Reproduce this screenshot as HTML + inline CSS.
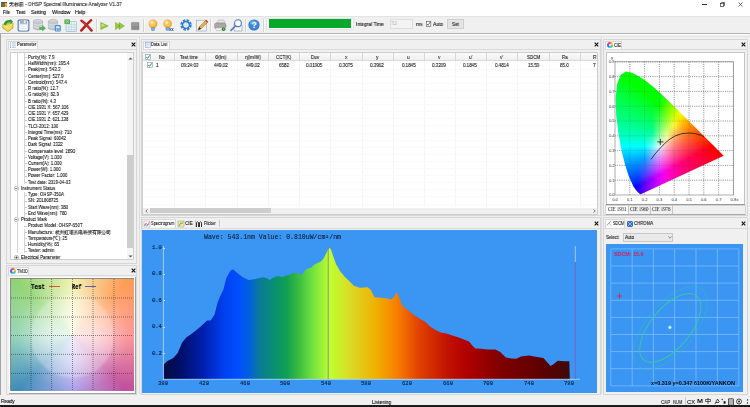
<!DOCTYPE html><html><head><meta charset="utf-8"><style>
*{margin:0;padding:0;box-sizing:border-box}
html,body{width:750px;height:407px;overflow:hidden;background:#f0f0f0;font-family:"Liberation Sans",sans-serif;color:#000;position:relative}
.ab{position:absolute}
.t{position:absolute;white-space:nowrap;transform-origin:0 50%;will-change:transform}

</style></head><body>
<div class="ab" style="left:0px;top:0px;width:750px;height:16px;background:#fff;"></div>
<svg class="ab" style="left:1px;top:2px;overflow:visible" width="6" height="5" viewBox="0 0 6 5"><rect x="0" y="0" width="2" height="5" fill="#3a8a3a"/><rect x="2" y="0" width="2" height="5" fill="#c84a2a"/><rect x="4" y="0" width="2" height="5" fill="#e0b030"/><rect x="0" y="0" width="6" height="1" fill="#555"/></svg>
<div class="ab" style="left:702px;top:4px;width:5px;height:0.8px;background:#333;"></div>
<svg class="ab" style="left:720px;top:2px;overflow:visible" width="5" height="5" viewBox="0 0 5 5"><rect x="0.5" y="1.3" width="3.2" height="3.2" fill="none" stroke="#333" stroke-width="0.7"/><path d="M1.5 1.3V0.5H4.5V3.5H3.7" fill="none" stroke="#333" stroke-width="0.7"/></svg>
<svg class="ab" style="left:738px;top:2px;overflow:visible" width="5" height="5" viewBox="0 0 5 5"><path d="M0.5 0.5L4.5 4.5M4.5 0.5L0.5 4.5" stroke="#333" stroke-width="0.7"/></svg>
<div class="ab" style="left:0px;top:16px;width:750px;height:1px;background:#e3e3e3;"></div>
<div class="ab" style="left:0px;top:17px;width:750px;height:16px;background:#f0f0f0;"></div>
<div class="ab" style="left:0px;top:33px;width:750px;height:1px;background:#b4b4b4;"></div>
<div class="ab" style="left:0px;top:34px;width:750px;height:1px;background:#fafafa;"></div>
<div class="ab" style="left:95.5px;top:19px;width:1px;height:13px;background:#d4d4d4;"></div>
<div class="ab" style="left:96.5px;top:19px;width:1px;height:13px;background:#fbfbfb;"></div>
<div class="ab" style="left:142.5px;top:19px;width:1px;height:13px;background:#d4d4d4;"></div>
<div class="ab" style="left:143.5px;top:19px;width:1px;height:13px;background:#fbfbfb;"></div>
<div class="ab" style="left:210px;top:19px;width:1px;height:13px;background:#d4d4d4;"></div>
<div class="ab" style="left:211px;top:19px;width:1px;height:13px;background:#fbfbfb;"></div>
<div class="ab" style="left:245px;top:19px;width:1px;height:13px;background:#d4d4d4;"></div>
<div class="ab" style="left:246px;top:19px;width:1px;height:13px;background:#fbfbfb;"></div>
<div class="ab" style="left:263px;top:19px;width:1px;height:13px;background:#d4d4d4;"></div>
<div class="ab" style="left:264px;top:19px;width:1px;height:13px;background:#fbfbfb;"></div>
<svg class="ab" style="left:2px;top:19px;overflow:visible" width="12" height="13" viewBox="0 0 12 13"><path d="M0.8 5.5 L11 4 L11 9 L6 12.6 L0.8 9Z" fill="#f2d84a" stroke="#a08a20" stroke-width="0.6"/><path d="M1.2 6 L6 9 L10.6 5" fill="none" stroke="#fff3a0" stroke-width="0.6"/><path d="M1.5 5.2 Q3 0.5 8.5 1 L8 -0.2 L11 2.5 L8.5 5.2 L8.5 3.6 Q5 3.2 3.5 6.5Z" fill="#2e9a36"/></svg>
<svg class="ab" style="left:17px;top:19px;overflow:visible" width="13" height="13" viewBox="0 0 13 13"><rect x="0.6" y="0.6" width="11.8" height="11.8" rx="1.6" fill="#4a6ea8"/><rect x="1.6" y="1.4" width="9.8" height="10.2" rx="1" fill="#dfe8f5"/><rect x="3" y="0.6" width="7" height="4.2" fill="#a6b0c0"/><rect x="6.8" y="1.2" width="1.8" height="3" fill="#e8ecf2"/><rect x="2.8" y="6.4" width="7.4" height="5" fill="#fff"/><path d="M3.6 8H9.4M3.6 9.6H9.4" stroke="#b8c8e0" stroke-width="0.5"/></svg>
<svg class="ab" style="left:33px;top:19px;overflow:visible" width="13" height="12" viewBox="0 0 13 12"><ellipse cx="5" cy="2.4" rx="4.6" ry="2" fill="#d4d8dc" stroke="#9aa0a6" stroke-width="0.5"/><path d="M0.4 2.4 V9.6 Q5 12.6 9.6 9.6 V2.4" fill="#c2c7cc" stroke="#9aa0a6" stroke-width="0.5"/><path d="M0.4 5 Q5 7.6 9.6 5 M0.4 7.4 Q5 10 9.6 7.4" fill="none" stroke="#eef0f2" stroke-width="0.6"/><path d="M6.5 8.2 H9.5 V6.5 L12.6 9.3 L9.5 12 V10.4 H6.5Z" fill="#50b848" stroke="#2a8a2a" stroke-width="0.3"/></svg>
<svg class="ab" style="left:48px;top:19px;overflow:visible" width="13" height="12.5" viewBox="0 0 13 12.5"><ellipse cx="5" cy="2.4" rx="4.6" ry="2" fill="#d4d8dc" stroke="#9aa0a6" stroke-width="0.5"/><path d="M0.4 2.4 V9.6 Q5 12.6 9.6 9.6 V2.4" fill="#c2c7cc" stroke="#9aa0a6" stroke-width="0.5"/><path d="M0.4 5 Q5 7.6 9.6 5 M0.4 7.4 Q5 10 9.6 7.4" fill="none" stroke="#eef0f2" stroke-width="0.6"/><rect x="6.8" y="6" width="6" height="6.4" rx="1" fill="#4a90c8"/><rect x="8" y="7.2" width="3.6" height="2.2" fill="#d8ecff"/><rect x="8" y="10.3" width="1.2" height="1.4" fill="#d8ecff"/><rect x="10.4" y="10.3" width="1.2" height="1.4" fill="#d8ecff"/></svg>
<svg class="ab" style="left:64px;top:19px;overflow:visible" width="13" height="13" viewBox="0 0 13 13"><rect x="2" y="2.5" width="10.4" height="10" rx="0.6" fill="#eaf4fb" stroke="#8ab0c8" stroke-width="0.6"/><path d="M2 5.6H12.4M2 8.2H12.4M2 10.6H12.4M4.8 2.5V12.5M7.4 2.5V12.5M10 2.5V12.5" stroke="#a8c8dc" stroke-width="0.45"/><rect x="0.4" y="0.4" width="5.6" height="4.6" fill="#5aae48"/><path d="M1.6 1.4L4.8 4M4.8 1.4L1.6 4" stroke="#c8f0b8" stroke-width="0.6"/></svg>
<svg class="ab" style="left:80px;top:19px;overflow:visible" width="13" height="13" viewBox="0 0 13 13"><path d="M1.5 1.8 Q6 5 11.6 11.6 M11.2 1.2 Q6 6 1.2 11.6" stroke="#b81c1c" stroke-width="2.4" stroke-linecap="round" fill="none"/><path d="M2 2.2 Q6 5.2 11 10.8" stroke="#e05050" stroke-width="0.7" fill="none"/></svg>
<svg class="ab" style="left:100px;top:21.5px;overflow:visible" width="9" height="8" viewBox="0 0 9 8"><path d="M0.8 0.5 L8.2 4 L0.8 7.5Z" fill="#9ccc3a" stroke="#6a9a20" stroke-width="0.5"/><path d="M1.6 1.8 L5 3.6 L1.6 4.6Z" fill="#c8ec80"/></svg>
<svg class="ab" style="left:115px;top:21.5px;overflow:visible" width="10" height="8" viewBox="0 0 10 8"><path d="M0.6 0.5 L5.2 4 L0.6 7.5Z M4 0.5 L9.4 4 L4 7.5Z" fill="#9ccc3a" stroke="#6a9a20" stroke-width="0.5"/></svg>
<svg class="ab" style="left:131px;top:21.5px;overflow:visible" width="8.5" height="8" viewBox="0 0 8.5 8"><rect x="0.4" y="0.4" width="7.6" height="7.4" rx="0.5" fill="#8c8c8c" stroke="#777" stroke-width="0.4"/><rect x="1" y="1" width="6.4" height="3" fill="#9a9a9a"/></svg>
<svg class="ab" style="left:148px;top:18.5px;overflow:visible" width="10" height="12" viewBox="0 0 10 12"><circle cx="5" cy="4.8" r="4.4" fill="#f3a828"/><circle cx="4.5" cy="4.2" r="3.2" fill="#f8c860"/><circle cx="4" cy="3.4" r="1.6" fill="#fde8b0"/><path d="M3.2 8.6 L3.4 11.2 Q5 12.2 6.6 11.2 L6.8 8.6Z" fill="#88acd8" stroke="#5a80b8" stroke-width="0.4"/></svg>
<svg class="ab" style="left:163px;top:18.5px;overflow:visible" width="11" height="12.5" viewBox="0 0 11 12.5"><circle cx="4.6" cy="4.8" r="4.3" fill="#f3a828"/><circle cx="4.1" cy="4.2" r="3.1" fill="#f8c860"/><circle cx="3.6" cy="3.4" r="1.5" fill="#fde8b0"/><path d="M2.8 8.6 L3 11 Q4.6 12 6.2 11 L6.4 8.6Z" fill="#88acd8" stroke="#5a80b8" stroke-width="0.4"/><path d="M6.4 9 L8.2 12 M8.2 9 L6.4 12 M8.6 9 L10.4 12 M10.4 9 L8.6 12" stroke="#2a5aa8" stroke-width="0.7"/></svg>
<svg class="ab" style="left:180px;top:19px;overflow:visible" width="12" height="12" viewBox="0 0 12 12"><circle cx="6" cy="6" r="4.4" fill="none" stroke="#2e7fd4" stroke-width="2.6" stroke-dasharray="2.3 1.15"/><circle cx="6" cy="6" r="3.3" fill="none" stroke="#2a78cc" stroke-width="1.2"/><circle cx="5.4" cy="5.2" r="1.6" fill="none" stroke="#9ccaf6" stroke-width="0.6"/></svg>
<svg class="ab" style="left:196px;top:19px;overflow:visible" width="12.5" height="12.5" viewBox="0 0 12.5 12.5"><rect x="0.5" y="1.2" width="10" height="10.8" fill="#eef0f4" stroke="#98a2b0" stroke-width="0.6"/><path d="M2.2 11 L3.2 8 L10.2 1 L12 2.8 L5 9.8Z" fill="#f6b040" stroke="#704018" stroke-width="0.45"/><path d="M10.2 1 L12 2.8 L11 3.8 L9.2 2Z" fill="#d04040"/><path d="M2.2 11 L3.2 8 L5 9.8Z" fill="#222"/></svg>
<svg class="ab" style="left:214px;top:19px;overflow:visible" width="12.5" height="12.5" viewBox="0 0 12.5 12.5"><path d="M2.5 4 L4.5 1 L10 1 L11 4Z" fill="#e4e4e4" stroke="#999" stroke-width="0.4"/><rect x="0.5" y="4" width="11.5" height="5.5" rx="1.8" fill="#a8a8a8" stroke="#777" stroke-width="0.4"/><path d="M1.5 9 L2.5 11.6 H9 L10 9Z" fill="#f4f4f4" stroke="#999" stroke-width="0.4"/><circle cx="9.6" cy="10.2" r="1.8" fill="#2a7a2a"/><circle cx="9.6" cy="10.2" r="0.9" fill="#5ac85a"/></svg>
<svg class="ab" style="left:230px;top:19px;overflow:visible" width="12.5" height="12.5" viewBox="0 0 12.5 12.5"><path d="M4 4.5 V12 H12 V6" fill="#f4f6fa" stroke="#8a96aa" stroke-width="0.6"/><circle cx="8" cy="4.2" r="3.4" fill="#fff" fill-opacity="0.8" stroke="#4a7cc4" stroke-width="1.1"/><path d="M5.6 6.8 L1 11.4" stroke="#4a7cc4" stroke-width="1.5" stroke-linecap="round"/></svg>
<svg class="ab" style="left:248px;top:19px;overflow:visible" width="12" height="12" viewBox="0 0 12 12"><circle cx="6" cy="6" r="5.6" fill="#2a70cc"/><circle cx="6" cy="6" r="4.8" fill="#3a88de"/><ellipse cx="5.4" cy="3.8" rx="3.4" ry="2.2" fill="#7ab4f0" opacity="0.7"/><text x="6" y="9.4" font-size="8.5" font-weight="bold" text-anchor="middle" fill="#fff" font-family="Liberation Sans">?</text></svg>
<div class="ab" style="left:266px;top:18px;width:88px;height:12px;background:#fbfbfb;border:1px solid #e4e4e4"></div>
<div class="ab" style="left:268.7px;top:19px;width:82.6px;height:9px;background:#0aa82a;"></div>
<div class="ab" style="left:389.5px;top:19.4px;width:23.5px;height:9.2px;background:#f3f3f3;border:1px solid #dedede"></div>
<svg class="ab" style="left:426px;top:21px;overflow:visible" width="5" height="6" viewBox="0 0 5 6"><rect x="0.4" y="0.4" width="4.4" height="5" fill="#fff" stroke="#555" stroke-width="0.6"/><path d="M1 3 L2.1 4.3 L4.2 1.1" stroke="#333" stroke-width="0.7" fill="none"/></svg>
<div class="ab" style="left:446.6px;top:19px;width:17.4px;height:10px;background:#e4e4e4;border:1px solid #cfcfcf"></div>
<div class="ab" style="left:138.5px;top:36px;width:1px;height:358px;background:#dcdcdc;"></div>
<div class="ab" style="left:601px;top:36px;width:1px;height:358px;background:#dcdcdc;"></div>
<div class="ab" style="left:0px;top:36px;width:750px;height:1px;background:#e6e6e6;"></div>
<div class="ab" style="left:0px;top:34px;width:1px;height:363px;background:#a4a4a4;"></div>
<div class="ab" style="left:6px;top:39px;width:131px;height:225px;background:#f0f0f0;border:1px solid #d6d6d6"></div>
<div class="ab" style="left:8px;top:40.5px;width:30px;height:8.5px;background:#fcfcfc;border:1px solid #d8d8d8;border-bottom:none"></div>
<svg class="ab" style="left:9.6px;top:41.5px;overflow:visible" width="6" height="6" viewBox="0 0 6 6"><rect x="0" y="0.5" width="1" height="1" fill="#7a9ad0"/><rect x="1.8" y="0.6" width="4" height="0.8" fill="#9ab0d8"/><rect x="0" y="2.6" width="1" height="1" fill="#7a9ad0"/><rect x="1.8" y="2.7" width="4" height="0.8" fill="#9ab0d8"/><rect x="0" y="4.7" width="1" height="1" fill="#5a7ac0"/><rect x="1.8" y="4.8" width="4" height="0.8" fill="#9ab0d8"/></svg>
<svg class="ab" style="left:131px;top:42px;overflow:visible" width="5" height="5" viewBox="0 0 5 5"><path d="M0.7 0.7L4.3 4.3M4.3 0.7L0.7 4.3" stroke="#111" stroke-width="1.1"/></svg>
<div class="ab" style="left:7px;top:48.5px;width:129px;height:1px;background:#dadada;"></div>
<div class="ab" style="left:10px;top:52px;width:124px;height:208px;background:#fff;border:1px solid #cfcfcf"></div>
<div class="ab" style="left:127px;top:53px;width:6px;height:206px;background:#f5f5f5;"></div>
<div class="ab" style="left:127px;top:155px;width:6px;height:93px;background:#cdcdcd;"></div>
<svg class="ab" style="left:127.8px;top:56.5px;overflow:visible" width="5" height="3" viewBox="0 0 5 3"><path d="M0.4 2.6L2.5 0.4L4.6 2.6Z" fill="#555"/></svg>
<svg class="ab" style="left:127.8px;top:254.5px;overflow:visible" width="5" height="3" viewBox="0 0 5 3"><path d="M0.4 0.4L2.5 2.6L4.6 0.4Z" fill="#555"/></svg>
<div class="ab" style="left:24px;top:57.4px;width:3px;height:0.7px;background:#c8c8c8;"></div>
<div class="ab" style="left:24px;top:63.64px;width:3px;height:0.7px;background:#c8c8c8;"></div>
<div class="ab" style="left:24px;top:69.88px;width:3px;height:0.7px;background:#c8c8c8;"></div>
<div class="ab" style="left:24px;top:76.12px;width:3px;height:0.7px;background:#c8c8c8;"></div>
<div class="ab" style="left:24px;top:82.36px;width:3px;height:0.7px;background:#c8c8c8;"></div>
<div class="ab" style="left:24px;top:88.6px;width:3px;height:0.7px;background:#c8c8c8;"></div>
<div class="ab" style="left:24px;top:94.84px;width:3px;height:0.7px;background:#c8c8c8;"></div>
<div class="ab" style="left:24px;top:101.08px;width:3px;height:0.7px;background:#c8c8c8;"></div>
<div class="ab" style="left:24px;top:107.32px;width:3px;height:0.7px;background:#c8c8c8;"></div>
<div class="ab" style="left:24px;top:113.56px;width:3px;height:0.7px;background:#c8c8c8;"></div>
<div class="ab" style="left:24px;top:119.80000000000001px;width:3px;height:0.7px;background:#c8c8c8;"></div>
<div class="ab" style="left:24px;top:126.03999999999999px;width:3px;height:0.7px;background:#c8c8c8;"></div>
<div class="ab" style="left:24px;top:132.28px;width:3px;height:0.7px;background:#c8c8c8;"></div>
<div class="ab" style="left:24px;top:138.52px;width:3px;height:0.7px;background:#c8c8c8;"></div>
<div class="ab" style="left:24px;top:144.76px;width:3px;height:0.7px;background:#c8c8c8;"></div>
<div class="ab" style="left:24px;top:151.0px;width:3px;height:0.7px;background:#c8c8c8;"></div>
<div class="ab" style="left:24px;top:157.24px;width:3px;height:0.7px;background:#c8c8c8;"></div>
<div class="ab" style="left:24px;top:163.48px;width:3px;height:0.7px;background:#c8c8c8;"></div>
<div class="ab" style="left:24px;top:169.72px;width:3px;height:0.7px;background:#c8c8c8;"></div>
<div class="ab" style="left:24px;top:175.96px;width:3px;height:0.7px;background:#c8c8c8;"></div>
<div class="ab" style="left:24px;top:182.20000000000002px;width:3px;height:0.7px;background:#c8c8c8;"></div>
<svg class="ab" style="left:14px;top:185.94px;overflow:visible" width="5" height="5" viewBox="0 0 5 5"><circle cx="2.5" cy="2.5" r="2.1" fill="#fff" stroke="#888" stroke-width="0.6"/><path d="M1.3 2.5H3.7" stroke="#222" stroke-width="0.6"/></svg>
<div class="ab" style="left:24px;top:194.68px;width:3px;height:0.7px;background:#c8c8c8;"></div>
<div class="ab" style="left:24px;top:200.92000000000002px;width:3px;height:0.7px;background:#c8c8c8;"></div>
<div class="ab" style="left:24px;top:207.16px;width:3px;height:0.7px;background:#c8c8c8;"></div>
<div class="ab" style="left:24px;top:213.4px;width:3px;height:0.7px;background:#c8c8c8;"></div>
<svg class="ab" style="left:14px;top:217.14000000000001px;overflow:visible" width="5" height="5" viewBox="0 0 5 5"><circle cx="2.5" cy="2.5" r="2.1" fill="#fff" stroke="#888" stroke-width="0.6"/><path d="M1.3 2.5H3.7" stroke="#222" stroke-width="0.6"/></svg>
<div class="ab" style="left:24px;top:225.88000000000002px;width:3px;height:0.7px;background:#c8c8c8;"></div>
<div class="ab" style="left:24px;top:232.12px;width:3px;height:0.7px;background:#c8c8c8;"></div>
<div class="ab" style="left:24px;top:238.36px;width:3px;height:0.7px;background:#c8c8c8;"></div>
<div class="ab" style="left:24px;top:244.60000000000002px;width:3px;height:0.7px;background:#c8c8c8;"></div>
<div class="ab" style="left:24px;top:250.84px;width:3px;height:0.7px;background:#c8c8c8;"></div>
<svg class="ab" style="left:14px;top:254.57999999999998px;overflow:visible" width="5" height="5" viewBox="0 0 5 5"><circle cx="2.5" cy="2.5" r="2.1" fill="#fff" stroke="#888" stroke-width="0.6"/><path d="M1.3 2.5H3.7 M2.5 1.3V3.7" stroke="#222" stroke-width="0.6"/></svg>
<div class="ab" style="left:24px;top:53px;width:0.7px;height:131px;background:#d4d4d4;"></div>
<div class="ab" style="left:16.5px;top:53px;width:0.7px;height:200px;background:#d4d4d4;"></div>
<div class="ab" style="left:24px;top:192px;width:0.7px;height:29px;background:#d4d4d4;"></div>
<div class="ab" style="left:24px;top:229px;width:0.7px;height:24px;background:#d4d4d4;"></div>
<div class="ab" style="left:6px;top:265px;width:131px;height:130px;background:#f0f0f0;border:1px solid #d6d6d6"></div>
<div class="ab" style="left:8px;top:266.5px;width:21px;height:8.5px;background:#fcfcfc;border:1px solid #d8d8d8;border-bottom:none"></div>
<div class="ab" style="left:9.5px;top:267.5px;width:6px;height:6px;background:conic-gradient(from 0deg,#f44,#fd3,#4d4,#3cf,#36f,#c3f,#f44);border-radius:50%"></div>
<div class="ab" style="left:11.5px;top:269.5px;width:2px;height:2px;background:#fff;border-radius:50%"></div>
<svg class="ab" style="left:131px;top:268px;overflow:visible" width="5" height="5" viewBox="0 0 5 5"><path d="M0.7 0.7L4.3 4.3M4.3 0.7L0.7 4.3" stroke="#111" stroke-width="1.1"/></svg>
<div class="ab" style="left:7px;top:275px;width:129px;height:1px;background:#dadada;"></div>
<div class="ab" style="left:9px;top:277px;width:127px;height:117px;background:#fff;border-right:1px solid #a0a0a0;border-bottom:1px solid #a0a0a0"></div>
<div class="ab" style="left:10px;top:278.3px;width:124px;height:112.6px;background:#8a8a8a;"></div>
<div class="ab" style="left:10.8px;top:279.1px;width:122.9px;height:111.5px;background:conic-gradient(from 0deg at 50% 50%,#f0f0a0 0deg,#ff9a50 45deg,#ff8a8a 90deg,#c04a9a 135deg,#9a90e8 180deg,#3a8ab8 225deg,#88d0b0 270deg,#8ed36e 315deg,#f0f0a0 360deg);"></div>
<div class="ab" style="left:10.8px;top:279.1px;width:122.9px;height:111.5px;background:radial-gradient(circle at 50% 51%, rgba(255,255,255,0.85) 0px, rgba(255,255,255,0.7) 24px, rgba(255,255,255,0.5) 40px, rgba(255,255,255,0.32) 43px, rgba(255,255,255,0.15) 55px, rgba(255,255,255,0.04) 72px, rgba(255,255,255,0) 85px);"></div>
<svg class="ab" style="left:0;top:0" width="750" height="407" viewBox="0 0 750 407"><line x1="31" y1="279" x2="31" y2="390" stroke="#222" stroke-opacity="0.8" stroke-width="0.7" stroke-dasharray="0.9 1.1"/><line x1="51.6" y1="279" x2="51.6" y2="390" stroke="#222" stroke-opacity="0.8" stroke-width="0.7" stroke-dasharray="0.9 1.1"/><line x1="72.5" y1="279" x2="72.5" y2="390" stroke="#222" stroke-opacity="0.8" stroke-width="0.7" stroke-dasharray="0.9 1.1"/><line x1="93" y1="279" x2="93" y2="390" stroke="#222" stroke-opacity="0.8" stroke-width="0.7" stroke-dasharray="0.9 1.1"/><line x1="114" y1="279" x2="114" y2="390" stroke="#222" stroke-opacity="0.8" stroke-width="0.7" stroke-dasharray="0.9 1.1"/><line x1="11" y1="298" x2="133" y2="298" stroke="#222" stroke-opacity="0.8" stroke-width="0.7" stroke-dasharray="0.9 1.1"/><line x1="11" y1="317" x2="133" y2="317" stroke="#222" stroke-opacity="0.8" stroke-width="0.7" stroke-dasharray="0.9 1.1"/><line x1="11" y1="335.5" x2="133" y2="335.5" stroke="#222" stroke-opacity="0.8" stroke-width="0.7" stroke-dasharray="0.9 1.1"/><line x1="11" y1="354.4" x2="133" y2="354.4" stroke="#222" stroke-opacity="0.8" stroke-width="0.7" stroke-dasharray="0.9 1.1"/><line x1="11" y1="373.4" x2="133" y2="373.4" stroke="#222" stroke-opacity="0.8" stroke-width="0.7" stroke-dasharray="0.9 1.1"/></svg>
<div class="ab" style="left:48.5px;top:285.5px;width:11px;height:0.9px;background:#d85a30;"></div>
<div class="ab" style="left:85px;top:285.5px;width:11px;height:0.9px;background:#5a5ac8;"></div>
<div class="ab" style="left:141px;top:39px;width:460px;height:177px;background:#f0f0f0;border:1px solid #d6d6d6"></div>
<div class="ab" style="left:143px;top:40.5px;width:27px;height:8.5px;background:#fcfcfc;border:1px solid #d8d8d8;border-bottom:none"></div>
<svg class="ab" style="left:144.5px;top:41.8px;overflow:visible" width="6" height="6" viewBox="0 0 6 6"><rect x="0.3" y="0.3" width="5.2" height="5.2" fill="#eaf2fb" stroke="#7aa4d6" stroke-width="0.5"/><path d="M0.3 2.2H5.5M2 0.3V5.5" stroke="#a0c0e6" stroke-width="0.4"/></svg>
<svg class="ab" style="left:593.5px;top:42px;overflow:visible" width="5" height="5" viewBox="0 0 5 5"><path d="M0.7 0.7L4.3 4.3M4.3 0.7L0.7 4.3" stroke="#111" stroke-width="1.1"/></svg>
<div class="ab" style="left:142px;top:48.5px;width:458px;height:1px;background:#dadada;"></div>
<div class="ab" style="left:142px;top:51.5px;width:456px;height:163.5px;background:#fff;border:1px solid #cdcdcd"></div>
<div class="ab" style="left:143px;top:52.5px;width:454px;height:8.5px;background:linear-gradient(#fafafa,#efefef);border-bottom:1px solid #dadada"></div>
<div class="ab" style="left:173.7px;top:52.5px;width:1px;height:8.5px;background:#d6d6d6;"></div>
<div class="ab" style="left:173.7px;top:61px;width:1px;height:146px;background:#f5f5f5;"></div>
<div class="ab" style="left:205.2px;top:52.5px;width:1px;height:8.5px;background:#d6d6d6;"></div>
<div class="ab" style="left:205.2px;top:61px;width:1px;height:146px;background:#f5f5f5;"></div>
<div class="ab" style="left:236.7px;top:52.5px;width:1px;height:8.5px;background:#d6d6d6;"></div>
<div class="ab" style="left:236.7px;top:61px;width:1px;height:146px;background:#f5f5f5;"></div>
<div class="ab" style="left:268.3px;top:52.5px;width:1px;height:8.5px;background:#d6d6d6;"></div>
<div class="ab" style="left:268.3px;top:61px;width:1px;height:146px;background:#f5f5f5;"></div>
<div class="ab" style="left:299px;top:52.5px;width:1px;height:8.5px;background:#d6d6d6;"></div>
<div class="ab" style="left:299px;top:61px;width:1px;height:146px;background:#f5f5f5;"></div>
<div class="ab" style="left:330px;top:52.5px;width:1px;height:8.5px;background:#d6d6d6;"></div>
<div class="ab" style="left:330px;top:61px;width:1px;height:146px;background:#f5f5f5;"></div>
<div class="ab" style="left:361.7px;top:52.5px;width:1px;height:8.5px;background:#d6d6d6;"></div>
<div class="ab" style="left:361.7px;top:61px;width:1px;height:146px;background:#f5f5f5;"></div>
<div class="ab" style="left:393px;top:52.5px;width:1px;height:8.5px;background:#d6d6d6;"></div>
<div class="ab" style="left:393px;top:61px;width:1px;height:146px;background:#f5f5f5;"></div>
<div class="ab" style="left:423.8px;top:52.5px;width:1px;height:8.5px;background:#d6d6d6;"></div>
<div class="ab" style="left:423.8px;top:61px;width:1px;height:146px;background:#f5f5f5;"></div>
<div class="ab" style="left:454.8px;top:52.5px;width:1px;height:8.5px;background:#d6d6d6;"></div>
<div class="ab" style="left:454.8px;top:61px;width:1px;height:146px;background:#f5f5f5;"></div>
<div class="ab" style="left:485.8px;top:52.5px;width:1px;height:8.5px;background:#d6d6d6;"></div>
<div class="ab" style="left:485.8px;top:61px;width:1px;height:146px;background:#f5f5f5;"></div>
<div class="ab" style="left:517.2px;top:52.5px;width:1px;height:8.5px;background:#d6d6d6;"></div>
<div class="ab" style="left:517.2px;top:61px;width:1px;height:146px;background:#f5f5f5;"></div>
<div class="ab" style="left:549.2px;top:52.5px;width:1px;height:8.5px;background:#d6d6d6;"></div>
<div class="ab" style="left:549.2px;top:61px;width:1px;height:146px;background:#f5f5f5;"></div>
<div class="ab" style="left:579.6px;top:52.5px;width:1px;height:8.5px;background:#d6d6d6;"></div>
<div class="ab" style="left:579.6px;top:61px;width:1px;height:146px;background:#f5f5f5;"></div>
<div class="ab" style="left:143px;top:68.6px;width:454px;height:1px;background:#fafafa;"></div>
<div class="ab" style="left:143px;top:75.7px;width:454px;height:1px;background:#fafafa;"></div>
<div class="ab" style="left:143px;top:82.8px;width:454px;height:1px;background:#fafafa;"></div>
<div class="ab" style="left:143px;top:89.9px;width:454px;height:1px;background:#fafafa;"></div>
<div class="ab" style="left:143px;top:97.0px;width:454px;height:1px;background:#fafafa;"></div>
<div class="ab" style="left:143px;top:104.1px;width:454px;height:1px;background:#fafafa;"></div>
<div class="ab" style="left:143px;top:111.2px;width:454px;height:1px;background:#fafafa;"></div>
<div class="ab" style="left:143px;top:118.3px;width:454px;height:1px;background:#fafafa;"></div>
<div class="ab" style="left:143px;top:125.4px;width:454px;height:1px;background:#fafafa;"></div>
<div class="ab" style="left:143px;top:132.5px;width:454px;height:1px;background:#fafafa;"></div>
<div class="ab" style="left:143px;top:139.6px;width:454px;height:1px;background:#fafafa;"></div>
<div class="ab" style="left:143px;top:146.7px;width:454px;height:1px;background:#fafafa;"></div>
<div class="ab" style="left:143px;top:153.8px;width:454px;height:1px;background:#fafafa;"></div>
<div class="ab" style="left:143px;top:160.9px;width:454px;height:1px;background:#fafafa;"></div>
<div class="ab" style="left:143px;top:168.0px;width:454px;height:1px;background:#fafafa;"></div>
<div class="ab" style="left:143px;top:175.1px;width:454px;height:1px;background:#fafafa;"></div>
<div class="ab" style="left:143px;top:182.2px;width:454px;height:1px;background:#fafafa;"></div>
<div class="ab" style="left:143px;top:189.3px;width:454px;height:1px;background:#fafafa;"></div>
<div class="ab" style="left:143px;top:196.4px;width:454px;height:1px;background:#fafafa;"></div>
<div class="ab" style="left:143px;top:203.5px;width:454px;height:1px;background:#fafafa;"></div>
<svg class="ab" style="left:145px;top:54px;overflow:visible" width="6" height="6" viewBox="0 0 6 6"><rect x="0.4" y="0.4" width="5.2" height="5.2" fill="#fff" stroke="#8090b0" stroke-width="0.6"/><path d="M1.3 3 L2.5 4.3 L4.8 1.3" stroke="#1a9a30" stroke-width="1" fill="none"/></svg>
<svg class="ab" style="left:146.8px;top:61.8px;overflow:visible" width="6" height="6" viewBox="0 0 6 6"><rect x="0.4" y="0.4" width="5.2" height="5.2" fill="#fff" stroke="#8090b0" stroke-width="0.6"/><path d="M1.3 3 L2.5 4.3 L4.8 1.3" stroke="#1a9a30" stroke-width="1" fill="none"/></svg>
<div class="ab" style="left:143px;top:207.5px;width:454px;height:6.5px;background:#f0f0f0;"></div>
<div class="ab" style="left:150px;top:208px;width:120.5px;height:5.4px;background:#cdcdcd;"></div>
<svg class="ab" style="left:145px;top:209px;overflow:visible" width="3" height="4" viewBox="0 0 3 4"><path d="M2.4 0.4L0.8 2L2.4 3.6" stroke="#333" stroke-width="0.7" fill="none"/></svg>
<svg class="ab" style="left:593px;top:209px;overflow:visible" width="3" height="4" viewBox="0 0 3 4"><path d="M0.6 0.4L2.2 2L0.6 3.6" stroke="#333" stroke-width="0.7" fill="none"/></svg>
<div class="ab" style="left:141px;top:217px;width:460px;height:178px;background:#f0f0f0;border:1px solid #d6d6d6"></div>
<div class="ab" style="left:142px;top:227.5px;width:458px;height:1px;background:#dadada;"></div>
<div class="ab" style="left:142px;top:219px;width:34px;height:9px;background:#fcfcfc;border:1px solid #d8d8d8;border-bottom:none"></div>
<svg class="ab" style="left:143.5px;top:220.5px;overflow:visible" width="6" height="6" viewBox="0 0 6 6"><rect x="0" y="0" width="6" height="6" fill="#fff" stroke="#889" stroke-width="0.4"/><path d="M0.5 5 L2 2 L3.5 4 L5.5 0.8" stroke="#c33" stroke-width="0.6" fill="none"/><path d="M0.5 3 L2.5 5 L5.5 3" stroke="#36c" stroke-width="0.6" fill="none"/></svg>
<svg class="ab" style="left:177.5px;top:220.5px;overflow:visible" width="6" height="6" viewBox="0 0 6 6"><rect x="0" y="0" width="6" height="6" fill="#f2e6a0" stroke="#888" stroke-width="0.4"/><path d="M1 5 Q2 1 5 2" stroke="#3a3" stroke-width="0.8" fill="none"/></svg>
<div class="ab" style="left:194.5px;top:220px;width:0.8px;height:7px;background:#c8c8c8;"></div>
<svg class="ab" style="left:196px;top:220.5px;overflow:visible" width="6" height="6" viewBox="0 0 6 6"><path d="M0.5 6V1.5Q1.5 0 2.5 1.5V6M3.5 6V1.5Q4.5 0 5.5 1.5V6" stroke="#333" stroke-width="1" fill="none"/></svg>
<div class="ab" style="left:219px;top:220px;width:0.8px;height:7px;background:#c8c8c8;"></div>
<svg class="ab" style="left:593.5px;top:221px;overflow:visible" width="5" height="5" viewBox="0 0 5 5"><path d="M0.7 0.7L4.3 4.3M4.3 0.7L0.7 4.3" stroke="#111" stroke-width="1.1"/></svg>
<div class="ab" style="left:142px;top:230px;width:455px;height:162.5px;background:#3a95f3;"></div>
<svg class="ab" style="left:0;top:0" width="750" height="407" viewBox="0 0 750 407">
<defs><linearGradient id="sg" gradientUnits="userSpaceOnUse" x1="163" y1="0" x2="569" y2="0"><stop offset="0.000" stop-color="#000a40"/><stop offset="0.050" stop-color="#001070"/><stop offset="0.100" stop-color="#0020b0"/><stop offset="0.150" stop-color="#0040f0"/><stop offset="0.188" stop-color="#0050ff"/><stop offset="0.212" stop-color="#0060e0"/><stop offset="0.237" stop-color="#0a7a9a"/><stop offset="0.275" stop-color="#089070"/><stop offset="0.305" stop-color="#10a050"/><stop offset="0.338" stop-color="#40c040"/><stop offset="0.367" stop-color="#70e040"/><stop offset="0.412" stop-color="#c0ff30"/><stop offset="0.475" stop-color="#e0d020"/><stop offset="0.525" stop-color="#f0b000"/><stop offset="0.575" stop-color="#f88000"/><stop offset="0.632" stop-color="#e04000"/><stop offset="0.705" stop-color="#c01000"/><stop offset="0.750" stop-color="#b00000"/><stop offset="0.830" stop-color="#800000"/><stop offset="0.927" stop-color="#600000"/><stop offset="1.000" stop-color="#400808"/></linearGradient></defs>
<path d="M163.5 379.2 L163.5 364.7 L167.4 360.9 L173.3 357.9 L177.7 352.9 L182.1 342.6 L186.5 337.3 L192.4 333.2 L199.8 327.3 L207.2 320.5 L210.7 320.5 L214.6 314.6 L217.5 302.8 L220.5 295.4 L223.4 289.5 L226.4 277.7 L230.8 270.3 L233.2 269.4 L236.7 272.4 L242.6 277.1 L248.5 280.1 L254.4 279.2 L259.4 278.0 L263.8 277.2 L266.8 278.3 L269.7 280.1 L273.4 277.6 L277.9 276.1 L282.3 276.9 L286.7 275.4 L291.1 274.2 L294.8 272.7 L297.8 273.2 L301.5 275.1 L305.1 270.2 L308.1 268.3 L311.0 267.7 L314.0 264.8 L317.0 263.3 L320.6 261.8 L323.6 258.4 L325.8 254.0 L328.0 249.6 L329.5 248.1 L331.0 249.6 L333.2 256.2 L336.1 264.3 L340.5 271.7 L345.0 276.9 L349.4 281.3 L353.9 285.7 L359.8 287.7 L367.7 287.3 L370.7 289.7 L374.6 297.2 L378.5 297.6 L385.4 298.0 L391.3 299.5 L394.3 296.6 L396.9 292.0 L399.2 297.6 L402.2 305.4 L407.1 309.4 L413.0 314.3 L420.9 319.6 L424.8 321.6 L430.7 327.1 L435.6 330.0 L440.6 332.6 L446.5 333.4 L452.4 335.4 L460.2 337.9 L465.0 340.0 L469.0 341.6 L472.2 345.6 L475.4 348.5 L481.0 348.8 L487.4 349.6 L495.4 349.6 L500.2 352.0 L505.8 357.6 L511.4 358.4 L516.2 358.7 L521.0 356.5 L529.0 355.5 L535.4 356.8 L543.4 358.1 L547.4 362.4 L550.6 366.1 L553.8 364.0 L557.8 360.8 L564.2 361.3 L569.3 361.3 L569.8 379.2 Z" fill="url(#sg)"/>
<line x1="163.4" y1="246" x2="163.4" y2="379.5" stroke="#bfe0ff" stroke-width="0.8"/>
<line x1="163" y1="379.3" x2="580" y2="379.3" stroke="#bfe0ff" stroke-width="0.8"/>
<line x1="328.2" y1="247" x2="328.2" y2="379" stroke="#8a8a80" stroke-width="0.9"/>
<line x1="575.3" y1="262" x2="575.3" y2="379" stroke="#8a5ab8" stroke-width="0.9"/><line x1="575.3" y1="246" x2="575.3" y2="262" stroke="#a8d0f8" stroke-width="0.9"/>
</svg>
<div class="ab" style="left:163.4px;top:247.5px;width:2px;height:0.8px;background:#bfe0ff;"></div>
<div class="ab" style="left:163.4px;top:273.9px;width:2px;height:0.8px;background:#bfe0ff;"></div>
<div class="ab" style="left:163.4px;top:300.3px;width:2px;height:0.8px;background:#bfe0ff;"></div>
<div class="ab" style="left:163.4px;top:326.7px;width:2px;height:0.8px;background:#bfe0ff;"></div>
<div class="ab" style="left:163.4px;top:353.1px;width:2px;height:0.8px;background:#bfe0ff;"></div>
<div class="ab" style="left:603px;top:39px;width:145px;height:177px;background:#f0f0f0;border:1px solid #d6d6d6"></div>
<div class="ab" style="left:605px;top:40.5px;width:17px;height:8.5px;background:#fcfcfc;border:1px solid #d8d8d8;border-bottom:none"></div>
<div class="ab" style="left:606.5px;top:41.5px;width:6px;height:6px;background:conic-gradient(from 0deg,#f44,#fd3,#4d4,#3cf,#36f,#c3f,#f44);border-radius:50%"></div>
<div class="ab" style="left:608.5px;top:43.5px;width:2px;height:2px;background:#fff;border-radius:50%"></div>
<svg class="ab" style="left:741px;top:42px;overflow:visible" width="5" height="5" viewBox="0 0 5 5"><path d="M0.7 0.7L4.3 4.3M4.3 0.7L0.7 4.3" stroke="#111" stroke-width="1.1"/></svg>
<div class="ab" style="left:604px;top:48.5px;width:143px;height:1px;background:#dadada;"></div>
<div class="ab" style="left:606px;top:52px;width:139px;height:153px;background:#fff;border:1px solid #c4c4c4"></div>
<svg class="ab" style="left:0;top:0" width="750" height="407" viewBox="0 0 750 407">
<defs><clipPath id="lc"><path d="M640.8 194.3 L640.7 194.3 L640.5 194.3 L640.4 194.2 L640.0 194.0 L639.3 193.4 L638.2 192.4 L636.3 190.6 L633.4 186.4 L628.5 175.4 L625.2 165.3 L621.7 151.3 L618.5 133.9 L616.2 115.3 L615.6 98.1 L617.1 84.0 L620.8 74.8 L626.0 71.6 L631.9 72.7 L637.9 75.7 L643.5 79.3 L649.0 83.4 L654.3 87.8 L659.6 92.5 L664.9 97.5 L670.2 102.6 L675.5 107.7 L680.7 112.9 L685.9 118.0 L690.9 123.0 L695.6 127.7 L700.1 132.2 L704.2 136.3 L707.8 139.9 L710.9 143.0 L713.5 145.6 L715.7 147.7 L717.3 149.4 L718.7 150.7 L719.8 151.8 L720.7 152.7 L723.7 155.7 Z"/></clipPath><linearGradient id="r0" gradientUnits="userSpaceOnUse" x1="615.0" y1="0" x2="733.4" y2="0"><stop offset="0.000" stop-color="#00ff00"/><stop offset="0.062" stop-color="#00ff00"/><stop offset="0.125" stop-color="#00ff00"/><stop offset="0.188" stop-color="#00ff00"/><stop offset="0.250" stop-color="#00ff00"/><stop offset="0.312" stop-color="#00ff00"/><stop offset="0.375" stop-color="#00ff00"/><stop offset="0.438" stop-color="#00ff00"/><stop offset="0.500" stop-color="#00ff00"/><stop offset="0.562" stop-color="#00ff00"/><stop offset="0.625" stop-color="#00ff00"/><stop offset="0.688" stop-color="#00ff00"/><stop offset="0.750" stop-color="#00ff00"/><stop offset="0.812" stop-color="#00ff00"/><stop offset="0.875" stop-color="#00ff00"/><stop offset="0.938" stop-color="#00ff00"/><stop offset="1.000" stop-color="#00ff00"/></linearGradient><linearGradient id="r1" gradientUnits="userSpaceOnUse" x1="615.0" y1="0" x2="733.4" y2="0"><stop offset="0.000" stop-color="#00ff04"/><stop offset="0.062" stop-color="#00ff00"/><stop offset="0.125" stop-color="#00ff00"/><stop offset="0.188" stop-color="#00ff00"/><stop offset="0.250" stop-color="#00ff00"/><stop offset="0.312" stop-color="#00ff00"/><stop offset="0.375" stop-color="#00ff00"/><stop offset="0.438" stop-color="#00ff00"/><stop offset="0.500" stop-color="#00ff00"/><stop offset="0.562" stop-color="#00ff00"/><stop offset="0.625" stop-color="#00ff00"/><stop offset="0.688" stop-color="#00ff00"/><stop offset="0.750" stop-color="#00ff00"/><stop offset="0.812" stop-color="#00ff00"/><stop offset="0.875" stop-color="#00ff00"/><stop offset="0.938" stop-color="#00ff00"/><stop offset="1.000" stop-color="#00ff00"/></linearGradient><linearGradient id="r2" gradientUnits="userSpaceOnUse" x1="615.0" y1="0" x2="733.4" y2="0"><stop offset="0.000" stop-color="#00ff09"/><stop offset="0.062" stop-color="#00ff00"/><stop offset="0.125" stop-color="#00ff00"/><stop offset="0.188" stop-color="#00ff00"/><stop offset="0.250" stop-color="#00ff00"/><stop offset="0.312" stop-color="#00ff00"/><stop offset="0.375" stop-color="#00ff00"/><stop offset="0.438" stop-color="#00ff00"/><stop offset="0.500" stop-color="#00ff00"/><stop offset="0.562" stop-color="#00ff00"/><stop offset="0.625" stop-color="#00ff00"/><stop offset="0.688" stop-color="#00ff00"/><stop offset="0.750" stop-color="#00ff00"/><stop offset="0.812" stop-color="#00ff00"/><stop offset="0.875" stop-color="#00ff00"/><stop offset="0.938" stop-color="#00ff00"/><stop offset="1.000" stop-color="#00ff00"/></linearGradient><linearGradient id="r3" gradientUnits="userSpaceOnUse" x1="615.0" y1="0" x2="733.4" y2="0"><stop offset="0.000" stop-color="#00ff0d"/><stop offset="0.062" stop-color="#00ff00"/><stop offset="0.125" stop-color="#00ff00"/><stop offset="0.188" stop-color="#00ff00"/><stop offset="0.250" stop-color="#00ff00"/><stop offset="0.312" stop-color="#00ff00"/><stop offset="0.375" stop-color="#00ff00"/><stop offset="0.438" stop-color="#00ff00"/><stop offset="0.500" stop-color="#00ff00"/><stop offset="0.562" stop-color="#00ff00"/><stop offset="0.625" stop-color="#00ff00"/><stop offset="0.688" stop-color="#00ff00"/><stop offset="0.750" stop-color="#00ff00"/><stop offset="0.812" stop-color="#00ff00"/><stop offset="0.875" stop-color="#00ff00"/><stop offset="0.938" stop-color="#00ff00"/><stop offset="1.000" stop-color="#00ff00"/></linearGradient><linearGradient id="r4" gradientUnits="userSpaceOnUse" x1="615.0" y1="0" x2="733.4" y2="0"><stop offset="0.000" stop-color="#00ff10"/><stop offset="0.062" stop-color="#00ff00"/><stop offset="0.125" stop-color="#00ff00"/><stop offset="0.188" stop-color="#00ff00"/><stop offset="0.250" stop-color="#00ff00"/><stop offset="0.312" stop-color="#00ff00"/><stop offset="0.375" stop-color="#00ff00"/><stop offset="0.438" stop-color="#00ff00"/><stop offset="0.500" stop-color="#00ff00"/><stop offset="0.562" stop-color="#00ff00"/><stop offset="0.625" stop-color="#00ff00"/><stop offset="0.688" stop-color="#00ff00"/><stop offset="0.750" stop-color="#00ff00"/><stop offset="0.812" stop-color="#00ff00"/><stop offset="0.875" stop-color="#00ff00"/><stop offset="0.938" stop-color="#00ff00"/><stop offset="1.000" stop-color="#00ff00"/></linearGradient><linearGradient id="r5" gradientUnits="userSpaceOnUse" x1="615.0" y1="0" x2="733.4" y2="0"><stop offset="0.000" stop-color="#00ff13"/><stop offset="0.062" stop-color="#00ff00"/><stop offset="0.125" stop-color="#00ff00"/><stop offset="0.188" stop-color="#00ff00"/><stop offset="0.250" stop-color="#00ff00"/><stop offset="0.312" stop-color="#00ff00"/><stop offset="0.375" stop-color="#00ff00"/><stop offset="0.438" stop-color="#00ff00"/><stop offset="0.500" stop-color="#00ff00"/><stop offset="0.562" stop-color="#00ff00"/><stop offset="0.625" stop-color="#00ff00"/><stop offset="0.688" stop-color="#00ff00"/><stop offset="0.750" stop-color="#00ff00"/><stop offset="0.812" stop-color="#00ff00"/><stop offset="0.875" stop-color="#00ff00"/><stop offset="0.938" stop-color="#00ff00"/><stop offset="1.000" stop-color="#00ff00"/></linearGradient><linearGradient id="r6" gradientUnits="userSpaceOnUse" x1="615.0" y1="0" x2="733.4" y2="0"><stop offset="0.000" stop-color="#00ff16"/><stop offset="0.062" stop-color="#00ff00"/><stop offset="0.125" stop-color="#00ff00"/><stop offset="0.188" stop-color="#00ff00"/><stop offset="0.250" stop-color="#00ff00"/><stop offset="0.312" stop-color="#00ff00"/><stop offset="0.375" stop-color="#00ff00"/><stop offset="0.438" stop-color="#00ff00"/><stop offset="0.500" stop-color="#00ff00"/><stop offset="0.562" stop-color="#00ff00"/><stop offset="0.625" stop-color="#00ff00"/><stop offset="0.688" stop-color="#00ff00"/><stop offset="0.750" stop-color="#00ff00"/><stop offset="0.812" stop-color="#00ff00"/><stop offset="0.875" stop-color="#00ff00"/><stop offset="0.938" stop-color="#00ff00"/><stop offset="1.000" stop-color="#00ff00"/></linearGradient><linearGradient id="r7" gradientUnits="userSpaceOnUse" x1="615.0" y1="0" x2="733.4" y2="0"><stop offset="0.000" stop-color="#00ff19"/><stop offset="0.062" stop-color="#00ff05"/><stop offset="0.125" stop-color="#00ff00"/><stop offset="0.188" stop-color="#00ff00"/><stop offset="0.250" stop-color="#00ff00"/><stop offset="0.312" stop-color="#00ff00"/><stop offset="0.375" stop-color="#00ff00"/><stop offset="0.438" stop-color="#00ff00"/><stop offset="0.500" stop-color="#00ff00"/><stop offset="0.562" stop-color="#00ff00"/><stop offset="0.625" stop-color="#00ff00"/><stop offset="0.688" stop-color="#00ff00"/><stop offset="0.750" stop-color="#00ff00"/><stop offset="0.812" stop-color="#00ff00"/><stop offset="0.875" stop-color="#00ff00"/><stop offset="0.938" stop-color="#00ff00"/><stop offset="1.000" stop-color="#00ff00"/></linearGradient><linearGradient id="r8" gradientUnits="userSpaceOnUse" x1="615.0" y1="0" x2="733.4" y2="0"><stop offset="0.000" stop-color="#00ff1c"/><stop offset="0.062" stop-color="#00ff0a"/><stop offset="0.125" stop-color="#00ff00"/><stop offset="0.188" stop-color="#00ff00"/><stop offset="0.250" stop-color="#00ff00"/><stop offset="0.312" stop-color="#00ff00"/><stop offset="0.375" stop-color="#00ff00"/><stop offset="0.438" stop-color="#00ff00"/><stop offset="0.500" stop-color="#00ff00"/><stop offset="0.562" stop-color="#00ff00"/><stop offset="0.625" stop-color="#00ff00"/><stop offset="0.688" stop-color="#00ff00"/><stop offset="0.750" stop-color="#00ff00"/><stop offset="0.812" stop-color="#00ff00"/><stop offset="0.875" stop-color="#00ff00"/><stop offset="0.938" stop-color="#00ff00"/><stop offset="1.000" stop-color="#00ff00"/></linearGradient><linearGradient id="r9" gradientUnits="userSpaceOnUse" x1="615.0" y1="0" x2="733.4" y2="0"><stop offset="0.000" stop-color="#00ff1f"/><stop offset="0.062" stop-color="#00ff0e"/><stop offset="0.125" stop-color="#00ff00"/><stop offset="0.188" stop-color="#00ff00"/><stop offset="0.250" stop-color="#00ff00"/><stop offset="0.312" stop-color="#00ff00"/><stop offset="0.375" stop-color="#00ff00"/><stop offset="0.438" stop-color="#00ff00"/><stop offset="0.500" stop-color="#00ff00"/><stop offset="0.562" stop-color="#00ff00"/><stop offset="0.625" stop-color="#00ff00"/><stop offset="0.688" stop-color="#00ff00"/><stop offset="0.750" stop-color="#00ff00"/><stop offset="0.812" stop-color="#00ff00"/><stop offset="0.875" stop-color="#00ff00"/><stop offset="0.938" stop-color="#00ff00"/><stop offset="1.000" stop-color="#00ff00"/></linearGradient><linearGradient id="r10" gradientUnits="userSpaceOnUse" x1="615.0" y1="0" x2="733.4" y2="0"><stop offset="0.000" stop-color="#00ff22"/><stop offset="0.062" stop-color="#00ff12"/><stop offset="0.125" stop-color="#00ff00"/><stop offset="0.188" stop-color="#00ff00"/><stop offset="0.250" stop-color="#00ff00"/><stop offset="0.312" stop-color="#00ff00"/><stop offset="0.375" stop-color="#00ff00"/><stop offset="0.438" stop-color="#00ff00"/><stop offset="0.500" stop-color="#00ff00"/><stop offset="0.562" stop-color="#00ff00"/><stop offset="0.625" stop-color="#00ff00"/><stop offset="0.688" stop-color="#00ff00"/><stop offset="0.750" stop-color="#00ff00"/><stop offset="0.812" stop-color="#00ff00"/><stop offset="0.875" stop-color="#00ff00"/><stop offset="0.938" stop-color="#00ff00"/><stop offset="1.000" stop-color="#00ff00"/></linearGradient><linearGradient id="r11" gradientUnits="userSpaceOnUse" x1="615.0" y1="0" x2="733.4" y2="0"><stop offset="0.000" stop-color="#00ff24"/><stop offset="0.062" stop-color="#00ff15"/><stop offset="0.125" stop-color="#00ff00"/><stop offset="0.188" stop-color="#00ff00"/><stop offset="0.250" stop-color="#00ff00"/><stop offset="0.312" stop-color="#00ff00"/><stop offset="0.375" stop-color="#00ff00"/><stop offset="0.438" stop-color="#00ff00"/><stop offset="0.500" stop-color="#00ff00"/><stop offset="0.562" stop-color="#00ff00"/><stop offset="0.625" stop-color="#00ff00"/><stop offset="0.688" stop-color="#00ff00"/><stop offset="0.750" stop-color="#00ff00"/><stop offset="0.812" stop-color="#00ff00"/><stop offset="0.875" stop-color="#00ff00"/><stop offset="0.938" stop-color="#00ff00"/><stop offset="1.000" stop-color="#00ff00"/></linearGradient><linearGradient id="r12" gradientUnits="userSpaceOnUse" x1="615.0" y1="0" x2="733.4" y2="0"><stop offset="0.000" stop-color="#00ff27"/><stop offset="0.062" stop-color="#00ff18"/><stop offset="0.125" stop-color="#00ff00"/><stop offset="0.188" stop-color="#00ff00"/><stop offset="0.250" stop-color="#00ff00"/><stop offset="0.312" stop-color="#00ff00"/><stop offset="0.375" stop-color="#00ff00"/><stop offset="0.438" stop-color="#00ff00"/><stop offset="0.500" stop-color="#00ff00"/><stop offset="0.562" stop-color="#00ff00"/><stop offset="0.625" stop-color="#00ff00"/><stop offset="0.688" stop-color="#00ff00"/><stop offset="0.750" stop-color="#00ff00"/><stop offset="0.812" stop-color="#00ff00"/><stop offset="0.875" stop-color="#00ff00"/><stop offset="0.938" stop-color="#00ff00"/><stop offset="1.000" stop-color="#00ff00"/></linearGradient><linearGradient id="r13" gradientUnits="userSpaceOnUse" x1="615.0" y1="0" x2="733.4" y2="0"><stop offset="0.000" stop-color="#00ff2a"/><stop offset="0.062" stop-color="#00ff1b"/><stop offset="0.125" stop-color="#00ff06"/><stop offset="0.188" stop-color="#00ff00"/><stop offset="0.250" stop-color="#00ff00"/><stop offset="0.312" stop-color="#00ff00"/><stop offset="0.375" stop-color="#00ff00"/><stop offset="0.438" stop-color="#00ff00"/><stop offset="0.500" stop-color="#00ff00"/><stop offset="0.562" stop-color="#00ff00"/><stop offset="0.625" stop-color="#00ff00"/><stop offset="0.688" stop-color="#00ff00"/><stop offset="0.750" stop-color="#00ff00"/><stop offset="0.812" stop-color="#00ff00"/><stop offset="0.875" stop-color="#00ff00"/><stop offset="0.938" stop-color="#00ff00"/><stop offset="1.000" stop-color="#00ff00"/></linearGradient><linearGradient id="r14" gradientUnits="userSpaceOnUse" x1="615.0" y1="0" x2="733.4" y2="0"><stop offset="0.000" stop-color="#00ff2c"/><stop offset="0.062" stop-color="#00ff1e"/><stop offset="0.125" stop-color="#00ff0b"/><stop offset="0.188" stop-color="#00ff00"/><stop offset="0.250" stop-color="#00ff00"/><stop offset="0.312" stop-color="#00ff00"/><stop offset="0.375" stop-color="#00ff00"/><stop offset="0.438" stop-color="#00ff00"/><stop offset="0.500" stop-color="#00ff00"/><stop offset="0.562" stop-color="#00ff00"/><stop offset="0.625" stop-color="#00ff00"/><stop offset="0.688" stop-color="#00ff00"/><stop offset="0.750" stop-color="#00ff00"/><stop offset="0.812" stop-color="#00ff00"/><stop offset="0.875" stop-color="#00ff00"/><stop offset="0.938" stop-color="#00ff00"/><stop offset="1.000" stop-color="#00ff00"/></linearGradient><linearGradient id="r15" gradientUnits="userSpaceOnUse" x1="615.0" y1="0" x2="733.4" y2="0"><stop offset="0.000" stop-color="#00ff2f"/><stop offset="0.062" stop-color="#00ff21"/><stop offset="0.125" stop-color="#00ff10"/><stop offset="0.188" stop-color="#00ff00"/><stop offset="0.250" stop-color="#00ff00"/><stop offset="0.312" stop-color="#00ff00"/><stop offset="0.375" stop-color="#00ff00"/><stop offset="0.438" stop-color="#00ff00"/><stop offset="0.500" stop-color="#00ff00"/><stop offset="0.562" stop-color="#00ff00"/><stop offset="0.625" stop-color="#00ff00"/><stop offset="0.688" stop-color="#00ff00"/><stop offset="0.750" stop-color="#00ff00"/><stop offset="0.812" stop-color="#00ff00"/><stop offset="0.875" stop-color="#00ff00"/><stop offset="0.938" stop-color="#00ff00"/><stop offset="1.000" stop-color="#00ff00"/></linearGradient><linearGradient id="r16" gradientUnits="userSpaceOnUse" x1="615.0" y1="0" x2="733.4" y2="0"><stop offset="0.000" stop-color="#00ff31"/><stop offset="0.062" stop-color="#00ff24"/><stop offset="0.125" stop-color="#00ff13"/><stop offset="0.188" stop-color="#00ff00"/><stop offset="0.250" stop-color="#00ff00"/><stop offset="0.312" stop-color="#00ff00"/><stop offset="0.375" stop-color="#00ff00"/><stop offset="0.438" stop-color="#00ff00"/><stop offset="0.500" stop-color="#00ff00"/><stop offset="0.562" stop-color="#00ff00"/><stop offset="0.625" stop-color="#00ff00"/><stop offset="0.688" stop-color="#00ff00"/><stop offset="0.750" stop-color="#00ff00"/><stop offset="0.812" stop-color="#00ff00"/><stop offset="0.875" stop-color="#00ff00"/><stop offset="0.938" stop-color="#00ff00"/><stop offset="1.000" stop-color="#00ff00"/></linearGradient><linearGradient id="r17" gradientUnits="userSpaceOnUse" x1="615.0" y1="0" x2="733.4" y2="0"><stop offset="0.000" stop-color="#00ff34"/><stop offset="0.062" stop-color="#00ff27"/><stop offset="0.125" stop-color="#00ff17"/><stop offset="0.188" stop-color="#00ff00"/><stop offset="0.250" stop-color="#00ff00"/><stop offset="0.312" stop-color="#00ff00"/><stop offset="0.375" stop-color="#00ff00"/><stop offset="0.438" stop-color="#00ff00"/><stop offset="0.500" stop-color="#00ff00"/><stop offset="0.562" stop-color="#00ff00"/><stop offset="0.625" stop-color="#00ff00"/><stop offset="0.688" stop-color="#00ff00"/><stop offset="0.750" stop-color="#00ff00"/><stop offset="0.812" stop-color="#00ff00"/><stop offset="0.875" stop-color="#00ff00"/><stop offset="0.938" stop-color="#00ff00"/><stop offset="1.000" stop-color="#00ff00"/></linearGradient><linearGradient id="r18" gradientUnits="userSpaceOnUse" x1="615.0" y1="0" x2="733.4" y2="0"><stop offset="0.000" stop-color="#00ff36"/><stop offset="0.062" stop-color="#00ff2a"/><stop offset="0.125" stop-color="#00ff1a"/><stop offset="0.188" stop-color="#00ff00"/><stop offset="0.250" stop-color="#00ff00"/><stop offset="0.312" stop-color="#00ff00"/><stop offset="0.375" stop-color="#00ff00"/><stop offset="0.438" stop-color="#00ff00"/><stop offset="0.500" stop-color="#00ff00"/><stop offset="0.562" stop-color="#00ff00"/><stop offset="0.625" stop-color="#00ff00"/><stop offset="0.688" stop-color="#00ff00"/><stop offset="0.750" stop-color="#00ff00"/><stop offset="0.812" stop-color="#00ff00"/><stop offset="0.875" stop-color="#00ff00"/><stop offset="0.938" stop-color="#00ff00"/><stop offset="1.000" stop-color="#00ff00"/></linearGradient><linearGradient id="r19" gradientUnits="userSpaceOnUse" x1="615.0" y1="0" x2="733.4" y2="0"><stop offset="0.000" stop-color="#00ff39"/><stop offset="0.062" stop-color="#00ff2d"/><stop offset="0.125" stop-color="#00ff1e"/><stop offset="0.188" stop-color="#00ff08"/><stop offset="0.250" stop-color="#00ff00"/><stop offset="0.312" stop-color="#00ff00"/><stop offset="0.375" stop-color="#00ff00"/><stop offset="0.438" stop-color="#00ff00"/><stop offset="0.500" stop-color="#00ff00"/><stop offset="0.562" stop-color="#00ff00"/><stop offset="0.625" stop-color="#00ff00"/><stop offset="0.688" stop-color="#00ff00"/><stop offset="0.750" stop-color="#00ff00"/><stop offset="0.812" stop-color="#00ff00"/><stop offset="0.875" stop-color="#00ff00"/><stop offset="0.938" stop-color="#00ff00"/><stop offset="1.000" stop-color="#00ff00"/></linearGradient><linearGradient id="r20" gradientUnits="userSpaceOnUse" x1="615.0" y1="0" x2="733.4" y2="0"><stop offset="0.000" stop-color="#00ff3b"/><stop offset="0.062" stop-color="#00ff2f"/><stop offset="0.125" stop-color="#00ff21"/><stop offset="0.188" stop-color="#00ff0d"/><stop offset="0.250" stop-color="#00ff00"/><stop offset="0.312" stop-color="#00ff00"/><stop offset="0.375" stop-color="#00ff00"/><stop offset="0.438" stop-color="#00ff00"/><stop offset="0.500" stop-color="#00ff00"/><stop offset="0.562" stop-color="#00ff00"/><stop offset="0.625" stop-color="#00ff00"/><stop offset="0.688" stop-color="#00ff00"/><stop offset="0.750" stop-color="#00ff00"/><stop offset="0.812" stop-color="#00ff00"/><stop offset="0.875" stop-color="#00ff00"/><stop offset="0.938" stop-color="#00ff00"/><stop offset="1.000" stop-color="#00ff00"/></linearGradient><linearGradient id="r21" gradientUnits="userSpaceOnUse" x1="615.0" y1="0" x2="733.4" y2="0"><stop offset="0.000" stop-color="#00ff3e"/><stop offset="0.062" stop-color="#00ff32"/><stop offset="0.125" stop-color="#00ff24"/><stop offset="0.188" stop-color="#00ff11"/><stop offset="0.250" stop-color="#00ff00"/><stop offset="0.312" stop-color="#00ff00"/><stop offset="0.375" stop-color="#00ff00"/><stop offset="0.438" stop-color="#00ff00"/><stop offset="0.500" stop-color="#00ff00"/><stop offset="0.562" stop-color="#00ff00"/><stop offset="0.625" stop-color="#00ff00"/><stop offset="0.688" stop-color="#00ff00"/><stop offset="0.750" stop-color="#00ff00"/><stop offset="0.812" stop-color="#00ff00"/><stop offset="0.875" stop-color="#00ff00"/><stop offset="0.938" stop-color="#00ff00"/><stop offset="1.000" stop-color="#00ff00"/></linearGradient><linearGradient id="r22" gradientUnits="userSpaceOnUse" x1="615.0" y1="0" x2="733.4" y2="0"><stop offset="0.000" stop-color="#00ff40"/><stop offset="0.062" stop-color="#00ff35"/><stop offset="0.125" stop-color="#00ff27"/><stop offset="0.188" stop-color="#00ff15"/><stop offset="0.250" stop-color="#00ff00"/><stop offset="0.312" stop-color="#00ff00"/><stop offset="0.375" stop-color="#00ff00"/><stop offset="0.438" stop-color="#00ff00"/><stop offset="0.500" stop-color="#00ff00"/><stop offset="0.562" stop-color="#00ff00"/><stop offset="0.625" stop-color="#00ff00"/><stop offset="0.688" stop-color="#00ff00"/><stop offset="0.750" stop-color="#00ff00"/><stop offset="0.812" stop-color="#00ff00"/><stop offset="0.875" stop-color="#00ff00"/><stop offset="0.938" stop-color="#00ff00"/><stop offset="1.000" stop-color="#00ff00"/></linearGradient><linearGradient id="r23" gradientUnits="userSpaceOnUse" x1="615.0" y1="0" x2="733.4" y2="0"><stop offset="0.000" stop-color="#00ff43"/><stop offset="0.062" stop-color="#00ff38"/><stop offset="0.125" stop-color="#00ff2a"/><stop offset="0.188" stop-color="#00ff19"/><stop offset="0.250" stop-color="#00ff00"/><stop offset="0.312" stop-color="#00ff00"/><stop offset="0.375" stop-color="#00ff00"/><stop offset="0.438" stop-color="#00ff00"/><stop offset="0.500" stop-color="#00ff00"/><stop offset="0.562" stop-color="#00ff00"/><stop offset="0.625" stop-color="#00ff00"/><stop offset="0.688" stop-color="#00ff00"/><stop offset="0.750" stop-color="#00ff00"/><stop offset="0.812" stop-color="#00ff00"/><stop offset="0.875" stop-color="#00ff00"/><stop offset="0.938" stop-color="#00ff00"/><stop offset="1.000" stop-color="#00ff00"/></linearGradient><linearGradient id="r24" gradientUnits="userSpaceOnUse" x1="615.0" y1="0" x2="733.4" y2="0"><stop offset="0.000" stop-color="#00ff45"/><stop offset="0.062" stop-color="#00ff3a"/><stop offset="0.125" stop-color="#00ff2d"/><stop offset="0.188" stop-color="#00ff1d"/><stop offset="0.250" stop-color="#00ff01"/><stop offset="0.312" stop-color="#00ff00"/><stop offset="0.375" stop-color="#00ff00"/><stop offset="0.438" stop-color="#00ff00"/><stop offset="0.500" stop-color="#00ff00"/><stop offset="0.562" stop-color="#00ff00"/><stop offset="0.625" stop-color="#00ff00"/><stop offset="0.688" stop-color="#00ff00"/><stop offset="0.750" stop-color="#00ff00"/><stop offset="0.812" stop-color="#00ff00"/><stop offset="0.875" stop-color="#00ff00"/><stop offset="0.938" stop-color="#00ff00"/><stop offset="1.000" stop-color="#00ff00"/></linearGradient><linearGradient id="r25" gradientUnits="userSpaceOnUse" x1="615.0" y1="0" x2="733.4" y2="0"><stop offset="0.000" stop-color="#00ff48"/><stop offset="0.062" stop-color="#00ff3d"/><stop offset="0.125" stop-color="#00ff30"/><stop offset="0.188" stop-color="#00ff20"/><stop offset="0.250" stop-color="#00ff09"/><stop offset="0.312" stop-color="#00ff00"/><stop offset="0.375" stop-color="#00ff00"/><stop offset="0.438" stop-color="#14ff00"/><stop offset="0.500" stop-color="#14ff00"/><stop offset="0.562" stop-color="#14ff00"/><stop offset="0.625" stop-color="#14ff00"/><stop offset="0.688" stop-color="#14ff00"/><stop offset="0.750" stop-color="#14ff00"/><stop offset="0.812" stop-color="#14ff00"/><stop offset="0.875" stop-color="#14ff00"/><stop offset="0.938" stop-color="#14ff00"/><stop offset="1.000" stop-color="#14ff00"/></linearGradient><linearGradient id="r26" gradientUnits="userSpaceOnUse" x1="615.0" y1="0" x2="733.4" y2="0"><stop offset="0.000" stop-color="#00ff4a"/><stop offset="0.062" stop-color="#00ff40"/><stop offset="0.125" stop-color="#00ff33"/><stop offset="0.188" stop-color="#00ff24"/><stop offset="0.250" stop-color="#00ff0e"/><stop offset="0.312" stop-color="#00ff00"/><stop offset="0.375" stop-color="#00ff00"/><stop offset="0.438" stop-color="#24ff00"/><stop offset="0.500" stop-color="#24ff00"/><stop offset="0.562" stop-color="#24ff00"/><stop offset="0.625" stop-color="#24ff00"/><stop offset="0.688" stop-color="#24ff00"/><stop offset="0.750" stop-color="#24ff00"/><stop offset="0.812" stop-color="#24ff00"/><stop offset="0.875" stop-color="#24ff00"/><stop offset="0.938" stop-color="#24ff00"/><stop offset="1.000" stop-color="#24ff00"/></linearGradient><linearGradient id="r27" gradientUnits="userSpaceOnUse" x1="615.0" y1="0" x2="733.4" y2="0"><stop offset="0.000" stop-color="#00ff4d"/><stop offset="0.062" stop-color="#00ff43"/><stop offset="0.125" stop-color="#00ff36"/><stop offset="0.188" stop-color="#00ff27"/><stop offset="0.250" stop-color="#00ff13"/><stop offset="0.312" stop-color="#00ff00"/><stop offset="0.375" stop-color="#00ff00"/><stop offset="0.438" stop-color="#32ff00"/><stop offset="0.500" stop-color="#32ff00"/><stop offset="0.562" stop-color="#32ff00"/><stop offset="0.625" stop-color="#32ff00"/><stop offset="0.688" stop-color="#32ff00"/><stop offset="0.750" stop-color="#32ff00"/><stop offset="0.812" stop-color="#32ff00"/><stop offset="0.875" stop-color="#32ff00"/><stop offset="0.938" stop-color="#32ff00"/><stop offset="1.000" stop-color="#32ff00"/></linearGradient><linearGradient id="r28" gradientUnits="userSpaceOnUse" x1="615.0" y1="0" x2="733.4" y2="0"><stop offset="0.000" stop-color="#00ff50"/><stop offset="0.062" stop-color="#00ff45"/><stop offset="0.125" stop-color="#00ff39"/><stop offset="0.188" stop-color="#00ff2b"/><stop offset="0.250" stop-color="#00ff18"/><stop offset="0.312" stop-color="#00ff00"/><stop offset="0.375" stop-color="#00ff00"/><stop offset="0.438" stop-color="#3fff00"/><stop offset="0.500" stop-color="#3fff00"/><stop offset="0.562" stop-color="#3fff00"/><stop offset="0.625" stop-color="#3fff00"/><stop offset="0.688" stop-color="#3fff00"/><stop offset="0.750" stop-color="#3fff00"/><stop offset="0.812" stop-color="#3fff00"/><stop offset="0.875" stop-color="#3fff00"/><stop offset="0.938" stop-color="#3fff00"/><stop offset="1.000" stop-color="#3fff00"/></linearGradient><linearGradient id="r29" gradientUnits="userSpaceOnUse" x1="615.0" y1="0" x2="733.4" y2="0"><stop offset="0.000" stop-color="#00ff52"/><stop offset="0.062" stop-color="#00ff48"/><stop offset="0.125" stop-color="#00ff3c"/><stop offset="0.188" stop-color="#00ff2e"/><stop offset="0.250" stop-color="#00ff1c"/><stop offset="0.312" stop-color="#00ff00"/><stop offset="0.375" stop-color="#00ff00"/><stop offset="0.438" stop-color="#47ff00"/><stop offset="0.500" stop-color="#4cff00"/><stop offset="0.562" stop-color="#4cff00"/><stop offset="0.625" stop-color="#4cff00"/><stop offset="0.688" stop-color="#4cff00"/><stop offset="0.750" stop-color="#4cff00"/><stop offset="0.812" stop-color="#4cff00"/><stop offset="0.875" stop-color="#4cff00"/><stop offset="0.938" stop-color="#4cff00"/><stop offset="1.000" stop-color="#4cff00"/></linearGradient><linearGradient id="r30" gradientUnits="userSpaceOnUse" x1="615.0" y1="0" x2="733.4" y2="0"><stop offset="0.000" stop-color="#00ff55"/><stop offset="0.062" stop-color="#00ff4b"/><stop offset="0.125" stop-color="#00ff3f"/><stop offset="0.188" stop-color="#00ff31"/><stop offset="0.250" stop-color="#00ff20"/><stop offset="0.312" stop-color="#00ff03"/><stop offset="0.375" stop-color="#00ff00"/><stop offset="0.438" stop-color="#4aff00"/><stop offset="0.500" stop-color="#58ff00"/><stop offset="0.562" stop-color="#58ff00"/><stop offset="0.625" stop-color="#58ff00"/><stop offset="0.688" stop-color="#58ff00"/><stop offset="0.750" stop-color="#58ff00"/><stop offset="0.812" stop-color="#58ff00"/><stop offset="0.875" stop-color="#58ff00"/><stop offset="0.938" stop-color="#58ff00"/><stop offset="1.000" stop-color="#58ff00"/></linearGradient><linearGradient id="r31" gradientUnits="userSpaceOnUse" x1="615.0" y1="0" x2="733.4" y2="0"><stop offset="0.000" stop-color="#00ff57"/><stop offset="0.062" stop-color="#00ff4e"/><stop offset="0.125" stop-color="#00ff42"/><stop offset="0.188" stop-color="#00ff35"/><stop offset="0.250" stop-color="#00ff24"/><stop offset="0.312" stop-color="#00ff0b"/><stop offset="0.375" stop-color="#00ff00"/><stop offset="0.438" stop-color="#4dff00"/><stop offset="0.500" stop-color="#64ff00"/><stop offset="0.562" stop-color="#64ff00"/><stop offset="0.625" stop-color="#64ff00"/><stop offset="0.688" stop-color="#64ff00"/><stop offset="0.750" stop-color="#64ff00"/><stop offset="0.812" stop-color="#64ff00"/><stop offset="0.875" stop-color="#64ff00"/><stop offset="0.938" stop-color="#64ff00"/><stop offset="1.000" stop-color="#64ff00"/></linearGradient><linearGradient id="r32" gradientUnits="userSpaceOnUse" x1="615.0" y1="0" x2="733.4" y2="0"><stop offset="0.000" stop-color="#00ff5a"/><stop offset="0.062" stop-color="#00ff50"/><stop offset="0.125" stop-color="#00ff45"/><stop offset="0.188" stop-color="#00ff38"/><stop offset="0.250" stop-color="#00ff27"/><stop offset="0.312" stop-color="#00ff10"/><stop offset="0.375" stop-color="#00ff00"/><stop offset="0.438" stop-color="#51ff00"/><stop offset="0.500" stop-color="#70ff00"/><stop offset="0.562" stop-color="#70ff00"/><stop offset="0.625" stop-color="#70ff00"/><stop offset="0.688" stop-color="#70ff00"/><stop offset="0.750" stop-color="#70ff00"/><stop offset="0.812" stop-color="#70ff00"/><stop offset="0.875" stop-color="#70ff00"/><stop offset="0.938" stop-color="#70ff00"/><stop offset="1.000" stop-color="#70ff00"/></linearGradient><linearGradient id="r33" gradientUnits="userSpaceOnUse" x1="615.0" y1="0" x2="733.4" y2="0"><stop offset="0.000" stop-color="#00ff5d"/><stop offset="0.062" stop-color="#00ff53"/><stop offset="0.125" stop-color="#00ff48"/><stop offset="0.188" stop-color="#00ff3b"/><stop offset="0.250" stop-color="#00ff2b"/><stop offset="0.312" stop-color="#00ff16"/><stop offset="0.375" stop-color="#00ff00"/><stop offset="0.438" stop-color="#54ff00"/><stop offset="0.500" stop-color="#7cff00"/><stop offset="0.562" stop-color="#7cff00"/><stop offset="0.625" stop-color="#7cff00"/><stop offset="0.688" stop-color="#7cff00"/><stop offset="0.750" stop-color="#7cff00"/><stop offset="0.812" stop-color="#7cff00"/><stop offset="0.875" stop-color="#7cff00"/><stop offset="0.938" stop-color="#7cff00"/><stop offset="1.000" stop-color="#7cff00"/></linearGradient><linearGradient id="r34" gradientUnits="userSpaceOnUse" x1="615.0" y1="0" x2="733.4" y2="0"><stop offset="0.000" stop-color="#00ff5f"/><stop offset="0.062" stop-color="#00ff56"/><stop offset="0.125" stop-color="#00ff4b"/><stop offset="0.188" stop-color="#00ff3f"/><stop offset="0.250" stop-color="#00ff2f"/><stop offset="0.312" stop-color="#00ff1a"/><stop offset="0.375" stop-color="#00ff00"/><stop offset="0.438" stop-color="#57ff00"/><stop offset="0.500" stop-color="#88ff00"/><stop offset="0.562" stop-color="#88ff00"/><stop offset="0.625" stop-color="#88ff00"/><stop offset="0.688" stop-color="#88ff00"/><stop offset="0.750" stop-color="#88ff00"/><stop offset="0.812" stop-color="#88ff00"/><stop offset="0.875" stop-color="#88ff00"/><stop offset="0.938" stop-color="#88ff00"/><stop offset="1.000" stop-color="#88ff00"/></linearGradient><linearGradient id="r35" gradientUnits="userSpaceOnUse" x1="615.0" y1="0" x2="733.4" y2="0"><stop offset="0.000" stop-color="#00ff62"/><stop offset="0.062" stop-color="#00ff59"/><stop offset="0.125" stop-color="#00ff4e"/><stop offset="0.188" stop-color="#00ff42"/><stop offset="0.250" stop-color="#00ff33"/><stop offset="0.312" stop-color="#00ff1f"/><stop offset="0.375" stop-color="#00ff00"/><stop offset="0.438" stop-color="#5bff00"/><stop offset="0.500" stop-color="#95ff00"/><stop offset="0.562" stop-color="#95ff00"/><stop offset="0.625" stop-color="#95ff00"/><stop offset="0.688" stop-color="#95ff00"/><stop offset="0.750" stop-color="#95ff00"/><stop offset="0.812" stop-color="#95ff00"/><stop offset="0.875" stop-color="#95ff00"/><stop offset="0.938" stop-color="#95ff00"/><stop offset="1.000" stop-color="#95ff00"/></linearGradient><linearGradient id="r36" gradientUnits="userSpaceOnUse" x1="615.0" y1="0" x2="733.4" y2="0"><stop offset="0.000" stop-color="#00ff65"/><stop offset="0.062" stop-color="#00ff5c"/><stop offset="0.125" stop-color="#00ff51"/><stop offset="0.188" stop-color="#00ff45"/><stop offset="0.250" stop-color="#00ff36"/><stop offset="0.312" stop-color="#00ff23"/><stop offset="0.375" stop-color="#04ff04"/><stop offset="0.438" stop-color="#5eff00"/><stop offset="0.500" stop-color="#a0ff00"/><stop offset="0.562" stop-color="#a1ff00"/><stop offset="0.625" stop-color="#a1ff00"/><stop offset="0.688" stop-color="#a1ff00"/><stop offset="0.750" stop-color="#a1ff00"/><stop offset="0.812" stop-color="#a1ff00"/><stop offset="0.875" stop-color="#a1ff00"/><stop offset="0.938" stop-color="#a1ff00"/><stop offset="1.000" stop-color="#a1ff00"/></linearGradient><linearGradient id="r37" gradientUnits="userSpaceOnUse" x1="615.0" y1="0" x2="733.4" y2="0"><stop offset="0.000" stop-color="#00ff68"/><stop offset="0.062" stop-color="#00ff5f"/><stop offset="0.125" stop-color="#00ff54"/><stop offset="0.188" stop-color="#00ff48"/><stop offset="0.250" stop-color="#00ff3a"/><stop offset="0.312" stop-color="#00ff28"/><stop offset="0.375" stop-color="#0bff0d"/><stop offset="0.438" stop-color="#62ff00"/><stop offset="0.500" stop-color="#a4ff00"/><stop offset="0.562" stop-color="#aeff00"/><stop offset="0.625" stop-color="#aeff00"/><stop offset="0.688" stop-color="#aeff00"/><stop offset="0.750" stop-color="#aeff00"/><stop offset="0.812" stop-color="#aeff00"/><stop offset="0.875" stop-color="#aeff00"/><stop offset="0.938" stop-color="#aeff00"/><stop offset="1.000" stop-color="#aeff00"/></linearGradient><linearGradient id="r38" gradientUnits="userSpaceOnUse" x1="615.0" y1="0" x2="733.4" y2="0"><stop offset="0.000" stop-color="#00ff6a"/><stop offset="0.062" stop-color="#00ff62"/><stop offset="0.125" stop-color="#00ff58"/><stop offset="0.188" stop-color="#00ff4c"/><stop offset="0.250" stop-color="#00ff3e"/><stop offset="0.312" stop-color="#00ff2c"/><stop offset="0.375" stop-color="#10ff13"/><stop offset="0.438" stop-color="#65ff00"/><stop offset="0.500" stop-color="#a8ff00"/><stop offset="0.562" stop-color="#bbff00"/><stop offset="0.625" stop-color="#bbff00"/><stop offset="0.688" stop-color="#bbff00"/><stop offset="0.750" stop-color="#bbff00"/><stop offset="0.812" stop-color="#bbff00"/><stop offset="0.875" stop-color="#bbff00"/><stop offset="0.938" stop-color="#bbff00"/><stop offset="1.000" stop-color="#bbff00"/></linearGradient><linearGradient id="r39" gradientUnits="userSpaceOnUse" x1="615.0" y1="0" x2="733.4" y2="0"><stop offset="0.000" stop-color="#00ff6d"/><stop offset="0.062" stop-color="#00ff65"/><stop offset="0.125" stop-color="#00ff5b"/><stop offset="0.188" stop-color="#00ff4f"/><stop offset="0.250" stop-color="#00ff41"/><stop offset="0.312" stop-color="#00ff30"/><stop offset="0.375" stop-color="#15ff19"/><stop offset="0.438" stop-color="#69ff00"/><stop offset="0.500" stop-color="#acff00"/><stop offset="0.562" stop-color="#c8ff00"/><stop offset="0.625" stop-color="#c8ff00"/><stop offset="0.688" stop-color="#c8ff00"/><stop offset="0.750" stop-color="#c8ff00"/><stop offset="0.812" stop-color="#c8ff00"/><stop offset="0.875" stop-color="#c8ff00"/><stop offset="0.938" stop-color="#c8ff00"/><stop offset="1.000" stop-color="#c8ff00"/></linearGradient><linearGradient id="r40" gradientUnits="userSpaceOnUse" x1="615.0" y1="0" x2="733.4" y2="0"><stop offset="0.000" stop-color="#00ff70"/><stop offset="0.062" stop-color="#00ff68"/><stop offset="0.125" stop-color="#00ff5e"/><stop offset="0.188" stop-color="#00ff52"/><stop offset="0.250" stop-color="#00ff45"/><stop offset="0.312" stop-color="#00ff34"/><stop offset="0.375" stop-color="#1aff1e"/><stop offset="0.438" stop-color="#6dff00"/><stop offset="0.500" stop-color="#b0ff00"/><stop offset="0.562" stop-color="#d5ff00"/><stop offset="0.625" stop-color="#d5ff00"/><stop offset="0.688" stop-color="#d5ff00"/><stop offset="0.750" stop-color="#d5ff00"/><stop offset="0.812" stop-color="#d5ff00"/><stop offset="0.875" stop-color="#d5ff00"/><stop offset="0.938" stop-color="#d5ff00"/><stop offset="1.000" stop-color="#d5ff00"/></linearGradient><linearGradient id="r41" gradientUnits="userSpaceOnUse" x1="615.0" y1="0" x2="733.4" y2="0"><stop offset="0.000" stop-color="#00ff73"/><stop offset="0.062" stop-color="#00ff6b"/><stop offset="0.125" stop-color="#00ff61"/><stop offset="0.188" stop-color="#00ff56"/><stop offset="0.250" stop-color="#00ff49"/><stop offset="0.312" stop-color="#00ff38"/><stop offset="0.375" stop-color="#1eff23"/><stop offset="0.438" stop-color="#70ff00"/><stop offset="0.500" stop-color="#b5ff00"/><stop offset="0.562" stop-color="#e4ff00"/><stop offset="0.625" stop-color="#e4ff00"/><stop offset="0.688" stop-color="#e4ff00"/><stop offset="0.750" stop-color="#e4ff00"/><stop offset="0.812" stop-color="#e4ff00"/><stop offset="0.875" stop-color="#e4ff00"/><stop offset="0.938" stop-color="#e4ff00"/><stop offset="1.000" stop-color="#e4ff00"/></linearGradient><linearGradient id="r42" gradientUnits="userSpaceOnUse" x1="615.0" y1="0" x2="733.4" y2="0"><stop offset="0.000" stop-color="#00ff76"/><stop offset="0.062" stop-color="#00ff6e"/><stop offset="0.125" stop-color="#00ff64"/><stop offset="0.188" stop-color="#00ff59"/><stop offset="0.250" stop-color="#00ff4c"/><stop offset="0.312" stop-color="#00ff3c"/><stop offset="0.375" stop-color="#23ff28"/><stop offset="0.438" stop-color="#74ff06"/><stop offset="0.500" stop-color="#b9ff00"/><stop offset="0.562" stop-color="#f2ff00"/><stop offset="0.625" stop-color="#f2ff00"/><stop offset="0.688" stop-color="#f2ff00"/><stop offset="0.750" stop-color="#f2ff00"/><stop offset="0.812" stop-color="#f2ff00"/><stop offset="0.875" stop-color="#f2ff00"/><stop offset="0.938" stop-color="#f2ff00"/><stop offset="1.000" stop-color="#f2ff00"/></linearGradient><linearGradient id="r43" gradientUnits="userSpaceOnUse" x1="615.0" y1="0" x2="733.4" y2="0"><stop offset="0.000" stop-color="#00ff79"/><stop offset="0.062" stop-color="#00ff71"/><stop offset="0.125" stop-color="#00ff68"/><stop offset="0.188" stop-color="#00ff5d"/><stop offset="0.250" stop-color="#00ff50"/><stop offset="0.312" stop-color="#00ff41"/><stop offset="0.375" stop-color="#27ff2d"/><stop offset="0.438" stop-color="#78ff0f"/><stop offset="0.500" stop-color="#beff00"/><stop offset="0.562" stop-color="#fffd00"/><stop offset="0.625" stop-color="#fffd00"/><stop offset="0.688" stop-color="#fffd00"/><stop offset="0.750" stop-color="#fffd00"/><stop offset="0.812" stop-color="#fffd00"/><stop offset="0.875" stop-color="#fffd00"/><stop offset="0.938" stop-color="#fffd00"/><stop offset="1.000" stop-color="#fffd00"/></linearGradient><linearGradient id="r44" gradientUnits="userSpaceOnUse" x1="615.0" y1="0" x2="733.4" y2="0"><stop offset="0.000" stop-color="#00ff7c"/><stop offset="0.062" stop-color="#00ff74"/><stop offset="0.125" stop-color="#00ff6b"/><stop offset="0.188" stop-color="#00ff60"/><stop offset="0.250" stop-color="#00ff54"/><stop offset="0.312" stop-color="#00ff45"/><stop offset="0.375" stop-color="#2bff31"/><stop offset="0.438" stop-color="#7cff16"/><stop offset="0.500" stop-color="#c3ff00"/><stop offset="0.562" stop-color="#fff500"/><stop offset="0.625" stop-color="#ffee00"/><stop offset="0.688" stop-color="#ffee00"/><stop offset="0.750" stop-color="#ffee00"/><stop offset="0.812" stop-color="#ffee00"/><stop offset="0.875" stop-color="#ffee00"/><stop offset="0.938" stop-color="#ffee00"/><stop offset="1.000" stop-color="#ffee00"/></linearGradient><linearGradient id="r45" gradientUnits="userSpaceOnUse" x1="615.0" y1="0" x2="733.4" y2="0"><stop offset="0.000" stop-color="#00ff7f"/><stop offset="0.062" stop-color="#00ff77"/><stop offset="0.125" stop-color="#00ff6e"/><stop offset="0.188" stop-color="#00ff64"/><stop offset="0.250" stop-color="#00ff58"/><stop offset="0.312" stop-color="#00ff49"/><stop offset="0.375" stop-color="#2fff36"/><stop offset="0.438" stop-color="#80ff1c"/><stop offset="0.500" stop-color="#c8ff00"/><stop offset="0.562" stop-color="#ffef00"/><stop offset="0.625" stop-color="#ffe100"/><stop offset="0.688" stop-color="#ffe100"/><stop offset="0.750" stop-color="#ffe100"/><stop offset="0.812" stop-color="#ffe100"/><stop offset="0.875" stop-color="#ffe100"/><stop offset="0.938" stop-color="#ffe100"/><stop offset="1.000" stop-color="#ffe100"/></linearGradient><linearGradient id="r46" gradientUnits="userSpaceOnUse" x1="615.0" y1="0" x2="733.4" y2="0"><stop offset="0.000" stop-color="#00ff82"/><stop offset="0.062" stop-color="#00ff7a"/><stop offset="0.125" stop-color="#00ff72"/><stop offset="0.188" stop-color="#00ff67"/><stop offset="0.250" stop-color="#00ff5c"/><stop offset="0.312" stop-color="#00ff4d"/><stop offset="0.375" stop-color="#33ff3b"/><stop offset="0.438" stop-color="#84ff22"/><stop offset="0.500" stop-color="#cdff00"/><stop offset="0.562" stop-color="#ffea00"/><stop offset="0.625" stop-color="#ffd400"/><stop offset="0.688" stop-color="#ffd400"/><stop offset="0.750" stop-color="#ffd400"/><stop offset="0.812" stop-color="#ffd400"/><stop offset="0.875" stop-color="#ffd400"/><stop offset="0.938" stop-color="#ffd400"/><stop offset="1.000" stop-color="#ffd400"/></linearGradient><linearGradient id="r47" gradientUnits="userSpaceOnUse" x1="615.0" y1="0" x2="733.4" y2="0"><stop offset="0.000" stop-color="#00ff85"/><stop offset="0.062" stop-color="#00ff7e"/><stop offset="0.125" stop-color="#00ff75"/><stop offset="0.188" stop-color="#00ff6b"/><stop offset="0.250" stop-color="#00ff5f"/><stop offset="0.312" stop-color="#00ff51"/><stop offset="0.375" stop-color="#38ff40"/><stop offset="0.438" stop-color="#89ff28"/><stop offset="0.500" stop-color="#d2ff00"/><stop offset="0.562" stop-color="#ffe500"/><stop offset="0.625" stop-color="#ffc900"/><stop offset="0.688" stop-color="#ffc900"/><stop offset="0.750" stop-color="#ffc900"/><stop offset="0.812" stop-color="#ffc900"/><stop offset="0.875" stop-color="#ffc900"/><stop offset="0.938" stop-color="#ffc900"/><stop offset="1.000" stop-color="#ffc900"/></linearGradient><linearGradient id="r48" gradientUnits="userSpaceOnUse" x1="615.0" y1="0" x2="733.4" y2="0"><stop offset="0.000" stop-color="#00ff88"/><stop offset="0.062" stop-color="#00ff81"/><stop offset="0.125" stop-color="#00ff79"/><stop offset="0.188" stop-color="#00ff6f"/><stop offset="0.250" stop-color="#00ff63"/><stop offset="0.312" stop-color="#00ff56"/><stop offset="0.375" stop-color="#3cff44"/><stop offset="0.438" stop-color="#8dff2e"/><stop offset="0.500" stop-color="#d7ff09"/><stop offset="0.562" stop-color="#ffdf00"/><stop offset="0.625" stop-color="#ffbe00"/><stop offset="0.688" stop-color="#ffbe00"/><stop offset="0.750" stop-color="#ffbe00"/><stop offset="0.812" stop-color="#ffbe00"/><stop offset="0.875" stop-color="#ffbe00"/><stop offset="0.938" stop-color="#ffbe00"/><stop offset="1.000" stop-color="#ffbe00"/></linearGradient><linearGradient id="r49" gradientUnits="userSpaceOnUse" x1="615.0" y1="0" x2="733.4" y2="0"><stop offset="0.000" stop-color="#00ff8c"/><stop offset="0.062" stop-color="#00ff84"/><stop offset="0.125" stop-color="#00ff7c"/><stop offset="0.188" stop-color="#00ff73"/><stop offset="0.250" stop-color="#00ff67"/><stop offset="0.312" stop-color="#00ff5a"/><stop offset="0.375" stop-color="#40ff49"/><stop offset="0.438" stop-color="#92ff33"/><stop offset="0.500" stop-color="#ddff12"/><stop offset="0.562" stop-color="#ffda00"/><stop offset="0.625" stop-color="#ffb300"/><stop offset="0.688" stop-color="#ffb300"/><stop offset="0.750" stop-color="#ffb300"/><stop offset="0.812" stop-color="#ffb300"/><stop offset="0.875" stop-color="#ffb300"/><stop offset="0.938" stop-color="#ffb300"/><stop offset="1.000" stop-color="#ffb300"/></linearGradient><linearGradient id="r50" gradientUnits="userSpaceOnUse" x1="615.0" y1="0" x2="733.4" y2="0"><stop offset="0.000" stop-color="#00ff8f"/><stop offset="0.062" stop-color="#00ff88"/><stop offset="0.125" stop-color="#00ff80"/><stop offset="0.188" stop-color="#00ff76"/><stop offset="0.250" stop-color="#00ff6b"/><stop offset="0.312" stop-color="#00ff5e"/><stop offset="0.375" stop-color="#44ff4e"/><stop offset="0.438" stop-color="#96ff39"/><stop offset="0.500" stop-color="#e3ff1a"/><stop offset="0.562" stop-color="#ffd500"/><stop offset="0.625" stop-color="#ffa900"/><stop offset="0.688" stop-color="#ffa900"/><stop offset="0.750" stop-color="#ffa900"/><stop offset="0.812" stop-color="#ffa900"/><stop offset="0.875" stop-color="#ffa900"/><stop offset="0.938" stop-color="#ffa900"/><stop offset="1.000" stop-color="#ffa900"/></linearGradient><linearGradient id="r51" gradientUnits="userSpaceOnUse" x1="615.0" y1="0" x2="733.4" y2="0"><stop offset="0.000" stop-color="#00ff92"/><stop offset="0.062" stop-color="#00ff8b"/><stop offset="0.125" stop-color="#00ff84"/><stop offset="0.188" stop-color="#00ff7a"/><stop offset="0.250" stop-color="#00ff70"/><stop offset="0.312" stop-color="#00ff63"/><stop offset="0.375" stop-color="#48ff53"/><stop offset="0.438" stop-color="#9bff3e"/><stop offset="0.500" stop-color="#e9ff22"/><stop offset="0.562" stop-color="#ffcf00"/><stop offset="0.625" stop-color="#ffa200"/><stop offset="0.688" stop-color="#ffa000"/><stop offset="0.750" stop-color="#ffa000"/><stop offset="0.812" stop-color="#ffa000"/><stop offset="0.875" stop-color="#ffa000"/><stop offset="0.938" stop-color="#ffa000"/><stop offset="1.000" stop-color="#ffa000"/></linearGradient><linearGradient id="r52" gradientUnits="userSpaceOnUse" x1="615.0" y1="0" x2="733.4" y2="0"><stop offset="0.000" stop-color="#00ff96"/><stop offset="0.062" stop-color="#00ff8f"/><stop offset="0.125" stop-color="#00ff87"/><stop offset="0.188" stop-color="#00ff7e"/><stop offset="0.250" stop-color="#00ff74"/><stop offset="0.312" stop-color="#00ff67"/><stop offset="0.375" stop-color="#4dff58"/><stop offset="0.438" stop-color="#a0ff44"/><stop offset="0.500" stop-color="#efff29"/><stop offset="0.562" stop-color="#ffca00"/><stop offset="0.625" stop-color="#ff9e00"/><stop offset="0.688" stop-color="#ff9700"/><stop offset="0.750" stop-color="#ff9700"/><stop offset="0.812" stop-color="#ff9700"/><stop offset="0.875" stop-color="#ff9700"/><stop offset="0.938" stop-color="#ff9700"/><stop offset="1.000" stop-color="#ff9700"/></linearGradient><linearGradient id="r53" gradientUnits="userSpaceOnUse" x1="615.0" y1="0" x2="733.4" y2="0"><stop offset="0.000" stop-color="#00ff99"/><stop offset="0.062" stop-color="#00ff93"/><stop offset="0.125" stop-color="#00ff8b"/><stop offset="0.188" stop-color="#00ff82"/><stop offset="0.250" stop-color="#00ff78"/><stop offset="0.312" stop-color="#00ff6c"/><stop offset="0.375" stop-color="#51ff5d"/><stop offset="0.438" stop-color="#a5ff4a"/><stop offset="0.500" stop-color="#f5ff2f"/><stop offset="0.562" stop-color="#ffc500"/><stop offset="0.625" stop-color="#ff9a00"/><stop offset="0.688" stop-color="#ff8f00"/><stop offset="0.750" stop-color="#ff8f00"/><stop offset="0.812" stop-color="#ff8f00"/><stop offset="0.875" stop-color="#ff8f00"/><stop offset="0.938" stop-color="#ff8f00"/><stop offset="1.000" stop-color="#ff8f00"/></linearGradient><linearGradient id="r54" gradientUnits="userSpaceOnUse" x1="615.0" y1="0" x2="733.4" y2="0"><stop offset="0.000" stop-color="#00ff9d"/><stop offset="0.062" stop-color="#00ff96"/><stop offset="0.125" stop-color="#00ff8f"/><stop offset="0.188" stop-color="#00ff86"/><stop offset="0.250" stop-color="#00ff7c"/><stop offset="0.312" stop-color="#00ff71"/><stop offset="0.375" stop-color="#55ff62"/><stop offset="0.438" stop-color="#aaff4f"/><stop offset="0.500" stop-color="#fcff36"/><stop offset="0.562" stop-color="#ffc009"/><stop offset="0.625" stop-color="#ff9600"/><stop offset="0.688" stop-color="#ff8700"/><stop offset="0.750" stop-color="#ff8700"/><stop offset="0.812" stop-color="#ff8700"/><stop offset="0.875" stop-color="#ff8700"/><stop offset="0.938" stop-color="#ff8700"/><stop offset="1.000" stop-color="#ff8700"/></linearGradient><linearGradient id="r55" gradientUnits="userSpaceOnUse" x1="615.0" y1="0" x2="733.4" y2="0"><stop offset="0.000" stop-color="#00ffa0"/><stop offset="0.062" stop-color="#00ff9a"/><stop offset="0.125" stop-color="#00ff93"/><stop offset="0.188" stop-color="#00ff8b"/><stop offset="0.250" stop-color="#00ff81"/><stop offset="0.312" stop-color="#00ff75"/><stop offset="0.375" stop-color="#5aff67"/><stop offset="0.438" stop-color="#b0ff55"/><stop offset="0.500" stop-color="#fffb3c"/><stop offset="0.562" stop-color="#ffbb11"/><stop offset="0.625" stop-color="#ff9200"/><stop offset="0.688" stop-color="#ff7f00"/><stop offset="0.750" stop-color="#ff7f00"/><stop offset="0.812" stop-color="#ff7f00"/><stop offset="0.875" stop-color="#ff7f00"/><stop offset="0.938" stop-color="#ff7f00"/><stop offset="1.000" stop-color="#ff7f00"/></linearGradient><linearGradient id="r56" gradientUnits="userSpaceOnUse" x1="615.0" y1="0" x2="733.4" y2="0"><stop offset="0.000" stop-color="#00ffa4"/><stop offset="0.062" stop-color="#00ff9e"/><stop offset="0.125" stop-color="#00ff97"/><stop offset="0.188" stop-color="#00ff8f"/><stop offset="0.250" stop-color="#00ff85"/><stop offset="0.312" stop-color="#00ff7a"/><stop offset="0.375" stop-color="#5fff6c"/><stop offset="0.438" stop-color="#b5ff5b"/><stop offset="0.500" stop-color="#fff541"/><stop offset="0.562" stop-color="#ffb617"/><stop offset="0.625" stop-color="#ff8e00"/><stop offset="0.688" stop-color="#ff7800"/><stop offset="0.750" stop-color="#ff7800"/><stop offset="0.812" stop-color="#ff7800"/><stop offset="0.875" stop-color="#ff7800"/><stop offset="0.938" stop-color="#ff7800"/><stop offset="1.000" stop-color="#ff7800"/></linearGradient><linearGradient id="r57" gradientUnits="userSpaceOnUse" x1="615.0" y1="0" x2="733.4" y2="0"><stop offset="0.000" stop-color="#00ffa7"/><stop offset="0.062" stop-color="#00ffa2"/><stop offset="0.125" stop-color="#00ff9b"/><stop offset="0.188" stop-color="#00ff93"/><stop offset="0.250" stop-color="#00ff8a"/><stop offset="0.312" stop-color="#00ff7f"/><stop offset="0.375" stop-color="#63ff72"/><stop offset="0.438" stop-color="#bbff61"/><stop offset="0.500" stop-color="#ffee45"/><stop offset="0.562" stop-color="#ffb21d"/><stop offset="0.625" stop-color="#ff8a00"/><stop offset="0.688" stop-color="#ff7100"/><stop offset="0.750" stop-color="#ff7100"/><stop offset="0.812" stop-color="#ff7100"/><stop offset="0.875" stop-color="#ff7100"/><stop offset="0.938" stop-color="#ff7100"/><stop offset="1.000" stop-color="#ff7100"/></linearGradient><linearGradient id="r58" gradientUnits="userSpaceOnUse" x1="615.0" y1="0" x2="733.4" y2="0"><stop offset="0.000" stop-color="#00ffab"/><stop offset="0.062" stop-color="#00ffa6"/><stop offset="0.125" stop-color="#00ff9f"/><stop offset="0.188" stop-color="#00ff98"/><stop offset="0.250" stop-color="#00ff8f"/><stop offset="0.312" stop-color="#00ff84"/><stop offset="0.375" stop-color="#68ff77"/><stop offset="0.438" stop-color="#c1ff67"/><stop offset="0.500" stop-color="#ffe74a"/><stop offset="0.562" stop-color="#ffad22"/><stop offset="0.625" stop-color="#ff8600"/><stop offset="0.688" stop-color="#ff6a00"/><stop offset="0.750" stop-color="#ff6a00"/><stop offset="0.812" stop-color="#ff6a00"/><stop offset="0.875" stop-color="#ff6a00"/><stop offset="0.938" stop-color="#ff6a00"/><stop offset="1.000" stop-color="#ff6a00"/></linearGradient><linearGradient id="r59" gradientUnits="userSpaceOnUse" x1="615.0" y1="0" x2="733.4" y2="0"><stop offset="0.000" stop-color="#00ffaf"/><stop offset="0.062" stop-color="#00ffaa"/><stop offset="0.125" stop-color="#00ffa4"/><stop offset="0.188" stop-color="#00ff9c"/><stop offset="0.250" stop-color="#00ff94"/><stop offset="0.312" stop-color="#00ff8a"/><stop offset="0.375" stop-color="#6dff7d"/><stop offset="0.438" stop-color="#c7ff6d"/><stop offset="0.500" stop-color="#ffe14e"/><stop offset="0.562" stop-color="#ffa826"/><stop offset="0.625" stop-color="#ff8200"/><stop offset="0.688" stop-color="#ff6600"/><stop offset="0.750" stop-color="#ff6300"/><stop offset="0.812" stop-color="#ff6300"/><stop offset="0.875" stop-color="#ff6300"/><stop offset="0.938" stop-color="#ff6300"/><stop offset="1.000" stop-color="#ff6300"/></linearGradient><linearGradient id="r60" gradientUnits="userSpaceOnUse" x1="615.0" y1="0" x2="733.4" y2="0"><stop offset="0.000" stop-color="#00ffb3"/><stop offset="0.062" stop-color="#00ffae"/><stop offset="0.125" stop-color="#00ffa8"/><stop offset="0.188" stop-color="#00ffa1"/><stop offset="0.250" stop-color="#00ff99"/><stop offset="0.312" stop-color="#00ff8f"/><stop offset="0.375" stop-color="#72ff83"/><stop offset="0.438" stop-color="#cdff73"/><stop offset="0.500" stop-color="#ffdb52"/><stop offset="0.562" stop-color="#ffa32b"/><stop offset="0.625" stop-color="#ff7e08"/><stop offset="0.688" stop-color="#ff6300"/><stop offset="0.750" stop-color="#ff5d00"/><stop offset="0.812" stop-color="#ff5d00"/><stop offset="0.875" stop-color="#ff5d00"/><stop offset="0.938" stop-color="#ff5d00"/><stop offset="1.000" stop-color="#ff5d00"/></linearGradient><linearGradient id="r61" gradientUnits="userSpaceOnUse" x1="615.0" y1="0" x2="733.4" y2="0"><stop offset="0.000" stop-color="#00ffb7"/><stop offset="0.062" stop-color="#00ffb2"/><stop offset="0.125" stop-color="#00ffac"/><stop offset="0.188" stop-color="#00ffa6"/><stop offset="0.250" stop-color="#00ff9e"/><stop offset="0.312" stop-color="#00ff94"/><stop offset="0.375" stop-color="#77ff89"/><stop offset="0.438" stop-color="#d4ff7a"/><stop offset="0.500" stop-color="#ffd455"/><stop offset="0.562" stop-color="#ff9e2f"/><stop offset="0.625" stop-color="#ff7a0e"/><stop offset="0.688" stop-color="#ff5f00"/><stop offset="0.750" stop-color="#ff5600"/><stop offset="0.812" stop-color="#ff5600"/><stop offset="0.875" stop-color="#ff5600"/><stop offset="0.938" stop-color="#ff5600"/><stop offset="1.000" stop-color="#ff5600"/></linearGradient><linearGradient id="r62" gradientUnits="userSpaceOnUse" x1="615.0" y1="0" x2="733.4" y2="0"><stop offset="0.000" stop-color="#00ffbb"/><stop offset="0.062" stop-color="#00ffb6"/><stop offset="0.125" stop-color="#00ffb1"/><stop offset="0.188" stop-color="#00ffab"/><stop offset="0.250" stop-color="#00ffa3"/><stop offset="0.312" stop-color="#00ff9a"/><stop offset="0.375" stop-color="#7dff8f"/><stop offset="0.438" stop-color="#dbff81"/><stop offset="0.500" stop-color="#ffce59"/><stop offset="0.562" stop-color="#ff9a33"/><stop offset="0.625" stop-color="#ff7614"/><stop offset="0.688" stop-color="#ff5c00"/><stop offset="0.750" stop-color="#ff5000"/><stop offset="0.812" stop-color="#ff5000"/><stop offset="0.875" stop-color="#ff5000"/><stop offset="0.938" stop-color="#ff5000"/><stop offset="1.000" stop-color="#ff5000"/></linearGradient><linearGradient id="r63" gradientUnits="userSpaceOnUse" x1="615.0" y1="0" x2="733.4" y2="0"><stop offset="0.000" stop-color="#00ffbf"/><stop offset="0.062" stop-color="#00ffbb"/><stop offset="0.125" stop-color="#00ffb6"/><stop offset="0.188" stop-color="#00ffb0"/><stop offset="0.250" stop-color="#00ffa8"/><stop offset="0.312" stop-color="#09ffa0"/><stop offset="0.375" stop-color="#82ff95"/><stop offset="0.438" stop-color="#e2ff88"/><stop offset="0.500" stop-color="#ffc85c"/><stop offset="0.562" stop-color="#ff9536"/><stop offset="0.625" stop-color="#ff7218"/><stop offset="0.688" stop-color="#ff5800"/><stop offset="0.750" stop-color="#ff4a00"/><stop offset="0.812" stop-color="#ff4a00"/><stop offset="0.875" stop-color="#ff4a00"/><stop offset="0.938" stop-color="#ff4a00"/><stop offset="1.000" stop-color="#ff4a00"/></linearGradient><linearGradient id="r64" gradientUnits="userSpaceOnUse" x1="615.0" y1="0" x2="733.4" y2="0"><stop offset="0.000" stop-color="#00ffc3"/><stop offset="0.062" stop-color="#00ffbf"/><stop offset="0.125" stop-color="#00ffba"/><stop offset="0.188" stop-color="#00ffb5"/><stop offset="0.250" stop-color="#00ffae"/><stop offset="0.312" stop-color="#11ffa6"/><stop offset="0.375" stop-color="#88ff9c"/><stop offset="0.438" stop-color="#e9ff8f"/><stop offset="0.500" stop-color="#ffc260"/><stop offset="0.562" stop-color="#ff903a"/><stop offset="0.625" stop-color="#ff6e1c"/><stop offset="0.688" stop-color="#ff5500"/><stop offset="0.750" stop-color="#ff4400"/><stop offset="0.812" stop-color="#ff4400"/><stop offset="0.875" stop-color="#ff4400"/><stop offset="0.938" stop-color="#ff4400"/><stop offset="1.000" stop-color="#ff4400"/></linearGradient><linearGradient id="r65" gradientUnits="userSpaceOnUse" x1="615.0" y1="0" x2="733.4" y2="0"><stop offset="0.000" stop-color="#00ffc8"/><stop offset="0.062" stop-color="#00ffc4"/><stop offset="0.125" stop-color="#00ffbf"/><stop offset="0.188" stop-color="#00ffba"/><stop offset="0.250" stop-color="#00ffb4"/><stop offset="0.312" stop-color="#19ffac"/><stop offset="0.375" stop-color="#8effa2"/><stop offset="0.438" stop-color="#f1ff96"/><stop offset="0.500" stop-color="#ffbc63"/><stop offset="0.562" stop-color="#ff8c3d"/><stop offset="0.625" stop-color="#ff6a20"/><stop offset="0.688" stop-color="#ff5100"/><stop offset="0.750" stop-color="#ff3e00"/><stop offset="0.812" stop-color="#ff3e00"/><stop offset="0.875" stop-color="#ff3e00"/><stop offset="0.938" stop-color="#ff3e00"/><stop offset="1.000" stop-color="#ff3e00"/></linearGradient><linearGradient id="r66" gradientUnits="userSpaceOnUse" x1="615.0" y1="0" x2="733.4" y2="0"><stop offset="0.000" stop-color="#00ffcc"/><stop offset="0.062" stop-color="#00ffc9"/><stop offset="0.125" stop-color="#00ffc4"/><stop offset="0.188" stop-color="#00ffbf"/><stop offset="0.250" stop-color="#00ffba"/><stop offset="0.312" stop-color="#1fffb2"/><stop offset="0.375" stop-color="#94ffa9"/><stop offset="0.438" stop-color="#f9ff9e"/><stop offset="0.500" stop-color="#ffb666"/><stop offset="0.562" stop-color="#ff8740"/><stop offset="0.625" stop-color="#ff6724"/><stop offset="0.688" stop-color="#ff4e08"/><stop offset="0.750" stop-color="#ff3a00"/><stop offset="0.812" stop-color="#ff3800"/><stop offset="0.875" stop-color="#ff3800"/><stop offset="0.938" stop-color="#ff3800"/><stop offset="1.000" stop-color="#ff3800"/></linearGradient><linearGradient id="r67" gradientUnits="userSpaceOnUse" x1="615.0" y1="0" x2="733.4" y2="0"><stop offset="0.000" stop-color="#00ffd1"/><stop offset="0.062" stop-color="#00ffce"/><stop offset="0.125" stop-color="#00ffca"/><stop offset="0.188" stop-color="#00ffc5"/><stop offset="0.250" stop-color="#00ffc0"/><stop offset="0.312" stop-color="#26ffb9"/><stop offset="0.375" stop-color="#9affb1"/><stop offset="0.438" stop-color="#fffca4"/><stop offset="0.500" stop-color="#ffb069"/><stop offset="0.562" stop-color="#ff8243"/><stop offset="0.625" stop-color="#ff6327"/><stop offset="0.688" stop-color="#ff4a0d"/><stop offset="0.750" stop-color="#ff3600"/><stop offset="0.812" stop-color="#ff3300"/><stop offset="0.875" stop-color="#ff3300"/><stop offset="0.938" stop-color="#ff3300"/><stop offset="1.000" stop-color="#ff3300"/></linearGradient><linearGradient id="r68" gradientUnits="userSpaceOnUse" x1="615.0" y1="0" x2="733.4" y2="0"><stop offset="0.000" stop-color="#00ffd5"/><stop offset="0.062" stop-color="#00ffd2"/><stop offset="0.125" stop-color="#00ffcf"/><stop offset="0.188" stop-color="#00ffcb"/><stop offset="0.250" stop-color="#00ffc6"/><stop offset="0.312" stop-color="#2cffc0"/><stop offset="0.375" stop-color="#a1ffb8"/><stop offset="0.438" stop-color="#fff4a7"/><stop offset="0.500" stop-color="#ffaa6c"/><stop offset="0.562" stop-color="#ff7e46"/><stop offset="0.625" stop-color="#ff5f2a"/><stop offset="0.688" stop-color="#ff4711"/><stop offset="0.750" stop-color="#ff3300"/><stop offset="0.812" stop-color="#ff2d00"/><stop offset="0.875" stop-color="#ff2d00"/><stop offset="0.938" stop-color="#ff2d00"/><stop offset="1.000" stop-color="#ff2d00"/></linearGradient><linearGradient id="r69" gradientUnits="userSpaceOnUse" x1="615.0" y1="0" x2="733.4" y2="0"><stop offset="0.000" stop-color="#00ffda"/><stop offset="0.062" stop-color="#00ffd8"/><stop offset="0.125" stop-color="#00ffd4"/><stop offset="0.188" stop-color="#00ffd1"/><stop offset="0.250" stop-color="#00ffcc"/><stop offset="0.312" stop-color="#32ffc7"/><stop offset="0.375" stop-color="#a7ffc0"/><stop offset="0.438" stop-color="#ffeca9"/><stop offset="0.500" stop-color="#ffa56e"/><stop offset="0.562" stop-color="#ff7949"/><stop offset="0.625" stop-color="#ff5b2d"/><stop offset="0.688" stop-color="#ff4315"/><stop offset="0.750" stop-color="#ff3000"/><stop offset="0.812" stop-color="#ff2700"/><stop offset="0.875" stop-color="#ff2700"/><stop offset="0.938" stop-color="#ff2700"/><stop offset="1.000" stop-color="#ff2700"/></linearGradient><linearGradient id="r70" gradientUnits="userSpaceOnUse" x1="615.0" y1="0" x2="733.4" y2="0"><stop offset="0.000" stop-color="#00ffdf"/><stop offset="0.062" stop-color="#00ffdd"/><stop offset="0.125" stop-color="#00ffda"/><stop offset="0.188" stop-color="#00ffd7"/><stop offset="0.250" stop-color="#00ffd3"/><stop offset="0.312" stop-color="#38ffce"/><stop offset="0.375" stop-color="#aeffc8"/><stop offset="0.438" stop-color="#ffe3ab"/><stop offset="0.500" stop-color="#ff9f71"/><stop offset="0.562" stop-color="#ff754c"/><stop offset="0.625" stop-color="#ff5730"/><stop offset="0.688" stop-color="#ff3f19"/><stop offset="0.750" stop-color="#ff2c00"/><stop offset="0.812" stop-color="#ff2100"/><stop offset="0.875" stop-color="#ff2100"/><stop offset="0.938" stop-color="#ff2100"/><stop offset="1.000" stop-color="#ff2100"/></linearGradient><linearGradient id="r71" gradientUnits="userSpaceOnUse" x1="615.0" y1="0" x2="733.4" y2="0"><stop offset="0.000" stop-color="#00ffe4"/><stop offset="0.062" stop-color="#00ffe2"/><stop offset="0.125" stop-color="#00ffe0"/><stop offset="0.188" stop-color="#00ffdd"/><stop offset="0.250" stop-color="#00ffda"/><stop offset="0.312" stop-color="#3fffd6"/><stop offset="0.375" stop-color="#b6ffd0"/><stop offset="0.438" stop-color="#ffdcad"/><stop offset="0.500" stop-color="#ff9974"/><stop offset="0.562" stop-color="#ff704f"/><stop offset="0.625" stop-color="#ff5333"/><stop offset="0.688" stop-color="#ff3c1c"/><stop offset="0.750" stop-color="#ff2801"/><stop offset="0.812" stop-color="#ff1b00"/><stop offset="0.875" stop-color="#ff1b00"/><stop offset="0.938" stop-color="#ff1b00"/><stop offset="1.000" stop-color="#ff1b00"/></linearGradient><linearGradient id="r72" gradientUnits="userSpaceOnUse" x1="615.0" y1="0" x2="733.4" y2="0"><stop offset="0.000" stop-color="#00ffe9"/><stop offset="0.062" stop-color="#00ffe8"/><stop offset="0.125" stop-color="#00ffe6"/><stop offset="0.188" stop-color="#00ffe4"/><stop offset="0.250" stop-color="#00ffe1"/><stop offset="0.312" stop-color="#45ffdd"/><stop offset="0.375" stop-color="#beffd9"/><stop offset="0.438" stop-color="#ffd4b0"/><stop offset="0.500" stop-color="#ff9476"/><stop offset="0.562" stop-color="#ff6c51"/><stop offset="0.625" stop-color="#ff4f36"/><stop offset="0.688" stop-color="#ff381f"/><stop offset="0.750" stop-color="#ff2507"/><stop offset="0.812" stop-color="#ff1400"/><stop offset="0.875" stop-color="#ff1400"/><stop offset="0.938" stop-color="#ff1400"/><stop offset="1.000" stop-color="#ff1400"/></linearGradient><linearGradient id="r73" gradientUnits="userSpaceOnUse" x1="615.0" y1="0" x2="733.4" y2="0"><stop offset="0.000" stop-color="#00ffef"/><stop offset="0.062" stop-color="#00ffed"/><stop offset="0.125" stop-color="#00ffec"/><stop offset="0.188" stop-color="#00ffea"/><stop offset="0.250" stop-color="#00ffe8"/><stop offset="0.312" stop-color="#4bffe6"/><stop offset="0.375" stop-color="#c6ffe2"/><stop offset="0.438" stop-color="#ffccb2"/><stop offset="0.500" stop-color="#ff8e78"/><stop offset="0.562" stop-color="#ff6754"/><stop offset="0.625" stop-color="#ff4b39"/><stop offset="0.688" stop-color="#ff3422"/><stop offset="0.750" stop-color="#ff210c"/><stop offset="0.812" stop-color="#ff0d00"/><stop offset="0.875" stop-color="#ff0d00"/><stop offset="0.938" stop-color="#ff0d00"/><stop offset="1.000" stop-color="#ff0d00"/></linearGradient><linearGradient id="r74" gradientUnits="userSpaceOnUse" x1="615.0" y1="0" x2="733.4" y2="0"><stop offset="0.000" stop-color="#00fff4"/><stop offset="0.062" stop-color="#00fff3"/><stop offset="0.125" stop-color="#00fff2"/><stop offset="0.188" stop-color="#00fff1"/><stop offset="0.250" stop-color="#00fff0"/><stop offset="0.312" stop-color="#52ffee"/><stop offset="0.375" stop-color="#ceffec"/><stop offset="0.438" stop-color="#ffc4b4"/><stop offset="0.500" stop-color="#ff897b"/><stop offset="0.562" stop-color="#ff6256"/><stop offset="0.625" stop-color="#ff473b"/><stop offset="0.688" stop-color="#ff3025"/><stop offset="0.750" stop-color="#ff1d10"/><stop offset="0.812" stop-color="#ff0800"/><stop offset="0.875" stop-color="#ff0300"/><stop offset="0.938" stop-color="#ff0300"/><stop offset="1.000" stop-color="#ff0300"/></linearGradient><linearGradient id="r75" gradientUnits="userSpaceOnUse" x1="615.0" y1="0" x2="733.4" y2="0"><stop offset="0.000" stop-color="#00fffa"/><stop offset="0.062" stop-color="#00fff9"/><stop offset="0.125" stop-color="#00fff9"/><stop offset="0.188" stop-color="#00fff8"/><stop offset="0.250" stop-color="#00fff8"/><stop offset="0.312" stop-color="#59fff7"/><stop offset="0.375" stop-color="#d7fff6"/><stop offset="0.438" stop-color="#ffbdb6"/><stop offset="0.500" stop-color="#ff837d"/><stop offset="0.562" stop-color="#ff5e59"/><stop offset="0.625" stop-color="#ff423e"/><stop offset="0.688" stop-color="#ff2c28"/><stop offset="0.750" stop-color="#ff1813"/><stop offset="0.812" stop-color="#ff0000"/><stop offset="0.875" stop-color="#ff0000"/><stop offset="0.938" stop-color="#ff0000"/><stop offset="1.000" stop-color="#ff0000"/></linearGradient><linearGradient id="r76" gradientUnits="userSpaceOnUse" x1="615.0" y1="0" x2="733.4" y2="0"><stop offset="0.000" stop-color="#00ffff"/><stop offset="0.062" stop-color="#00ffff"/><stop offset="0.125" stop-color="#00feff"/><stop offset="0.188" stop-color="#00feff"/><stop offset="0.250" stop-color="#00feff"/><stop offset="0.312" stop-color="#5ffdff"/><stop offset="0.375" stop-color="#dffdff"/><stop offset="0.438" stop-color="#ffb5b7"/><stop offset="0.500" stop-color="#ff7d7f"/><stop offset="0.562" stop-color="#ff595b"/><stop offset="0.625" stop-color="#ff3e40"/><stop offset="0.688" stop-color="#ff282a"/><stop offset="0.750" stop-color="#ff1416"/><stop offset="0.812" stop-color="#ff0000"/><stop offset="0.875" stop-color="#ff0000"/><stop offset="0.938" stop-color="#ff0000"/><stop offset="1.000" stop-color="#ff0000"/></linearGradient><linearGradient id="r77" gradientUnits="userSpaceOnUse" x1="615.0" y1="0" x2="733.4" y2="0"><stop offset="0.000" stop-color="#00f9ff"/><stop offset="0.062" stop-color="#00f8ff"/><stop offset="0.125" stop-color="#00f8ff"/><stop offset="0.188" stop-color="#00f7ff"/><stop offset="0.250" stop-color="#00f5ff"/><stop offset="0.312" stop-color="#62f4ff"/><stop offset="0.375" stop-color="#dff2ff"/><stop offset="0.438" stop-color="#ffaeb9"/><stop offset="0.500" stop-color="#ff7881"/><stop offset="0.562" stop-color="#ff545d"/><stop offset="0.625" stop-color="#ff3a42"/><stop offset="0.688" stop-color="#ff242d"/><stop offset="0.750" stop-color="#ff0f19"/><stop offset="0.812" stop-color="#ff0002"/><stop offset="0.875" stop-color="#ff0000"/><stop offset="0.938" stop-color="#ff0000"/><stop offset="1.000" stop-color="#ff0000"/></linearGradient><linearGradient id="r78" gradientUnits="userSpaceOnUse" x1="615.0" y1="0" x2="733.4" y2="0"><stop offset="0.000" stop-color="#00f3ff"/><stop offset="0.062" stop-color="#00f2ff"/><stop offset="0.125" stop-color="#00f1ff"/><stop offset="0.188" stop-color="#00efff"/><stop offset="0.250" stop-color="#00edff"/><stop offset="0.312" stop-color="#65ebff"/><stop offset="0.375" stop-color="#dfe8ff"/><stop offset="0.438" stop-color="#ffa7bb"/><stop offset="0.500" stop-color="#ff7283"/><stop offset="0.562" stop-color="#ff505f"/><stop offset="0.625" stop-color="#ff3645"/><stop offset="0.688" stop-color="#ff202f"/><stop offset="0.750" stop-color="#ff091c"/><stop offset="0.812" stop-color="#ff0007"/><stop offset="0.875" stop-color="#ff0000"/><stop offset="0.938" stop-color="#ff0000"/><stop offset="1.000" stop-color="#ff0000"/></linearGradient><linearGradient id="r79" gradientUnits="userSpaceOnUse" x1="615.0" y1="0" x2="733.4" y2="0"><stop offset="0.000" stop-color="#00eeff"/><stop offset="0.062" stop-color="#00ecff"/><stop offset="0.125" stop-color="#00eaff"/><stop offset="0.188" stop-color="#00e8ff"/><stop offset="0.250" stop-color="#00e5ff"/><stop offset="0.312" stop-color="#68e2ff"/><stop offset="0.375" stop-color="#dfdeff"/><stop offset="0.438" stop-color="#ffa0bd"/><stop offset="0.500" stop-color="#ff6d85"/><stop offset="0.562" stop-color="#ff4b61"/><stop offset="0.625" stop-color="#ff3147"/><stop offset="0.688" stop-color="#ff1b31"/><stop offset="0.750" stop-color="#ff001e"/><stop offset="0.812" stop-color="#ff000b"/><stop offset="0.875" stop-color="#ff0000"/><stop offset="0.938" stop-color="#ff0000"/><stop offset="1.000" stop-color="#ff0000"/></linearGradient><linearGradient id="r80" gradientUnits="userSpaceOnUse" x1="615.0" y1="0" x2="733.4" y2="0"><stop offset="0.000" stop-color="#00e8ff"/><stop offset="0.062" stop-color="#00e6ff"/><stop offset="0.125" stop-color="#00e4ff"/><stop offset="0.188" stop-color="#00e1ff"/><stop offset="0.250" stop-color="#00deff"/><stop offset="0.312" stop-color="#6bd9ff"/><stop offset="0.375" stop-color="#dfd4ff"/><stop offset="0.438" stop-color="#ff99be"/><stop offset="0.500" stop-color="#ff6887"/><stop offset="0.562" stop-color="#ff4664"/><stop offset="0.625" stop-color="#ff2d49"/><stop offset="0.688" stop-color="#ff1634"/><stop offset="0.750" stop-color="#ff0021"/><stop offset="0.812" stop-color="#ff000f"/><stop offset="0.875" stop-color="#ff0000"/><stop offset="0.938" stop-color="#ff0000"/><stop offset="1.000" stop-color="#ff0000"/></linearGradient><linearGradient id="r81" gradientUnits="userSpaceOnUse" x1="615.0" y1="0" x2="733.4" y2="0"><stop offset="0.000" stop-color="#00e3ff"/><stop offset="0.062" stop-color="#00e0ff"/><stop offset="0.125" stop-color="#00deff"/><stop offset="0.188" stop-color="#00daff"/><stop offset="0.250" stop-color="#00d6ff"/><stop offset="0.312" stop-color="#6ed1ff"/><stop offset="0.375" stop-color="#dfcaff"/><stop offset="0.438" stop-color="#ff92c0"/><stop offset="0.500" stop-color="#ff6289"/><stop offset="0.562" stop-color="#ff4166"/><stop offset="0.625" stop-color="#ff284b"/><stop offset="0.688" stop-color="#ff1036"/><stop offset="0.750" stop-color="#ff0023"/><stop offset="0.812" stop-color="#ff0012"/><stop offset="0.875" stop-color="#ff0000"/><stop offset="0.938" stop-color="#ff0000"/><stop offset="1.000" stop-color="#ff0000"/></linearGradient><linearGradient id="r82" gradientUnits="userSpaceOnUse" x1="615.0" y1="0" x2="733.4" y2="0"><stop offset="0.000" stop-color="#00ddff"/><stop offset="0.062" stop-color="#00dbff"/><stop offset="0.125" stop-color="#00d7ff"/><stop offset="0.188" stop-color="#00d3ff"/><stop offset="0.250" stop-color="#00cfff"/><stop offset="0.312" stop-color="#70c9ff"/><stop offset="0.375" stop-color="#dfc1ff"/><stop offset="0.438" stop-color="#ff8bc1"/><stop offset="0.500" stop-color="#ff5c8b"/><stop offset="0.562" stop-color="#ff3d68"/><stop offset="0.625" stop-color="#ff234d"/><stop offset="0.688" stop-color="#ff0a38"/><stop offset="0.750" stop-color="#ff0026"/><stop offset="0.812" stop-color="#ff0014"/><stop offset="0.875" stop-color="#ff0000"/><stop offset="0.938" stop-color="#ff0000"/><stop offset="1.000" stop-color="#ff0000"/></linearGradient><linearGradient id="r83" gradientUnits="userSpaceOnUse" x1="615.0" y1="0" x2="733.4" y2="0"><stop offset="0.000" stop-color="#00d8ff"/><stop offset="0.062" stop-color="#00d5ff"/><stop offset="0.125" stop-color="#00d1ff"/><stop offset="0.188" stop-color="#00cdff"/><stop offset="0.250" stop-color="#00c7ff"/><stop offset="0.312" stop-color="#73c1ff"/><stop offset="0.375" stop-color="#dfb8ff"/><stop offset="0.438" stop-color="#ff84c3"/><stop offset="0.500" stop-color="#ff578d"/><stop offset="0.562" stop-color="#ff3869"/><stop offset="0.625" stop-color="#ff1e4f"/><stop offset="0.688" stop-color="#ff003a"/><stop offset="0.750" stop-color="#ff0028"/><stop offset="0.812" stop-color="#ff0017"/><stop offset="0.875" stop-color="#ff0003"/><stop offset="0.938" stop-color="#ff0000"/><stop offset="1.000" stop-color="#ff0000"/></linearGradient><linearGradient id="r84" gradientUnits="userSpaceOnUse" x1="615.0" y1="0" x2="733.4" y2="0"><stop offset="0.000" stop-color="#00d3ff"/><stop offset="0.062" stop-color="#00cfff"/><stop offset="0.125" stop-color="#00cbff"/><stop offset="0.188" stop-color="#00c6ff"/><stop offset="0.250" stop-color="#00c0ff"/><stop offset="0.312" stop-color="#75b9ff"/><stop offset="0.375" stop-color="#dfafff"/><stop offset="0.438" stop-color="#ff7dc4"/><stop offset="0.500" stop-color="#ff518f"/><stop offset="0.562" stop-color="#ff326b"/><stop offset="0.625" stop-color="#ff1851"/><stop offset="0.688" stop-color="#ff003c"/><stop offset="0.750" stop-color="#ff002a"/><stop offset="0.812" stop-color="#ff0019"/><stop offset="0.875" stop-color="#ff0007"/><stop offset="0.938" stop-color="#ff0000"/><stop offset="1.000" stop-color="#ff0000"/></linearGradient><linearGradient id="r85" gradientUnits="userSpaceOnUse" x1="615.0" y1="0" x2="733.4" y2="0"><stop offset="0.000" stop-color="#00ceff"/><stop offset="0.062" stop-color="#00caff"/><stop offset="0.125" stop-color="#00c5ff"/><stop offset="0.188" stop-color="#00c0ff"/><stop offset="0.250" stop-color="#00b9ff"/><stop offset="0.312" stop-color="#77b1ff"/><stop offset="0.375" stop-color="#dfa6ff"/><stop offset="0.438" stop-color="#ff76c6"/><stop offset="0.500" stop-color="#ff4c91"/><stop offset="0.562" stop-color="#ff2d6d"/><stop offset="0.625" stop-color="#ff1353"/><stop offset="0.688" stop-color="#ff003e"/><stop offset="0.750" stop-color="#ff002c"/><stop offset="0.812" stop-color="#ff001c"/><stop offset="0.875" stop-color="#ff000b"/><stop offset="0.938" stop-color="#ff0000"/><stop offset="1.000" stop-color="#ff0000"/></linearGradient><linearGradient id="r86" gradientUnits="userSpaceOnUse" x1="615.0" y1="0" x2="733.4" y2="0"><stop offset="0.000" stop-color="#00c9ff"/><stop offset="0.062" stop-color="#00c5ff"/><stop offset="0.125" stop-color="#00bfff"/><stop offset="0.188" stop-color="#00b9ff"/><stop offset="0.250" stop-color="#00b2ff"/><stop offset="0.312" stop-color="#7aa9ff"/><stop offset="0.375" stop-color="#df9eff"/><stop offset="0.438" stop-color="#ff6fc7"/><stop offset="0.500" stop-color="#ff4692"/><stop offset="0.562" stop-color="#ff286f"/><stop offset="0.625" stop-color="#ff0c55"/><stop offset="0.688" stop-color="#ff0040"/><stop offset="0.750" stop-color="#ff002e"/><stop offset="0.812" stop-color="#ff001e"/><stop offset="0.875" stop-color="#ff000e"/><stop offset="0.938" stop-color="#ff0000"/><stop offset="1.000" stop-color="#ff0000"/></linearGradient><linearGradient id="r87" gradientUnits="userSpaceOnUse" x1="615.0" y1="0" x2="733.4" y2="0"><stop offset="0.000" stop-color="#00c4ff"/><stop offset="0.062" stop-color="#00bfff"/><stop offset="0.125" stop-color="#00baff"/><stop offset="0.188" stop-color="#00b3ff"/><stop offset="0.250" stop-color="#00abff"/><stop offset="0.312" stop-color="#7ca1ff"/><stop offset="0.375" stop-color="#df95ff"/><stop offset="0.438" stop-color="#ff68c8"/><stop offset="0.500" stop-color="#ff4094"/><stop offset="0.562" stop-color="#ff2271"/><stop offset="0.625" stop-color="#ff0257"/><stop offset="0.688" stop-color="#ff0042"/><stop offset="0.750" stop-color="#ff0030"/><stop offset="0.812" stop-color="#ff0020"/><stop offset="0.875" stop-color="#ff0010"/><stop offset="0.938" stop-color="#ff0000"/><stop offset="1.000" stop-color="#ff0000"/></linearGradient><linearGradient id="r88" gradientUnits="userSpaceOnUse" x1="615.0" y1="0" x2="733.4" y2="0"><stop offset="0.000" stop-color="#00bfff"/><stop offset="0.062" stop-color="#00baff"/><stop offset="0.125" stop-color="#00b4ff"/><stop offset="0.188" stop-color="#00adff"/><stop offset="0.250" stop-color="#00a5ff"/><stop offset="0.312" stop-color="#7e9aff"/><stop offset="0.375" stop-color="#df8dff"/><stop offset="0.438" stop-color="#ff61c9"/><stop offset="0.500" stop-color="#ff3a95"/><stop offset="0.562" stop-color="#ff1c72"/><stop offset="0.625" stop-color="#ff0058"/><stop offset="0.688" stop-color="#ff0044"/><stop offset="0.750" stop-color="#ff0032"/><stop offset="0.812" stop-color="#ff0022"/><stop offset="0.875" stop-color="#ff0013"/><stop offset="0.938" stop-color="#ff0000"/><stop offset="1.000" stop-color="#ff0000"/></linearGradient><linearGradient id="r89" gradientUnits="userSpaceOnUse" x1="615.0" y1="0" x2="733.4" y2="0"><stop offset="0.000" stop-color="#00baff"/><stop offset="0.062" stop-color="#00b5ff"/><stop offset="0.125" stop-color="#00aeff"/><stop offset="0.188" stop-color="#00a7ff"/><stop offset="0.250" stop-color="#019eff"/><stop offset="0.312" stop-color="#7f93ff"/><stop offset="0.375" stop-color="#df85ff"/><stop offset="0.438" stop-color="#ff5bcb"/><stop offset="0.500" stop-color="#ff3497"/><stop offset="0.562" stop-color="#ff1574"/><stop offset="0.625" stop-color="#ff005a"/><stop offset="0.688" stop-color="#ff0045"/><stop offset="0.750" stop-color="#ff0034"/><stop offset="0.812" stop-color="#ff0024"/><stop offset="0.875" stop-color="#ff0015"/><stop offset="0.938" stop-color="#ff0003"/><stop offset="1.000" stop-color="#ff0000"/></linearGradient><linearGradient id="r90" gradientUnits="userSpaceOnUse" x1="615.0" y1="0" x2="733.4" y2="0"><stop offset="0.000" stop-color="#00b5ff"/><stop offset="0.062" stop-color="#00b0ff"/><stop offset="0.125" stop-color="#00a9ff"/><stop offset="0.188" stop-color="#00a1ff"/><stop offset="0.250" stop-color="#0c97ff"/><stop offset="0.312" stop-color="#818bff"/><stop offset="0.375" stop-color="#df7cff"/><stop offset="0.438" stop-color="#ff54cc"/><stop offset="0.500" stop-color="#ff2e99"/><stop offset="0.562" stop-color="#ff0e76"/><stop offset="0.625" stop-color="#ff005c"/><stop offset="0.688" stop-color="#ff0047"/><stop offset="0.750" stop-color="#ff0036"/><stop offset="0.812" stop-color="#ff0026"/><stop offset="0.875" stop-color="#ff0017"/><stop offset="0.938" stop-color="#ff0007"/><stop offset="1.000" stop-color="#ff0000"/></linearGradient><linearGradient id="r91" gradientUnits="userSpaceOnUse" x1="615.0" y1="0" x2="733.4" y2="0"><stop offset="0.000" stop-color="#00b1ff"/><stop offset="0.062" stop-color="#00abff"/><stop offset="0.125" stop-color="#00a3ff"/><stop offset="0.188" stop-color="#009bff"/><stop offset="0.250" stop-color="#1391ff"/><stop offset="0.312" stop-color="#8384ff"/><stop offset="0.375" stop-color="#df74ff"/><stop offset="0.438" stop-color="#ff4dcd"/><stop offset="0.500" stop-color="#ff279a"/><stop offset="0.562" stop-color="#ff0377"/><stop offset="0.625" stop-color="#ff005d"/><stop offset="0.688" stop-color="#ff0049"/><stop offset="0.750" stop-color="#ff0037"/><stop offset="0.812" stop-color="#ff0028"/><stop offset="0.875" stop-color="#ff001a"/><stop offset="0.938" stop-color="#ff000a"/><stop offset="1.000" stop-color="#ff0000"/></linearGradient><linearGradient id="r92" gradientUnits="userSpaceOnUse" x1="615.0" y1="0" x2="733.4" y2="0"><stop offset="0.000" stop-color="#00acff"/><stop offset="0.062" stop-color="#00a6ff"/><stop offset="0.125" stop-color="#009eff"/><stop offset="0.188" stop-color="#0095ff"/><stop offset="0.250" stop-color="#198aff"/><stop offset="0.312" stop-color="#857dff"/><stop offset="0.375" stop-color="#df6cff"/><stop offset="0.438" stop-color="#ff45ce"/><stop offset="0.500" stop-color="#ff209c"/><stop offset="0.562" stop-color="#ff0079"/><stop offset="0.625" stop-color="#ff005f"/><stop offset="0.688" stop-color="#ff004b"/><stop offset="0.750" stop-color="#ff0039"/><stop offset="0.812" stop-color="#ff002a"/><stop offset="0.875" stop-color="#ff001c"/><stop offset="0.938" stop-color="#ff000d"/><stop offset="1.000" stop-color="#ff0000"/></linearGradient><linearGradient id="r93" gradientUnits="userSpaceOnUse" x1="615.0" y1="0" x2="733.4" y2="0"><stop offset="0.000" stop-color="#00a7ff"/><stop offset="0.062" stop-color="#00a1ff"/><stop offset="0.125" stop-color="#0099ff"/><stop offset="0.188" stop-color="#008fff"/><stop offset="0.250" stop-color="#1e84ff"/><stop offset="0.312" stop-color="#8676ff"/><stop offset="0.375" stop-color="#df64ff"/><stop offset="0.438" stop-color="#ff3ecf"/><stop offset="0.500" stop-color="#ff199d"/><stop offset="0.562" stop-color="#ff007b"/><stop offset="0.625" stop-color="#ff0061"/><stop offset="0.688" stop-color="#ff004c"/><stop offset="0.750" stop-color="#ff003b"/><stop offset="0.812" stop-color="#ff002c"/><stop offset="0.875" stop-color="#ff001e"/><stop offset="0.938" stop-color="#ff000f"/><stop offset="1.000" stop-color="#ff0001"/></linearGradient><linearGradient id="r94" gradientUnits="userSpaceOnUse" x1="615.0" y1="0" x2="733.4" y2="0"><stop offset="0.000" stop-color="#00a3ff"/><stop offset="0.062" stop-color="#009cff"/><stop offset="0.125" stop-color="#0093ff"/><stop offset="0.188" stop-color="#008aff"/><stop offset="0.250" stop-color="#237eff"/><stop offset="0.312" stop-color="#886fff"/><stop offset="0.375" stop-color="#df5cff"/><stop offset="0.438" stop-color="#ff37d0"/><stop offset="0.500" stop-color="#ff109e"/><stop offset="0.562" stop-color="#ff007c"/><stop offset="0.625" stop-color="#ff0062"/><stop offset="0.688" stop-color="#ff004e"/><stop offset="0.750" stop-color="#ff003d"/><stop offset="0.812" stop-color="#ff002d"/><stop offset="0.875" stop-color="#ff0020"/><stop offset="0.938" stop-color="#ff0012"/><stop offset="1.000" stop-color="#ff0003"/></linearGradient><linearGradient id="r95" gradientUnits="userSpaceOnUse" x1="615.0" y1="0" x2="733.4" y2="0"><stop offset="0.000" stop-color="#009eff"/><stop offset="0.062" stop-color="#0097ff"/><stop offset="0.125" stop-color="#008eff"/><stop offset="0.188" stop-color="#0084ff"/><stop offset="0.250" stop-color="#2878ff"/><stop offset="0.312" stop-color="#8968ff"/><stop offset="0.375" stop-color="#df54ff"/><stop offset="0.438" stop-color="#ff2fd1"/><stop offset="0.500" stop-color="#ff05a0"/><stop offset="0.562" stop-color="#ff007e"/><stop offset="0.625" stop-color="#ff0064"/><stop offset="0.688" stop-color="#ff004f"/><stop offset="0.750" stop-color="#ff003e"/><stop offset="0.812" stop-color="#ff002f"/><stop offset="0.875" stop-color="#ff0021"/><stop offset="0.938" stop-color="#ff0014"/><stop offset="1.000" stop-color="#ff0003"/></linearGradient><linearGradient id="r96" gradientUnits="userSpaceOnUse" x1="615.0" y1="0" x2="733.4" y2="0"><stop offset="0.000" stop-color="#009aff"/><stop offset="0.062" stop-color="#0092ff"/><stop offset="0.125" stop-color="#0089ff"/><stop offset="0.188" stop-color="#007eff"/><stop offset="0.250" stop-color="#2c71ff"/><stop offset="0.312" stop-color="#8b61ff"/><stop offset="0.375" stop-color="#df4cff"/><stop offset="0.438" stop-color="#ff27d2"/><stop offset="0.500" stop-color="#ff00a1"/><stop offset="0.562" stop-color="#ff007f"/><stop offset="0.625" stop-color="#ff0065"/><stop offset="0.688" stop-color="#ff0051"/><stop offset="0.750" stop-color="#ff0040"/><stop offset="0.812" stop-color="#ff0031"/><stop offset="0.875" stop-color="#ff0023"/><stop offset="0.938" stop-color="#ff0016"/><stop offset="1.000" stop-color="#ff0007"/></linearGradient><linearGradient id="r97" gradientUnits="userSpaceOnUse" x1="615.0" y1="0" x2="733.4" y2="0"><stop offset="0.000" stop-color="#0095ff"/><stop offset="0.062" stop-color="#008dff"/><stop offset="0.125" stop-color="#0084ff"/><stop offset="0.188" stop-color="#0079ff"/><stop offset="0.250" stop-color="#2f6bff"/><stop offset="0.312" stop-color="#8c5aff"/><stop offset="0.375" stop-color="#df44ff"/><stop offset="0.438" stop-color="#ff1ed3"/><stop offset="0.500" stop-color="#ff00a2"/><stop offset="0.562" stop-color="#ff0080"/><stop offset="0.625" stop-color="#ff0067"/><stop offset="0.688" stop-color="#ff0052"/><stop offset="0.750" stop-color="#ff0041"/><stop offset="0.812" stop-color="#ff0032"/><stop offset="0.875" stop-color="#ff0025"/><stop offset="0.938" stop-color="#ff0018"/><stop offset="1.000" stop-color="#ff000a"/></linearGradient><linearGradient id="r98" gradientUnits="userSpaceOnUse" x1="615.0" y1="0" x2="733.4" y2="0"><stop offset="0.000" stop-color="#0091ff"/><stop offset="0.062" stop-color="#0088ff"/><stop offset="0.125" stop-color="#007fff"/><stop offset="0.188" stop-color="#0073ff"/><stop offset="0.250" stop-color="#3365ff"/><stop offset="0.312" stop-color="#8d53ff"/><stop offset="0.375" stop-color="#df3cff"/><stop offset="0.438" stop-color="#ff14d4"/><stop offset="0.500" stop-color="#ff00a4"/><stop offset="0.562" stop-color="#ff0082"/><stop offset="0.625" stop-color="#ff0068"/><stop offset="0.688" stop-color="#ff0054"/><stop offset="0.750" stop-color="#ff0043"/><stop offset="0.812" stop-color="#ff0034"/><stop offset="0.875" stop-color="#ff0027"/><stop offset="0.938" stop-color="#ff001a"/><stop offset="1.000" stop-color="#ff000c"/></linearGradient><linearGradient id="r99" gradientUnits="userSpaceOnUse" x1="615.0" y1="0" x2="733.4" y2="0"><stop offset="0.000" stop-color="#008cff"/><stop offset="0.062" stop-color="#0084ff"/><stop offset="0.125" stop-color="#007aff"/><stop offset="0.188" stop-color="#006dff"/><stop offset="0.250" stop-color="#365fff"/><stop offset="0.312" stop-color="#8f4cff"/><stop offset="0.375" stop-color="#df33ff"/><stop offset="0.438" stop-color="#ff07d5"/><stop offset="0.500" stop-color="#ff00a5"/><stop offset="0.562" stop-color="#ff0083"/><stop offset="0.625" stop-color="#ff006a"/><stop offset="0.688" stop-color="#ff0055"/><stop offset="0.750" stop-color="#ff0044"/><stop offset="0.812" stop-color="#ff0036"/><stop offset="0.875" stop-color="#ff0028"/><stop offset="0.938" stop-color="#ff001c"/><stop offset="1.000" stop-color="#ff000f"/></linearGradient><linearGradient id="r100" gradientUnits="userSpaceOnUse" x1="615.0" y1="0" x2="733.4" y2="0"><stop offset="0.000" stop-color="#0088ff"/><stop offset="0.062" stop-color="#007fff"/><stop offset="0.125" stop-color="#0074ff"/><stop offset="0.188" stop-color="#0068ff"/><stop offset="0.250" stop-color="#3a59ff"/><stop offset="0.312" stop-color="#9045ff"/><stop offset="0.375" stop-color="#df2aff"/><stop offset="0.438" stop-color="#ff00d6"/><stop offset="0.500" stop-color="#ff00a6"/><stop offset="0.562" stop-color="#ff0085"/><stop offset="0.625" stop-color="#ff006b"/><stop offset="0.688" stop-color="#ff0057"/><stop offset="0.750" stop-color="#ff0046"/><stop offset="0.812" stop-color="#ff0037"/><stop offset="0.875" stop-color="#ff002a"/><stop offset="0.938" stop-color="#ff001d"/><stop offset="1.000" stop-color="#ff0011"/></linearGradient><linearGradient id="r101" gradientUnits="userSpaceOnUse" x1="615.0" y1="0" x2="733.4" y2="0"><stop offset="0.000" stop-color="#0083ff"/><stop offset="0.062" stop-color="#007aff"/><stop offset="0.125" stop-color="#006fff"/><stop offset="0.188" stop-color="#0062ff"/><stop offset="0.250" stop-color="#3d52ff"/><stop offset="0.312" stop-color="#913eff"/><stop offset="0.375" stop-color="#df21ff"/><stop offset="0.438" stop-color="#ff00d7"/><stop offset="0.500" stop-color="#ff00a7"/><stop offset="0.562" stop-color="#ff0086"/><stop offset="0.625" stop-color="#ff006d"/><stop offset="0.688" stop-color="#ff0058"/><stop offset="0.750" stop-color="#ff0047"/><stop offset="0.812" stop-color="#ff0039"/><stop offset="0.875" stop-color="#ff002b"/><stop offset="0.938" stop-color="#ff001f"/><stop offset="1.000" stop-color="#ff0013"/></linearGradient><linearGradient id="r102" gradientUnits="userSpaceOnUse" x1="615.0" y1="0" x2="733.4" y2="0"><stop offset="0.000" stop-color="#007fff"/><stop offset="0.062" stop-color="#0076ff"/><stop offset="0.125" stop-color="#006aff"/><stop offset="0.188" stop-color="#005dff"/><stop offset="0.250" stop-color="#404cff"/><stop offset="0.312" stop-color="#9236ff"/><stop offset="0.375" stop-color="#df16ff"/><stop offset="0.438" stop-color="#ff00d8"/><stop offset="0.500" stop-color="#ff00a9"/><stop offset="0.562" stop-color="#ff0087"/><stop offset="0.625" stop-color="#ff006e"/><stop offset="0.688" stop-color="#ff005a"/><stop offset="0.750" stop-color="#ff0049"/><stop offset="0.812" stop-color="#ff003a"/><stop offset="0.875" stop-color="#ff002d"/><stop offset="0.938" stop-color="#ff0021"/><stop offset="1.000" stop-color="#ff0015"/></linearGradient><linearGradient id="r103" gradientUnits="userSpaceOnUse" x1="615.0" y1="0" x2="733.4" y2="0"><stop offset="0.000" stop-color="#007bff"/><stop offset="0.062" stop-color="#0071ff"/><stop offset="0.125" stop-color="#0065ff"/><stop offset="0.188" stop-color="#0057ff"/><stop offset="0.250" stop-color="#4246ff"/><stop offset="0.312" stop-color="#942fff"/><stop offset="0.375" stop-color="#df09ff"/><stop offset="0.438" stop-color="#ff00d9"/><stop offset="0.500" stop-color="#ff00aa"/><stop offset="0.562" stop-color="#ff0089"/><stop offset="0.625" stop-color="#ff006f"/><stop offset="0.688" stop-color="#ff005b"/><stop offset="0.750" stop-color="#ff004a"/><stop offset="0.812" stop-color="#ff003c"/><stop offset="0.875" stop-color="#ff002e"/><stop offset="0.938" stop-color="#ff0022"/><stop offset="1.000" stop-color="#ff0016"/></linearGradient><linearGradient id="r104" gradientUnits="userSpaceOnUse" x1="615.0" y1="0" x2="733.4" y2="0"><stop offset="0.000" stop-color="#0076ff"/><stop offset="0.062" stop-color="#006cff"/><stop offset="0.125" stop-color="#0060ff"/><stop offset="0.188" stop-color="#0052ff"/><stop offset="0.250" stop-color="#453fff"/><stop offset="0.312" stop-color="#9527ff"/><stop offset="0.375" stop-color="#df00ff"/><stop offset="0.438" stop-color="#ff00da"/><stop offset="0.500" stop-color="#ff00ab"/><stop offset="0.562" stop-color="#ff008a"/><stop offset="0.625" stop-color="#ff0071"/><stop offset="0.688" stop-color="#ff005c"/><stop offset="0.750" stop-color="#ff004c"/><stop offset="0.812" stop-color="#ff003d"/><stop offset="0.875" stop-color="#ff0030"/><stop offset="0.938" stop-color="#ff0024"/><stop offset="1.000" stop-color="#ff0018"/></linearGradient><linearGradient id="r105" gradientUnits="userSpaceOnUse" x1="615.0" y1="0" x2="733.4" y2="0"><stop offset="0.000" stop-color="#0072ff"/><stop offset="0.062" stop-color="#0068ff"/><stop offset="0.125" stop-color="#005bff"/><stop offset="0.188" stop-color="#004cff"/><stop offset="0.250" stop-color="#4839ff"/><stop offset="0.312" stop-color="#961eff"/><stop offset="0.375" stop-color="#df00ff"/><stop offset="0.438" stop-color="#ff00db"/><stop offset="0.500" stop-color="#ff00ac"/><stop offset="0.562" stop-color="#ff008b"/><stop offset="0.625" stop-color="#ff0072"/><stop offset="0.688" stop-color="#ff005e"/><stop offset="0.750" stop-color="#ff004d"/><stop offset="0.812" stop-color="#ff003e"/><stop offset="0.875" stop-color="#ff0031"/><stop offset="0.938" stop-color="#ff0025"/><stop offset="1.000" stop-color="#ff001a"/></linearGradient><linearGradient id="r106" gradientUnits="userSpaceOnUse" x1="615.0" y1="0" x2="733.4" y2="0"><stop offset="0.000" stop-color="#006eff"/><stop offset="0.062" stop-color="#0063ff"/><stop offset="0.125" stop-color="#0056ff"/><stop offset="0.188" stop-color="#0046ff"/><stop offset="0.250" stop-color="#4a32ff"/><stop offset="0.312" stop-color="#9715ff"/><stop offset="0.375" stop-color="#df00ff"/><stop offset="0.438" stop-color="#ff00db"/><stop offset="0.500" stop-color="#ff00ad"/><stop offset="0.562" stop-color="#ff008c"/><stop offset="0.625" stop-color="#ff0073"/><stop offset="0.688" stop-color="#ff005f"/><stop offset="0.750" stop-color="#ff004e"/><stop offset="0.812" stop-color="#ff0040"/><stop offset="0.875" stop-color="#ff0033"/><stop offset="0.938" stop-color="#ff0027"/><stop offset="1.000" stop-color="#ff001c"/></linearGradient><linearGradient id="r107" gradientUnits="userSpaceOnUse" x1="615.0" y1="0" x2="733.4" y2="0"><stop offset="0.000" stop-color="#006aff"/><stop offset="0.062" stop-color="#005fff"/><stop offset="0.125" stop-color="#0051ff"/><stop offset="0.188" stop-color="#0041ff"/><stop offset="0.250" stop-color="#4c2bff"/><stop offset="0.312" stop-color="#9809ff"/><stop offset="0.375" stop-color="#df00ff"/><stop offset="0.438" stop-color="#ff00dc"/><stop offset="0.500" stop-color="#ff00ae"/><stop offset="0.562" stop-color="#ff008d"/><stop offset="0.625" stop-color="#ff0074"/><stop offset="0.688" stop-color="#ff0060"/><stop offset="0.750" stop-color="#ff0050"/><stop offset="0.812" stop-color="#ff0041"/><stop offset="0.875" stop-color="#ff0034"/><stop offset="0.938" stop-color="#ff0028"/><stop offset="1.000" stop-color="#ff001d"/></linearGradient><linearGradient id="r108" gradientUnits="userSpaceOnUse" x1="615.0" y1="0" x2="733.4" y2="0"><stop offset="0.000" stop-color="#0065ff"/><stop offset="0.062" stop-color="#005aff"/><stop offset="0.125" stop-color="#004cff"/><stop offset="0.188" stop-color="#003bff"/><stop offset="0.250" stop-color="#4f24ff"/><stop offset="0.312" stop-color="#9900ff"/><stop offset="0.375" stop-color="#df00ff"/><stop offset="0.438" stop-color="#ff00dd"/><stop offset="0.500" stop-color="#ff00af"/><stop offset="0.562" stop-color="#ff008f"/><stop offset="0.625" stop-color="#ff0076"/><stop offset="0.688" stop-color="#ff0062"/><stop offset="0.750" stop-color="#ff0051"/><stop offset="0.812" stop-color="#ff0042"/><stop offset="0.875" stop-color="#ff0036"/><stop offset="0.938" stop-color="#ff002a"/><stop offset="1.000" stop-color="#ff001f"/></linearGradient><linearGradient id="r109" gradientUnits="userSpaceOnUse" x1="615.0" y1="0" x2="733.4" y2="0"><stop offset="0.000" stop-color="#0061ff"/><stop offset="0.062" stop-color="#0055ff"/><stop offset="0.125" stop-color="#0047ff"/><stop offset="0.188" stop-color="#0035ff"/><stop offset="0.250" stop-color="#511cff"/><stop offset="0.312" stop-color="#9a00ff"/><stop offset="0.375" stop-color="#df00ff"/><stop offset="0.438" stop-color="#ff00de"/><stop offset="0.500" stop-color="#ff00b0"/><stop offset="0.562" stop-color="#ff0090"/><stop offset="0.625" stop-color="#ff0077"/><stop offset="0.688" stop-color="#ff0063"/><stop offset="0.750" stop-color="#ff0052"/><stop offset="0.812" stop-color="#ff0044"/><stop offset="0.875" stop-color="#ff0037"/><stop offset="0.938" stop-color="#ff002b"/><stop offset="1.000" stop-color="#ff0020"/></linearGradient><linearGradient id="r110" gradientUnits="userSpaceOnUse" x1="615.0" y1="0" x2="733.4" y2="0"><stop offset="0.000" stop-color="#005dff"/><stop offset="0.062" stop-color="#0051ff"/><stop offset="0.125" stop-color="#0042ff"/><stop offset="0.188" stop-color="#002fff"/><stop offset="0.250" stop-color="#5314ff"/><stop offset="0.312" stop-color="#9b00ff"/><stop offset="0.375" stop-color="#df00ff"/><stop offset="0.438" stop-color="#ff00de"/><stop offset="0.500" stop-color="#ff00b1"/><stop offset="0.562" stop-color="#ff0091"/><stop offset="0.625" stop-color="#ff0078"/><stop offset="0.688" stop-color="#ff0064"/><stop offset="0.750" stop-color="#ff0053"/><stop offset="0.812" stop-color="#ff0045"/><stop offset="0.875" stop-color="#ff0038"/><stop offset="0.938" stop-color="#ff002d"/><stop offset="1.000" stop-color="#ff0022"/></linearGradient><linearGradient id="r111" gradientUnits="userSpaceOnUse" x1="615.0" y1="0" x2="733.4" y2="0"><stop offset="0.000" stop-color="#0059ff"/><stop offset="0.062" stop-color="#004cff"/><stop offset="0.125" stop-color="#003cff"/><stop offset="0.188" stop-color="#0029ff"/><stop offset="0.250" stop-color="#5509ff"/><stop offset="0.312" stop-color="#9c00ff"/><stop offset="0.375" stop-color="#df00ff"/><stop offset="0.438" stop-color="#ff00df"/><stop offset="0.500" stop-color="#ff00b2"/><stop offset="0.562" stop-color="#ff0092"/><stop offset="0.625" stop-color="#ff0079"/><stop offset="0.688" stop-color="#ff0065"/><stop offset="0.750" stop-color="#ff0055"/><stop offset="0.812" stop-color="#ff0046"/><stop offset="0.875" stop-color="#ff003a"/><stop offset="0.938" stop-color="#ff002e"/><stop offset="1.000" stop-color="#ff0023"/></linearGradient><linearGradient id="r112" gradientUnits="userSpaceOnUse" x1="615.0" y1="0" x2="733.4" y2="0"><stop offset="0.000" stop-color="#0054ff"/><stop offset="0.062" stop-color="#0047ff"/><stop offset="0.125" stop-color="#0037ff"/><stop offset="0.188" stop-color="#0022ff"/><stop offset="0.250" stop-color="#5700ff"/><stop offset="0.312" stop-color="#9c00ff"/><stop offset="0.375" stop-color="#df00ff"/><stop offset="0.438" stop-color="#ff00e0"/><stop offset="0.500" stop-color="#ff00b3"/><stop offset="0.562" stop-color="#ff0093"/><stop offset="0.625" stop-color="#ff007a"/><stop offset="0.688" stop-color="#ff0066"/><stop offset="0.750" stop-color="#ff0056"/><stop offset="0.812" stop-color="#ff0047"/><stop offset="0.875" stop-color="#ff003b"/><stop offset="0.938" stop-color="#ff002f"/><stop offset="1.000" stop-color="#ff0024"/></linearGradient><linearGradient id="r113" gradientUnits="userSpaceOnUse" x1="615.0" y1="0" x2="733.4" y2="0"><stop offset="0.000" stop-color="#0050ff"/><stop offset="0.062" stop-color="#0043ff"/><stop offset="0.125" stop-color="#0032ff"/><stop offset="0.188" stop-color="#001bff"/><stop offset="0.250" stop-color="#5900ff"/><stop offset="0.312" stop-color="#9d00ff"/><stop offset="0.375" stop-color="#df00ff"/><stop offset="0.438" stop-color="#ff00e1"/><stop offset="0.500" stop-color="#ff00b4"/><stop offset="0.562" stop-color="#ff0094"/><stop offset="0.625" stop-color="#ff007c"/><stop offset="0.688" stop-color="#ff0068"/><stop offset="0.750" stop-color="#ff0057"/><stop offset="0.812" stop-color="#ff0049"/><stop offset="0.875" stop-color="#ff003c"/><stop offset="0.938" stop-color="#ff0031"/><stop offset="1.000" stop-color="#ff0026"/></linearGradient><linearGradient id="r114" gradientUnits="userSpaceOnUse" x1="615.0" y1="0" x2="733.4" y2="0"><stop offset="0.000" stop-color="#004cff"/><stop offset="0.062" stop-color="#003eff"/><stop offset="0.125" stop-color="#002cff"/><stop offset="0.188" stop-color="#0013ff"/><stop offset="0.250" stop-color="#5b00ff"/><stop offset="0.312" stop-color="#9e00ff"/><stop offset="0.375" stop-color="#df00ff"/><stop offset="0.438" stop-color="#ff00e1"/><stop offset="0.500" stop-color="#ff00b5"/><stop offset="0.562" stop-color="#ff0095"/><stop offset="0.625" stop-color="#ff007d"/><stop offset="0.688" stop-color="#ff0069"/><stop offset="0.750" stop-color="#ff0058"/><stop offset="0.812" stop-color="#ff004a"/><stop offset="0.875" stop-color="#ff003d"/><stop offset="0.938" stop-color="#ff0032"/><stop offset="1.000" stop-color="#ff0027"/></linearGradient><linearGradient id="r115" gradientUnits="userSpaceOnUse" x1="615.0" y1="0" x2="733.4" y2="0"><stop offset="0.000" stop-color="#0048ff"/><stop offset="0.062" stop-color="#0039ff"/><stop offset="0.125" stop-color="#0026ff"/><stop offset="0.188" stop-color="#000aff"/><stop offset="0.250" stop-color="#5d00ff"/><stop offset="0.312" stop-color="#9f00ff"/><stop offset="0.375" stop-color="#df00ff"/><stop offset="0.438" stop-color="#ff00e2"/><stop offset="0.500" stop-color="#ff00b6"/><stop offset="0.562" stop-color="#ff0096"/><stop offset="0.625" stop-color="#ff007e"/><stop offset="0.688" stop-color="#ff006a"/><stop offset="0.750" stop-color="#ff0059"/><stop offset="0.812" stop-color="#ff004b"/><stop offset="0.875" stop-color="#ff003e"/><stop offset="0.938" stop-color="#ff0033"/><stop offset="1.000" stop-color="#ff0028"/></linearGradient><linearGradient id="r116" gradientUnits="userSpaceOnUse" x1="615.0" y1="0" x2="733.4" y2="0"><stop offset="0.000" stop-color="#0043ff"/><stop offset="0.062" stop-color="#0034ff"/><stop offset="0.125" stop-color="#0020ff"/><stop offset="0.188" stop-color="#0500ff"/><stop offset="0.250" stop-color="#5e00ff"/><stop offset="0.312" stop-color="#a000ff"/><stop offset="0.375" stop-color="#df00ff"/><stop offset="0.438" stop-color="#ff00e3"/><stop offset="0.500" stop-color="#ff00b7"/><stop offset="0.562" stop-color="#ff0097"/><stop offset="0.625" stop-color="#ff007f"/><stop offset="0.688" stop-color="#ff006b"/><stop offset="0.750" stop-color="#ff005b"/><stop offset="0.812" stop-color="#ff004c"/><stop offset="0.875" stop-color="#ff0040"/><stop offset="0.938" stop-color="#ff0034"/><stop offset="1.000" stop-color="#ff002a"/></linearGradient><linearGradient id="r117" gradientUnits="userSpaceOnUse" x1="615.0" y1="0" x2="733.4" y2="0"><stop offset="0.000" stop-color="#003fff"/><stop offset="0.062" stop-color="#002fff"/><stop offset="0.125" stop-color="#001aff"/><stop offset="0.188" stop-color="#0b00ff"/><stop offset="0.250" stop-color="#6000ff"/><stop offset="0.312" stop-color="#a100ff"/><stop offset="0.375" stop-color="#df00ff"/><stop offset="0.438" stop-color="#ff00e3"/><stop offset="0.500" stop-color="#ff00b8"/><stop offset="0.562" stop-color="#ff0098"/><stop offset="0.625" stop-color="#ff0080"/><stop offset="0.688" stop-color="#ff006c"/><stop offset="0.750" stop-color="#ff005c"/><stop offset="0.812" stop-color="#ff004d"/><stop offset="0.875" stop-color="#ff0041"/><stop offset="0.938" stop-color="#ff0036"/><stop offset="1.000" stop-color="#ff002b"/></linearGradient><linearGradient id="r118" gradientUnits="userSpaceOnUse" x1="615.0" y1="0" x2="733.4" y2="0"><stop offset="0.000" stop-color="#003aff"/><stop offset="0.062" stop-color="#002aff"/><stop offset="0.125" stop-color="#0012ff"/><stop offset="0.188" stop-color="#1000ff"/><stop offset="0.250" stop-color="#6200ff"/><stop offset="0.312" stop-color="#a100ff"/><stop offset="0.375" stop-color="#df00ff"/><stop offset="0.438" stop-color="#ff00e4"/><stop offset="0.500" stop-color="#ff00b9"/><stop offset="0.562" stop-color="#ff0099"/><stop offset="0.625" stop-color="#ff0081"/><stop offset="0.688" stop-color="#ff006d"/><stop offset="0.750" stop-color="#ff005d"/><stop offset="0.812" stop-color="#ff004f"/><stop offset="0.875" stop-color="#ff0042"/><stop offset="0.938" stop-color="#ff0037"/><stop offset="1.000" stop-color="#ff002c"/></linearGradient><linearGradient id="r119" gradientUnits="userSpaceOnUse" x1="615.0" y1="0" x2="733.4" y2="0"><stop offset="0.000" stop-color="#0036ff"/><stop offset="0.062" stop-color="#0024ff"/><stop offset="0.125" stop-color="#000aff"/><stop offset="0.188" stop-color="#1500ff"/><stop offset="0.250" stop-color="#6300ff"/><stop offset="0.312" stop-color="#a200ff"/><stop offset="0.375" stop-color="#df00ff"/><stop offset="0.438" stop-color="#ff00e5"/><stop offset="0.500" stop-color="#ff00ba"/><stop offset="0.562" stop-color="#ff009a"/><stop offset="0.625" stop-color="#ff0082"/><stop offset="0.688" stop-color="#ff006e"/><stop offset="0.750" stop-color="#ff005e"/><stop offset="0.812" stop-color="#ff0050"/><stop offset="0.875" stop-color="#ff0043"/><stop offset="0.938" stop-color="#ff0038"/><stop offset="1.000" stop-color="#ff002d"/></linearGradient><linearGradient id="r120" gradientUnits="userSpaceOnUse" x1="615.0" y1="0" x2="733.4" y2="0"><stop offset="0.000" stop-color="#0031ff"/><stop offset="0.062" stop-color="#001fff"/><stop offset="0.125" stop-color="#0000ff"/><stop offset="0.188" stop-color="#1900ff"/><stop offset="0.250" stop-color="#6500ff"/><stop offset="0.312" stop-color="#a300ff"/><stop offset="0.375" stop-color="#df00ff"/><stop offset="0.438" stop-color="#ff00e5"/><stop offset="0.500" stop-color="#ff00bb"/><stop offset="0.562" stop-color="#ff009b"/><stop offset="0.625" stop-color="#ff0083"/><stop offset="0.688" stop-color="#ff006f"/><stop offset="0.750" stop-color="#ff005f"/><stop offset="0.812" stop-color="#ff0051"/><stop offset="0.875" stop-color="#ff0044"/><stop offset="0.938" stop-color="#ff0039"/><stop offset="1.000" stop-color="#ff002f"/></linearGradient><linearGradient id="r121" gradientUnits="userSpaceOnUse" x1="615.0" y1="0" x2="733.4" y2="0"><stop offset="0.000" stop-color="#002cff"/><stop offset="0.062" stop-color="#0018ff"/><stop offset="0.125" stop-color="#0000ff"/><stop offset="0.188" stop-color="#1c00ff"/><stop offset="0.250" stop-color="#6600ff"/><stop offset="0.312" stop-color="#a300ff"/><stop offset="0.375" stop-color="#df00ff"/><stop offset="0.438" stop-color="#ff00e6"/><stop offset="0.500" stop-color="#ff00bb"/><stop offset="0.562" stop-color="#ff009c"/><stop offset="0.625" stop-color="#ff0084"/><stop offset="0.688" stop-color="#ff0071"/><stop offset="0.750" stop-color="#ff0060"/><stop offset="0.812" stop-color="#ff0052"/><stop offset="0.875" stop-color="#ff0045"/><stop offset="0.938" stop-color="#ff003a"/><stop offset="1.000" stop-color="#ff0030"/></linearGradient><linearGradient id="r122" gradientUnits="userSpaceOnUse" x1="615.0" y1="0" x2="733.4" y2="0"><stop offset="0.000" stop-color="#0027ff"/><stop offset="0.062" stop-color="#0012ff"/><stop offset="0.125" stop-color="#0000ff"/><stop offset="0.188" stop-color="#2000ff"/><stop offset="0.250" stop-color="#6800ff"/><stop offset="0.312" stop-color="#a400ff"/><stop offset="0.375" stop-color="#df00ff"/><stop offset="0.438" stop-color="#ff00e6"/><stop offset="0.500" stop-color="#ff00bc"/><stop offset="0.562" stop-color="#ff009d"/><stop offset="0.625" stop-color="#ff0085"/><stop offset="0.688" stop-color="#ff0072"/><stop offset="0.750" stop-color="#ff0061"/><stop offset="0.812" stop-color="#ff0053"/><stop offset="0.875" stop-color="#ff0046"/><stop offset="0.938" stop-color="#ff003b"/><stop offset="1.000" stop-color="#ff0031"/></linearGradient><linearGradient id="r123" gradientUnits="userSpaceOnUse" x1="615.0" y1="0" x2="733.4" y2="0"><stop offset="0.000" stop-color="#0022ff"/><stop offset="0.062" stop-color="#000aff"/><stop offset="0.125" stop-color="#0000ff"/><stop offset="0.188" stop-color="#2300ff"/><stop offset="0.250" stop-color="#6900ff"/><stop offset="0.312" stop-color="#a500ff"/><stop offset="0.375" stop-color="#df00ff"/><stop offset="0.438" stop-color="#ff00e7"/><stop offset="0.500" stop-color="#ff00bd"/><stop offset="0.562" stop-color="#ff009e"/><stop offset="0.625" stop-color="#ff0086"/><stop offset="0.688" stop-color="#ff0073"/><stop offset="0.750" stop-color="#ff0062"/><stop offset="0.812" stop-color="#ff0054"/><stop offset="0.875" stop-color="#ff0048"/><stop offset="0.938" stop-color="#ff003c"/><stop offset="1.000" stop-color="#ff0032"/></linearGradient><linearGradient id="r124" gradientUnits="userSpaceOnUse" x1="615.0" y1="0" x2="733.4" y2="0"><stop offset="0.000" stop-color="#001dff"/><stop offset="0.062" stop-color="#0000ff"/><stop offset="0.125" stop-color="#0000ff"/><stop offset="0.188" stop-color="#2600ff"/><stop offset="0.250" stop-color="#6b00ff"/><stop offset="0.312" stop-color="#a500ff"/><stop offset="0.375" stop-color="#df00ff"/><stop offset="0.438" stop-color="#ff00e7"/><stop offset="0.500" stop-color="#ff00be"/><stop offset="0.562" stop-color="#ff009f"/><stop offset="0.625" stop-color="#ff0087"/><stop offset="0.688" stop-color="#ff0074"/><stop offset="0.750" stop-color="#ff0063"/><stop offset="0.812" stop-color="#ff0055"/><stop offset="0.875" stop-color="#ff0049"/><stop offset="0.938" stop-color="#ff003d"/><stop offset="1.000" stop-color="#ff0033"/></linearGradient></defs>
<line x1="629.8" y1="61.8" x2="629.8" y2="195" stroke="#444" stroke-width="0.45" stroke-dasharray="0.9 1.3"/><line x1="644.6" y1="61.8" x2="644.6" y2="195" stroke="#444" stroke-width="0.45" stroke-dasharray="0.9 1.3"/><line x1="659.4" y1="61.8" x2="659.4" y2="195" stroke="#444" stroke-width="0.45" stroke-dasharray="0.9 1.3"/><line x1="674.2" y1="61.8" x2="674.2" y2="195" stroke="#444" stroke-width="0.45" stroke-dasharray="0.9 1.3"/><line x1="689.0" y1="61.8" x2="689.0" y2="195" stroke="#444" stroke-width="0.45" stroke-dasharray="0.9 1.3"/><line x1="703.8" y1="61.8" x2="703.8" y2="195" stroke="#444" stroke-width="0.45" stroke-dasharray="0.9 1.3"/><line x1="718.6" y1="61.8" x2="718.6" y2="195" stroke="#444" stroke-width="0.45" stroke-dasharray="0.9 1.3"/><line x1="733.4" y1="61.8" x2="733.4" y2="195" stroke="#444" stroke-width="0.45" stroke-dasharray="0.9 1.3"/><line x1="615" y1="180.2" x2="733.4" y2="180.2" stroke="#444" stroke-width="0.45" stroke-dasharray="0.9 1.3"/><line x1="615" y1="165.4" x2="733.4" y2="165.4" stroke="#444" stroke-width="0.45" stroke-dasharray="0.9 1.3"/><line x1="615" y1="150.6" x2="733.4" y2="150.6" stroke="#444" stroke-width="0.45" stroke-dasharray="0.9 1.3"/><line x1="615" y1="135.8" x2="733.4" y2="135.8" stroke="#444" stroke-width="0.45" stroke-dasharray="0.9 1.3"/><line x1="615" y1="121.0" x2="733.4" y2="121.0" stroke="#444" stroke-width="0.45" stroke-dasharray="0.9 1.3"/><line x1="615" y1="106.2" x2="733.4" y2="106.2" stroke="#444" stroke-width="0.45" stroke-dasharray="0.9 1.3"/><line x1="615" y1="91.4" x2="733.4" y2="91.4" stroke="#444" stroke-width="0.45" stroke-dasharray="0.9 1.3"/><line x1="615" y1="76.6" x2="733.4" y2="76.6" stroke="#444" stroke-width="0.45" stroke-dasharray="0.9 1.3"/><line x1="615" y1="61.8" x2="733.4" y2="61.8" stroke="#444" stroke-width="0.45" stroke-dasharray="0.9 1.3"/>
<g clip-path="url(#lc)"><rect x="615.0" y="70.00" width="118.4" height="1.02" fill="url(#r0)"/><rect x="615.0" y="71.00" width="118.4" height="1.02" fill="url(#r1)"/><rect x="615.0" y="72.00" width="118.4" height="1.02" fill="url(#r2)"/><rect x="615.0" y="73.00" width="118.4" height="1.02" fill="url(#r3)"/><rect x="615.0" y="74.00" width="118.4" height="1.02" fill="url(#r4)"/><rect x="615.0" y="75.00" width="118.4" height="1.02" fill="url(#r5)"/><rect x="615.0" y="76.00" width="118.4" height="1.02" fill="url(#r6)"/><rect x="615.0" y="77.00" width="118.4" height="1.02" fill="url(#r7)"/><rect x="615.0" y="78.00" width="118.4" height="1.02" fill="url(#r8)"/><rect x="615.0" y="79.00" width="118.4" height="1.02" fill="url(#r9)"/><rect x="615.0" y="80.00" width="118.4" height="1.02" fill="url(#r10)"/><rect x="615.0" y="81.00" width="118.4" height="1.02" fill="url(#r11)"/><rect x="615.0" y="82.00" width="118.4" height="1.02" fill="url(#r12)"/><rect x="615.0" y="83.00" width="118.4" height="1.02" fill="url(#r13)"/><rect x="615.0" y="84.00" width="118.4" height="1.02" fill="url(#r14)"/><rect x="615.0" y="85.00" width="118.4" height="1.02" fill="url(#r15)"/><rect x="615.0" y="86.00" width="118.4" height="1.02" fill="url(#r16)"/><rect x="615.0" y="87.00" width="118.4" height="1.02" fill="url(#r17)"/><rect x="615.0" y="88.00" width="118.4" height="1.02" fill="url(#r18)"/><rect x="615.0" y="89.00" width="118.4" height="1.02" fill="url(#r19)"/><rect x="615.0" y="90.00" width="118.4" height="1.02" fill="url(#r20)"/><rect x="615.0" y="91.00" width="118.4" height="1.02" fill="url(#r21)"/><rect x="615.0" y="92.00" width="118.4" height="1.02" fill="url(#r22)"/><rect x="615.0" y="93.00" width="118.4" height="1.02" fill="url(#r23)"/><rect x="615.0" y="94.00" width="118.4" height="1.02" fill="url(#r24)"/><rect x="615.0" y="95.00" width="118.4" height="1.02" fill="url(#r25)"/><rect x="615.0" y="96.00" width="118.4" height="1.02" fill="url(#r26)"/><rect x="615.0" y="97.00" width="118.4" height="1.02" fill="url(#r27)"/><rect x="615.0" y="98.00" width="118.4" height="1.02" fill="url(#r28)"/><rect x="615.0" y="99.00" width="118.4" height="1.02" fill="url(#r29)"/><rect x="615.0" y="100.00" width="118.4" height="1.02" fill="url(#r30)"/><rect x="615.0" y="101.00" width="118.4" height="1.02" fill="url(#r31)"/><rect x="615.0" y="102.00" width="118.4" height="1.02" fill="url(#r32)"/><rect x="615.0" y="103.00" width="118.4" height="1.02" fill="url(#r33)"/><rect x="615.0" y="104.00" width="118.4" height="1.02" fill="url(#r34)"/><rect x="615.0" y="105.00" width="118.4" height="1.02" fill="url(#r35)"/><rect x="615.0" y="106.00" width="118.4" height="1.02" fill="url(#r36)"/><rect x="615.0" y="107.00" width="118.4" height="1.02" fill="url(#r37)"/><rect x="615.0" y="108.00" width="118.4" height="1.02" fill="url(#r38)"/><rect x="615.0" y="109.00" width="118.4" height="1.02" fill="url(#r39)"/><rect x="615.0" y="110.00" width="118.4" height="1.02" fill="url(#r40)"/><rect x="615.0" y="111.00" width="118.4" height="1.02" fill="url(#r41)"/><rect x="615.0" y="112.00" width="118.4" height="1.02" fill="url(#r42)"/><rect x="615.0" y="113.00" width="118.4" height="1.02" fill="url(#r43)"/><rect x="615.0" y="114.00" width="118.4" height="1.02" fill="url(#r44)"/><rect x="615.0" y="115.00" width="118.4" height="1.02" fill="url(#r45)"/><rect x="615.0" y="116.00" width="118.4" height="1.02" fill="url(#r46)"/><rect x="615.0" y="117.00" width="118.4" height="1.02" fill="url(#r47)"/><rect x="615.0" y="118.00" width="118.4" height="1.02" fill="url(#r48)"/><rect x="615.0" y="119.00" width="118.4" height="1.02" fill="url(#r49)"/><rect x="615.0" y="120.00" width="118.4" height="1.02" fill="url(#r50)"/><rect x="615.0" y="121.00" width="118.4" height="1.02" fill="url(#r51)"/><rect x="615.0" y="122.00" width="118.4" height="1.02" fill="url(#r52)"/><rect x="615.0" y="123.00" width="118.4" height="1.02" fill="url(#r53)"/><rect x="615.0" y="124.00" width="118.4" height="1.02" fill="url(#r54)"/><rect x="615.0" y="125.00" width="118.4" height="1.02" fill="url(#r55)"/><rect x="615.0" y="126.00" width="118.4" height="1.02" fill="url(#r56)"/><rect x="615.0" y="127.00" width="118.4" height="1.02" fill="url(#r57)"/><rect x="615.0" y="128.00" width="118.4" height="1.02" fill="url(#r58)"/><rect x="615.0" y="129.00" width="118.4" height="1.02" fill="url(#r59)"/><rect x="615.0" y="130.00" width="118.4" height="1.02" fill="url(#r60)"/><rect x="615.0" y="131.00" width="118.4" height="1.02" fill="url(#r61)"/><rect x="615.0" y="132.00" width="118.4" height="1.02" fill="url(#r62)"/><rect x="615.0" y="133.00" width="118.4" height="1.02" fill="url(#r63)"/><rect x="615.0" y="134.00" width="118.4" height="1.02" fill="url(#r64)"/><rect x="615.0" y="135.00" width="118.4" height="1.02" fill="url(#r65)"/><rect x="615.0" y="136.00" width="118.4" height="1.02" fill="url(#r66)"/><rect x="615.0" y="137.00" width="118.4" height="1.02" fill="url(#r67)"/><rect x="615.0" y="138.00" width="118.4" height="1.02" fill="url(#r68)"/><rect x="615.0" y="139.00" width="118.4" height="1.02" fill="url(#r69)"/><rect x="615.0" y="140.00" width="118.4" height="1.02" fill="url(#r70)"/><rect x="615.0" y="141.00" width="118.4" height="1.02" fill="url(#r71)"/><rect x="615.0" y="142.00" width="118.4" height="1.02" fill="url(#r72)"/><rect x="615.0" y="143.00" width="118.4" height="1.02" fill="url(#r73)"/><rect x="615.0" y="144.00" width="118.4" height="1.02" fill="url(#r74)"/><rect x="615.0" y="145.00" width="118.4" height="1.02" fill="url(#r75)"/><rect x="615.0" y="146.00" width="118.4" height="1.02" fill="url(#r76)"/><rect x="615.0" y="147.00" width="118.4" height="1.02" fill="url(#r77)"/><rect x="615.0" y="148.00" width="118.4" height="1.02" fill="url(#r78)"/><rect x="615.0" y="149.00" width="118.4" height="1.02" fill="url(#r79)"/><rect x="615.0" y="150.00" width="118.4" height="1.02" fill="url(#r80)"/><rect x="615.0" y="151.00" width="118.4" height="1.02" fill="url(#r81)"/><rect x="615.0" y="152.00" width="118.4" height="1.02" fill="url(#r82)"/><rect x="615.0" y="153.00" width="118.4" height="1.02" fill="url(#r83)"/><rect x="615.0" y="154.00" width="118.4" height="1.02" fill="url(#r84)"/><rect x="615.0" y="155.00" width="118.4" height="1.02" fill="url(#r85)"/><rect x="615.0" y="156.00" width="118.4" height="1.02" fill="url(#r86)"/><rect x="615.0" y="157.00" width="118.4" height="1.02" fill="url(#r87)"/><rect x="615.0" y="158.00" width="118.4" height="1.02" fill="url(#r88)"/><rect x="615.0" y="159.00" width="118.4" height="1.02" fill="url(#r89)"/><rect x="615.0" y="160.00" width="118.4" height="1.02" fill="url(#r90)"/><rect x="615.0" y="161.00" width="118.4" height="1.02" fill="url(#r91)"/><rect x="615.0" y="162.00" width="118.4" height="1.02" fill="url(#r92)"/><rect x="615.0" y="163.00" width="118.4" height="1.02" fill="url(#r93)"/><rect x="615.0" y="164.00" width="118.4" height="1.02" fill="url(#r94)"/><rect x="615.0" y="165.00" width="118.4" height="1.02" fill="url(#r95)"/><rect x="615.0" y="166.00" width="118.4" height="1.02" fill="url(#r96)"/><rect x="615.0" y="167.00" width="118.4" height="1.02" fill="url(#r97)"/><rect x="615.0" y="168.00" width="118.4" height="1.02" fill="url(#r98)"/><rect x="615.0" y="169.00" width="118.4" height="1.02" fill="url(#r99)"/><rect x="615.0" y="170.00" width="118.4" height="1.02" fill="url(#r100)"/><rect x="615.0" y="171.00" width="118.4" height="1.02" fill="url(#r101)"/><rect x="615.0" y="172.00" width="118.4" height="1.02" fill="url(#r102)"/><rect x="615.0" y="173.00" width="118.4" height="1.02" fill="url(#r103)"/><rect x="615.0" y="174.00" width="118.4" height="1.02" fill="url(#r104)"/><rect x="615.0" y="175.00" width="118.4" height="1.02" fill="url(#r105)"/><rect x="615.0" y="176.00" width="118.4" height="1.02" fill="url(#r106)"/><rect x="615.0" y="177.00" width="118.4" height="1.02" fill="url(#r107)"/><rect x="615.0" y="178.00" width="118.4" height="1.02" fill="url(#r108)"/><rect x="615.0" y="179.00" width="118.4" height="1.02" fill="url(#r109)"/><rect x="615.0" y="180.00" width="118.4" height="1.02" fill="url(#r110)"/><rect x="615.0" y="181.00" width="118.4" height="1.02" fill="url(#r111)"/><rect x="615.0" y="182.00" width="118.4" height="1.02" fill="url(#r112)"/><rect x="615.0" y="183.00" width="118.4" height="1.02" fill="url(#r113)"/><rect x="615.0" y="184.00" width="118.4" height="1.02" fill="url(#r114)"/><rect x="615.0" y="185.00" width="118.4" height="1.02" fill="url(#r115)"/><rect x="615.0" y="186.00" width="118.4" height="1.02" fill="url(#r116)"/><rect x="615.0" y="187.00" width="118.4" height="1.02" fill="url(#r117)"/><rect x="615.0" y="188.00" width="118.4" height="1.02" fill="url(#r118)"/><rect x="615.0" y="189.00" width="118.4" height="1.02" fill="url(#r119)"/><rect x="615.0" y="190.00" width="118.4" height="1.02" fill="url(#r120)"/><rect x="615.0" y="191.00" width="118.4" height="1.02" fill="url(#r121)"/><rect x="615.0" y="192.00" width="118.4" height="1.02" fill="url(#r122)"/><rect x="615.0" y="193.00" width="118.4" height="1.02" fill="url(#r123)"/><rect x="615.0" y="194.00" width="118.4" height="1.02" fill="url(#r124)"/></g>
<g opacity="0.6"><line x1="629.8" y1="61.8" x2="629.8" y2="195" stroke="#444" stroke-width="0.45" stroke-dasharray="0.9 1.3"/><line x1="644.6" y1="61.8" x2="644.6" y2="195" stroke="#444" stroke-width="0.45" stroke-dasharray="0.9 1.3"/><line x1="659.4" y1="61.8" x2="659.4" y2="195" stroke="#444" stroke-width="0.45" stroke-dasharray="0.9 1.3"/><line x1="674.2" y1="61.8" x2="674.2" y2="195" stroke="#444" stroke-width="0.45" stroke-dasharray="0.9 1.3"/><line x1="689.0" y1="61.8" x2="689.0" y2="195" stroke="#444" stroke-width="0.45" stroke-dasharray="0.9 1.3"/><line x1="703.8" y1="61.8" x2="703.8" y2="195" stroke="#444" stroke-width="0.45" stroke-dasharray="0.9 1.3"/><line x1="718.6" y1="61.8" x2="718.6" y2="195" stroke="#444" stroke-width="0.45" stroke-dasharray="0.9 1.3"/><line x1="733.4" y1="61.8" x2="733.4" y2="195" stroke="#444" stroke-width="0.45" stroke-dasharray="0.9 1.3"/><line x1="615" y1="180.2" x2="733.4" y2="180.2" stroke="#444" stroke-width="0.45" stroke-dasharray="0.9 1.3"/><line x1="615" y1="165.4" x2="733.4" y2="165.4" stroke="#444" stroke-width="0.45" stroke-dasharray="0.9 1.3"/><line x1="615" y1="150.6" x2="733.4" y2="150.6" stroke="#444" stroke-width="0.45" stroke-dasharray="0.9 1.3"/><line x1="615" y1="135.8" x2="733.4" y2="135.8" stroke="#444" stroke-width="0.45" stroke-dasharray="0.9 1.3"/><line x1="615" y1="121.0" x2="733.4" y2="121.0" stroke="#444" stroke-width="0.45" stroke-dasharray="0.9 1.3"/><line x1="615" y1="106.2" x2="733.4" y2="106.2" stroke="#444" stroke-width="0.45" stroke-dasharray="0.9 1.3"/><line x1="615" y1="91.4" x2="733.4" y2="91.4" stroke="#444" stroke-width="0.45" stroke-dasharray="0.9 1.3"/><line x1="615" y1="76.6" x2="733.4" y2="76.6" stroke="#444" stroke-width="0.45" stroke-dasharray="0.9 1.3"/><line x1="615" y1="61.8" x2="733.4" y2="61.8" stroke="#444" stroke-width="0.45" stroke-dasharray="0.9 1.3"/></g>
<rect x="615" y="61.8" width="118.4" height="133.2" fill="none" stroke="#8a8a8a" stroke-width="0.7"/>
<text x="615.0" y="200.5" font-size="4" text-anchor="middle" fill="#1a1a1a" font-family="Liberation Sans">0.0</text><text x="629.8" y="200.5" font-size="4" text-anchor="middle" fill="#1a1a1a" font-family="Liberation Sans">0.1</text><text x="644.6" y="200.5" font-size="4" text-anchor="middle" fill="#1a1a1a" font-family="Liberation Sans">0.2</text><text x="659.4" y="200.5" font-size="4" text-anchor="middle" fill="#1a1a1a" font-family="Liberation Sans">0.3</text><text x="674.2" y="200.5" font-size="4" text-anchor="middle" fill="#1a1a1a" font-family="Liberation Sans">0.4</text><text x="689.0" y="200.5" font-size="4" text-anchor="middle" fill="#1a1a1a" font-family="Liberation Sans">0.5</text><text x="703.8" y="200.5" font-size="4" text-anchor="middle" fill="#1a1a1a" font-family="Liberation Sans">0.6</text><text x="718.6" y="200.5" font-size="4" text-anchor="middle" fill="#1a1a1a" font-family="Liberation Sans">0.7</text><text x="733.4" y="200.5" font-size="4" text-anchor="middle" fill="#1a1a1a" font-family="Liberation Sans">0.8</text><text x="614.6" y="196.4" font-size="4" text-anchor="end" fill="#1a1a1a" font-family="Liberation Sans">0.0</text><text x="614.6" y="181.6" font-size="4" text-anchor="end" fill="#1a1a1a" font-family="Liberation Sans">0.1</text><text x="614.6" y="166.8" font-size="4" text-anchor="end" fill="#1a1a1a" font-family="Liberation Sans">0.2</text><text x="614.6" y="152.0" font-size="4" text-anchor="end" fill="#1a1a1a" font-family="Liberation Sans">0.3</text><text x="614.6" y="137.2" font-size="4" text-anchor="end" fill="#1a1a1a" font-family="Liberation Sans">0.4</text><text x="614.6" y="122.4" font-size="4" text-anchor="end" fill="#1a1a1a" font-family="Liberation Sans">0.5</text><text x="614.6" y="107.6" font-size="4" text-anchor="end" fill="#1a1a1a" font-family="Liberation Sans">0.6</text><text x="614.6" y="92.8" font-size="4" text-anchor="end" fill="#1a1a1a" font-family="Liberation Sans">0.7</text><text x="614.6" y="78.0" font-size="4" text-anchor="end" fill="#1a1a1a" font-family="Liberation Sans">0.8</text><text x="614.6" y="63.2" font-size="4" text-anchor="end" fill="#1a1a1a" font-family="Liberation Sans">0.9</text>
<text x="611" y="58.8" font-size="4.2" fill="#222" font-family="Liberation Sans">y</text>
<text x="736.4" y="201.3" font-size="3.8" fill="#333" font-family="Liberation Sans">x</text>
<path d="M651 159.3 L655 154 L659 149.5 L664.6 143.5 L670 139 L675.6 135.7 L682 133.6 L689 133 L695 133.6 L701.4 135.4 L704 137" fill="none" stroke="#1a1a1a" stroke-width="0.8"/>
<path d="M657.3 141.9 H663.3 M660.3 138.9 V144.9" stroke="#333" stroke-width="1"/>
</svg>
<div class="ab" style="left:605px;top:205px;width:141px;height:9.5px;background:#f0f0f0;border:1px solid #d4d4d4"></div>
<div class="ab" style="left:606px;top:204px;width:139px;height:1px;background:#9a9a9a;"></div>
<div class="ab" style="left:606px;top:213.6px;width:139px;height:0.8px;background:#a8a8a8;"></div>
<div class="ab" style="left:606px;top:205.8px;width:21.5px;height:8px;background:#fcfcfc;"></div>
<div class="ab" style="left:627.5px;top:206px;width:0.8px;height:7.5px;background:#c4c4c4;"></div>
<div class="ab" style="left:649.5px;top:206px;width:0.8px;height:7.5px;background:#c4c4c4;"></div>
<div class="ab" style="left:671.5px;top:206px;width:0.8px;height:7.5px;background:#c4c4c4;"></div>
<div class="ab" style="left:603px;top:217px;width:145px;height:178px;background:#f0f0f0;border:1px solid #d6d6d6"></div>
<div class="ab" style="left:605px;top:218.5px;width:20px;height:9px;background:#fcfcfc;border:1px solid #d8d8d8;border-bottom:none"></div>
<svg class="ab" style="left:606px;top:220px;overflow:visible" width="6" height="6" viewBox="0 0 6 6"><path d="M0.8 5.5 L5 0.8" stroke="#7a9ac8" stroke-width="0.9"/><path d="M3 3 L5.5 5.5" stroke="#aac" stroke-width="0.6"/></svg>
<svg class="ab" style="left:627px;top:220.5px;overflow:visible" width="6" height="6" viewBox="0 0 6 6"><rect x="0" y="0" width="6" height="6" fill="#3a70c0"/><path d="M0 0L6 6M6 0L0 6" stroke="#bcd" stroke-width="0.7"/></svg>
<svg class="ab" style="left:741px;top:221px;overflow:visible" width="5" height="5" viewBox="0 0 5 5"><path d="M0.7 0.7L4.3 4.3M4.3 0.7L0.7 4.3" stroke="#111" stroke-width="1.1"/></svg>
<div class="ab" style="left:604px;top:227.5px;width:143px;height:1px;background:#dadada;"></div>
<div class="ab" style="left:623.4px;top:233px;width:50px;height:8.5px;background:#e9e9e9;border:1px solid #c8c8c8"></div>
<svg class="ab" style="left:668px;top:236px;overflow:visible" width="4" height="3" viewBox="0 0 4 3"><path d="M0.3 0.5L2 2.2L3.7 0.5" stroke="#444" stroke-width="0.6" fill="none"/></svg>
<div class="ab" style="left:606px;top:244.4px;width:137px;height:147.5px;background:#3a95f3;"></div>
<svg class="ab" style="left:0;top:0" width="750" height="407" viewBox="0 0 750 407">
<line x1="610.8" y1="248.9" x2="610.8" y2="386" stroke="#78bcff" stroke-width="0.8"/><line x1="632.2" y1="248.9" x2="632.2" y2="386" stroke="#78bcff" stroke-width="0.8"/><line x1="653.4" y1="248.9" x2="653.4" y2="386" stroke="#78bcff" stroke-width="0.8"/><line x1="674.6" y1="248.9" x2="674.6" y2="386" stroke="#78bcff" stroke-width="0.8"/><line x1="696" y1="248.9" x2="696" y2="386" stroke="#78bcff" stroke-width="0.8"/><line x1="717.4" y1="248.9" x2="717.4" y2="386" stroke="#78bcff" stroke-width="0.8"/><line x1="738.8" y1="248.9" x2="738.8" y2="386" stroke="#78bcff" stroke-width="0.8"/><line x1="610.8" y1="248.9" x2="738.8" y2="248.9" stroke="#78bcff" stroke-width="0.8"/><line x1="610.8" y1="266.0" x2="738.8" y2="266.0" stroke="#78bcff" stroke-width="0.8"/><line x1="610.8" y1="283.1" x2="738.8" y2="283.1" stroke="#78bcff" stroke-width="0.8"/><line x1="610.8" y1="300.3" x2="738.8" y2="300.3" stroke="#78bcff" stroke-width="0.8"/><line x1="610.8" y1="317.4" x2="738.8" y2="317.4" stroke="#78bcff" stroke-width="0.8"/><line x1="610.8" y1="334.5" x2="738.8" y2="334.5" stroke="#78bcff" stroke-width="0.8"/><line x1="610.8" y1="351.6" x2="738.8" y2="351.6" stroke="#78bcff" stroke-width="0.8"/><line x1="610.8" y1="368.7" x2="738.8" y2="368.7" stroke="#78bcff" stroke-width="0.8"/><line x1="610.8" y1="385.9" x2="738.8" y2="385.9" stroke="#78bcff" stroke-width="0.8"/>
<ellipse cx="670.3" cy="327.9" rx="50" ry="24" transform="rotate(-50.4 670.3 327.9)" fill="none" stroke="#30c0b0" stroke-opacity="0.6" stroke-width="0.8"/>
<ellipse cx="670.3" cy="327.9" rx="41.5" ry="19.9" transform="rotate(-50.4 670.3 327.9)" fill="none" stroke="#36c8a4" stroke-width="1.0"/>
<circle cx="669.9" cy="327.4" r="1.8" fill="#b0fff0" fill-opacity="0.5"/><circle cx="669.9" cy="327.4" r="1.2" fill="#eaffff"/>
<path d="M616.8 296 H622.2 M619.5 293.3 V298.7" stroke="#d02848" stroke-width="0.9"/>
</svg>
<div class="ab" style="left:0px;top:395px;width:750px;height:10px;background:#f0f0f0;"></div>
<div class="ab" style="left:0px;top:405px;width:750px;height:2px;background:#1a1a1a;"></div>
<div class="ab" style="left:684.5px;top:397px;width:0.8px;height:8px;background:#c8c8c8;"></div>
<svg class="ab" style="left:714px;top:398px;overflow:visible" width="6" height="7" viewBox="0 0 6 7"><path d="M1 6 L3.5 1 L5.5 4 M2 4.5 H5" stroke="#222" stroke-width="0.8" fill="none"/></svg>
<svg class="ab" style="left:721px;top:398px;overflow:visible" width="5" height="7" viewBox="0 0 5 7"><circle cx="1.2" cy="1.5" r="0.7" fill="#222"/><rect x="2.6" y="3.2" width="2" height="2.4" fill="#111"/></svg>
<svg class="ab" style="left:728px;top:397.5px;overflow:visible" width="6" height="8" viewBox="0 0 6 8"><rect x="0.5" y="1" width="5" height="6" fill="none" stroke="#222" stroke-width="0.7"/><path d="M0.5 3H5.5M0.5 5H5.5M2 0V1M4 0V1" stroke="#222" stroke-width="0.6"/></svg>
<svg class="ab" style="left:736px;top:398px;overflow:visible" width="6" height="7" viewBox="0 0 6 7"><circle cx="3" cy="3.5" r="2.5" fill="none" stroke="#222" stroke-width="0.8"/><circle cx="3" cy="3.5" r="1" fill="#222"/></svg>
<svg class="ab" style="left:746px;top:398px;overflow:visible" width="3" height="7" viewBox="0 0 3 7"><circle cx="1.5" cy="2" r="0.7" fill="#222"/><circle cx="1.5" cy="5" r="0.7" fill="#222"/></svg>
<div class="t" style="left:9.20px;top:2.00px;font-size:4.800px;line-height:5.760px;color:#111;font-family:'Liberation Sans',sans-serif;font-weight:normal;transform:scaleX(0.9722);-webkit-text-stroke:0.1px #111">无标题</div>
<div class="t" style="left:24.80px;top:1.00px;font-size:5.500px;line-height:6.600px;color:#222;font-family:'Liberation Sans',sans-serif;font-weight:normal;transform:scaleX(0.8932);-webkit-text-stroke:0.1px #222">- OHSP Spectral Illuminance Analyzer V1.37</div>
<div class="t" style="left:3.00px;top:9.00px;font-size:5.500px;line-height:6.600px;color:#000;font-family:'Liberation Sans',sans-serif;font-weight:normal;transform:scaleX(0.7899);-webkit-text-stroke:0.12px #000">File</div>
<div class="t" style="left:15.60px;top:9.00px;font-size:5.500px;line-height:6.600px;color:#000;font-family:'Liberation Sans',sans-serif;font-weight:normal;transform:scaleX(0.9319);-webkit-text-stroke:0.12px #000">Test</div>
<div class="t" style="left:30.80px;top:9.00px;font-size:5.500px;line-height:6.600px;color:#000;font-family:'Liberation Sans',sans-serif;font-weight:normal;transform:scaleX(0.8877);-webkit-text-stroke:0.12px #000">Setting</div>
<div class="t" style="left:51.50px;top:9.00px;font-size:5.500px;line-height:6.600px;color:#000;font-family:'Liberation Sans',sans-serif;font-weight:normal;transform:scaleX(0.9457);-webkit-text-stroke:0.12px #000">Window</div>
<div class="t" style="left:75.40px;top:9.00px;font-size:5.500px;line-height:6.600px;color:#000;font-family:'Liberation Sans',sans-serif;font-weight:normal;transform:scaleX(0.9194);-webkit-text-stroke:0.12px #000">Help</div>
<div class="t" style="left:356.00px;top:21.00px;font-size:5.200px;line-height:6.240px;color:#222;font-family:'Liberation Sans',sans-serif;font-weight:normal;transform:scaleX(0.9286);-webkit-text-stroke:0.1px #111">Integral Time</div>
<div class="t" style="left:391.00px;top:21.00px;font-size:4.600px;line-height:5.520px;color:#b0b0b0;font-family:'Liberation Sans',sans-serif;font-weight:normal;transform:scaleX(0.7818);">710</div>
<div class="t" style="left:416.00px;top:21.00px;font-size:5.200px;line-height:6.240px;color:#222;font-family:'Liberation Sans',sans-serif;font-weight:normal;transform:scaleX(0.9377);-webkit-text-stroke:0.1px #111">ms</div>
<div class="t" style="left:433.00px;top:21.00px;font-size:5.200px;line-height:6.240px;color:#222;font-family:'Liberation Sans',sans-serif;font-weight:normal;transform:scaleX(0.9348);-webkit-text-stroke:0.1px #111">Auto</div>
<div class="t" style="left:451.50px;top:21.00px;font-size:5.200px;line-height:6.240px;color:#222;font-family:'Liberation Sans',sans-serif;font-weight:normal;transform:scaleX(0.8969);-webkit-text-stroke:0.1px #111">Set</div>
<div class="t" style="left:17.00px;top:41.00px;font-size:5.500px;line-height:6.600px;color:#222;font-family:'Liberation Sans',sans-serif;font-weight:normal;transform:scaleX(0.7517);-webkit-text-stroke:0.1px #111">Parameter</div>
<div class="t" style="left:27.80px;top:54.00px;font-size:5.800px;line-height:6.960px;color:#111;font-family:'Liberation Sans',sans-serif;font-weight:normal;transform:scaleX(0.7550);-webkit-text-stroke:0.1px #111">Purity(%): 7.9</div>
<div class="t" style="left:27.80px;top:60.00px;font-size:5.800px;line-height:6.960px;color:#111;font-family:'Liberation Sans',sans-serif;font-weight:normal;transform:scaleX(0.7550);-webkit-text-stroke:0.1px #111">HalfWidth(nm): 195.4</div>
<div class="t" style="left:27.80px;top:66.00px;font-size:5.800px;line-height:6.960px;color:#111;font-family:'Liberation Sans',sans-serif;font-weight:normal;transform:scaleX(0.7550);-webkit-text-stroke:0.1px #111">Peak(nm): 543.3</div>
<div class="t" style="left:27.80px;top:73.00px;font-size:5.800px;line-height:6.960px;color:#111;font-family:'Liberation Sans',sans-serif;font-weight:normal;transform:scaleX(0.7550);-webkit-text-stroke:0.1px #111">Center(nm): 527.9</div>
<div class="t" style="left:27.80px;top:79.00px;font-size:5.800px;line-height:6.960px;color:#111;font-family:'Liberation Sans',sans-serif;font-weight:normal;transform:scaleX(0.7550);-webkit-text-stroke:0.1px #111">Centroid(nm): 547.4</div>
<div class="t" style="left:27.80px;top:85.00px;font-size:5.800px;line-height:6.960px;color:#111;font-family:'Liberation Sans',sans-serif;font-weight:normal;transform:scaleX(0.7550);-webkit-text-stroke:0.1px #111">R ratio(%): 12.7</div>
<div class="t" style="left:27.80px;top:91.00px;font-size:5.800px;line-height:6.960px;color:#111;font-family:'Liberation Sans',sans-serif;font-weight:normal;transform:scaleX(0.7550);-webkit-text-stroke:0.1px #111">G ratio(%): 82.9</div>
<div class="t" style="left:27.80px;top:98.00px;font-size:5.800px;line-height:6.960px;color:#111;font-family:'Liberation Sans',sans-serif;font-weight:normal;transform:scaleX(0.7550);-webkit-text-stroke:0.1px #111">B ratio(%): 4.3</div>
<div class="t" style="left:27.80px;top:104.00px;font-size:5.800px;line-height:6.960px;color:#111;font-family:'Liberation Sans',sans-serif;font-weight:normal;transform:scaleX(0.7550);-webkit-text-stroke:0.1px #111">CIE 1931 X: 567.106</div>
<div class="t" style="left:27.80px;top:110.00px;font-size:5.800px;line-height:6.960px;color:#111;font-family:'Liberation Sans',sans-serif;font-weight:normal;transform:scaleX(0.7550);-webkit-text-stroke:0.1px #111">CIE 1931 Y: 657.429</div>
<div class="t" style="left:27.80px;top:116.00px;font-size:5.800px;line-height:6.960px;color:#111;font-family:'Liberation Sans',sans-serif;font-weight:normal;transform:scaleX(0.7550);-webkit-text-stroke:0.1px #111">CIE 1931 Z: 621.138</div>
<div class="t" style="left:27.80px;top:123.00px;font-size:5.800px;line-height:6.960px;color:#111;font-family:'Liberation Sans',sans-serif;font-weight:normal;transform:scaleX(0.7550);-webkit-text-stroke:0.1px #111">TLCI-2012: 100</div>
<div class="t" style="left:27.80px;top:129.00px;font-size:5.800px;line-height:6.960px;color:#111;font-family:'Liberation Sans',sans-serif;font-weight:normal;transform:scaleX(0.7550);-webkit-text-stroke:0.1px #111">Integral Time(ms): 710</div>
<div class="t" style="left:27.80px;top:135.00px;font-size:5.800px;line-height:6.960px;color:#111;font-family:'Liberation Sans',sans-serif;font-weight:normal;transform:scaleX(0.7550);-webkit-text-stroke:0.1px #111">Peak Signal: 60042</div>
<div class="t" style="left:27.80px;top:141.00px;font-size:5.800px;line-height:6.960px;color:#111;font-family:'Liberation Sans',sans-serif;font-weight:normal;transform:scaleX(0.7550);-webkit-text-stroke:0.1px #111">Dark Signal: 2322</div>
<div class="t" style="left:27.80px;top:148.00px;font-size:5.800px;line-height:6.960px;color:#111;font-family:'Liberation Sans',sans-serif;font-weight:normal;transform:scaleX(0.7550);-webkit-text-stroke:0.1px #111">Compensate level: 2890</div>
<div class="t" style="left:27.80px;top:154.00px;font-size:5.800px;line-height:6.960px;color:#111;font-family:'Liberation Sans',sans-serif;font-weight:normal;transform:scaleX(0.7550);-webkit-text-stroke:0.1px #111">Voltage(V): 1.000</div>
<div class="t" style="left:27.80px;top:160.00px;font-size:5.800px;line-height:6.960px;color:#111;font-family:'Liberation Sans',sans-serif;font-weight:normal;transform:scaleX(0.7550);-webkit-text-stroke:0.1px #111">Current(A): 1.000</div>
<div class="t" style="left:27.80px;top:166.00px;font-size:5.800px;line-height:6.960px;color:#111;font-family:'Liberation Sans',sans-serif;font-weight:normal;transform:scaleX(0.7550);-webkit-text-stroke:0.1px #111">Power(W): 1.000</div>
<div class="t" style="left:27.80px;top:172.00px;font-size:5.800px;line-height:6.960px;color:#111;font-family:'Liberation Sans',sans-serif;font-weight:normal;transform:scaleX(0.7550);-webkit-text-stroke:0.1px #111">Power Factor: 1.000</div>
<div class="t" style="left:27.80px;top:179.00px;font-size:5.800px;line-height:6.960px;color:#111;font-family:'Liberation Sans',sans-serif;font-weight:normal;transform:scaleX(0.7550);-webkit-text-stroke:0.1px #111">Test date: 2019-04-03</div>
<div class="t" style="left:20.50px;top:185.00px;font-size:5.800px;line-height:6.960px;color:#111;font-family:'Liberation Sans',sans-serif;font-weight:normal;transform:scaleX(0.7550);-webkit-text-stroke:0.1px #111">Instrument Status</div>
<div class="t" style="left:27.80px;top:191.00px;font-size:5.800px;line-height:6.960px;color:#111;font-family:'Liberation Sans',sans-serif;font-weight:normal;transform:scaleX(0.7550);-webkit-text-stroke:0.1px #111">Type: OHSP-350A</div>
<div class="t" style="left:27.80px;top:197.00px;font-size:5.800px;line-height:6.960px;color:#111;font-family:'Liberation Sans',sans-serif;font-weight:normal;transform:scaleX(0.7550);-webkit-text-stroke:0.1px #111">SN: 201808725</div>
<div class="t" style="left:27.80px;top:204.00px;font-size:5.800px;line-height:6.960px;color:#111;font-family:'Liberation Sans',sans-serif;font-weight:normal;transform:scaleX(0.7550);-webkit-text-stroke:0.1px #111">Start Wave(nm): 380</div>
<div class="t" style="left:27.80px;top:210.00px;font-size:5.800px;line-height:6.960px;color:#111;font-family:'Liberation Sans',sans-serif;font-weight:normal;transform:scaleX(0.7550);-webkit-text-stroke:0.1px #111">End Wave(nm): 780</div>
<div class="t" style="left:20.50px;top:216.00px;font-size:5.800px;line-height:6.960px;color:#111;font-family:'Liberation Sans',sans-serif;font-weight:normal;transform:scaleX(0.7550);-webkit-text-stroke:0.1px #111">Product Mark</div>
<div class="t" style="left:27.80px;top:222.00px;font-size:5.800px;line-height:6.960px;color:#111;font-family:'Liberation Sans',sans-serif;font-weight:normal;transform:scaleX(0.7550);-webkit-text-stroke:0.1px #111">Product Model: OHSP-650T</div>
<div class="t" style="left:27.80px;top:229.00px;font-size:5.800px;line-height:6.960px;color:#111;font-family:'Liberation Sans',sans-serif;font-weight:normal;transform:scaleX(0.7550);-webkit-text-stroke:0.1px #111">Manufacture: </div>
<div class="t" style="left:55.00px;top:229.00px;font-size:5.000px;line-height:6.000px;color:#000;font-family:'Liberation Sans',sans-serif;font-weight:normal;transform:scaleX(0.9300);-webkit-text-stroke:0.1px #111">杭州虹谱光电科技有限公司</div>
<div class="t" style="left:27.80px;top:235.00px;font-size:5.800px;line-height:6.960px;color:#111;font-family:'Liberation Sans',sans-serif;font-weight:normal;transform:scaleX(0.7550);-webkit-text-stroke:0.1px #111">Temperature(℃): 25</div>
<div class="t" style="left:27.80px;top:241.00px;font-size:5.800px;line-height:6.960px;color:#111;font-family:'Liberation Sans',sans-serif;font-weight:normal;transform:scaleX(0.7550);-webkit-text-stroke:0.1px #111">Humidity(%): 65</div>
<div class="t" style="left:27.80px;top:247.00px;font-size:5.800px;line-height:6.960px;color:#111;font-family:'Liberation Sans',sans-serif;font-weight:normal;transform:scaleX(0.7550);-webkit-text-stroke:0.1px #111">Tester: admin</div>
<div class="t" style="left:20.50px;top:254.00px;font-size:5.800px;line-height:6.960px;color:#111;font-family:'Liberation Sans',sans-serif;font-weight:normal;transform:scaleX(0.7550);-webkit-text-stroke:0.1px #111">Electrical Parameter</div>
<div class="t" style="left:17.00px;top:268.00px;font-size:5.000px;line-height:6.000px;color:#333;font-family:'Liberation Sans',sans-serif;font-weight:normal;transform:scaleX(0.8215);-webkit-text-stroke:0.1px #111">TM30</div>
<div class="t" style="left:31.00px;top:283.00px;font-size:7.000px;line-height:8.400px;color:#000;font-family:'Liberation Mono',monospace;font-weight:bold;transform:scaleX(0.8332);-webkit-text-stroke:0.2px #000">Test</div>
<div class="t" style="left:72.00px;top:283.00px;font-size:7.000px;line-height:8.400px;color:#000;font-family:'Liberation Mono',monospace;font-weight:bold;transform:scaleX(0.7538);-webkit-text-stroke:0.2px #000">Ref</div>
<div class="t" style="left:150.70px;top:41.00px;font-size:5.500px;line-height:6.600px;color:#222;font-family:'Liberation Sans',sans-serif;font-weight:normal;transform:scaleX(0.7464);-webkit-text-stroke:0.1px #111">Data List</div>
<div class="t" style="left:159.13px;top:54.00px;font-size:5.200px;line-height:6.240px;color:#222;font-family:'Liberation Sans',sans-serif;font-weight:normal;transform:scaleX(0.8650);-webkit-text-stroke:0.1px #111">No</div>
<div class="t" style="left:155.50px;top:62.00px;font-size:5.200px;line-height:6.240px;color:#111;font-family:'Liberation Sans',sans-serif;font-weight:normal;transform:scaleX(0.8900);-webkit-text-stroke:0.1px #111">1</div>
<div class="t" style="left:180.45px;top:54.00px;font-size:5.200px;line-height:6.240px;color:#222;font-family:'Liberation Sans',sans-serif;font-weight:normal;transform:scaleX(0.8650);-webkit-text-stroke:0.1px #111">Test time</div>
<div class="t" style="left:180.70px;top:62.00px;font-size:5.200px;line-height:6.240px;color:#111;font-family:'Liberation Sans',sans-serif;font-weight:normal;transform:scaleX(0.8650);-webkit-text-stroke:0.1px #111">09:24:03</div>
<div class="t" style="left:215.28px;top:54.00px;font-size:5.200px;line-height:6.240px;color:#222;font-family:'Liberation Sans',sans-serif;font-weight:normal;transform:scaleX(0.8650);-webkit-text-stroke:0.1px #111">Φ(lm)</div>
<div class="t" style="left:214.07px;top:62.00px;font-size:5.200px;line-height:6.240px;color:#111;font-family:'Liberation Sans',sans-serif;font-weight:normal;transform:scaleX(0.8650);-webkit-text-stroke:0.1px #111">449.02</div>
<div class="t" style="left:244.63px;top:54.00px;font-size:5.200px;line-height:6.240px;color:#222;font-family:'Liberation Sans',sans-serif;font-weight:normal;transform:scaleX(0.8650);-webkit-text-stroke:0.1px #111">η(lm/W)</div>
<div class="t" style="left:245.62px;top:62.00px;font-size:5.200px;line-height:6.240px;color:#111;font-family:'Liberation Sans',sans-serif;font-weight:normal;transform:scaleX(0.8650);-webkit-text-stroke:0.1px #111">449.02</div>
<div class="t" style="left:276.03px;top:54.00px;font-size:5.200px;line-height:6.240px;color:#222;font-family:'Liberation Sans',sans-serif;font-weight:normal;transform:scaleX(0.8650);-webkit-text-stroke:0.1px #111">CCT(K)</div>
<div class="t" style="left:278.65px;top:62.00px;font-size:5.200px;line-height:6.240px;color:#111;font-family:'Liberation Sans',sans-serif;font-weight:normal;transform:scaleX(0.8650);-webkit-text-stroke:0.1px #111">6582</div>
<div class="t" style="left:310.50px;top:54.00px;font-size:5.200px;line-height:6.240px;color:#222;font-family:'Liberation Sans',sans-serif;font-weight:normal;transform:scaleX(0.8650);-webkit-text-stroke:0.1px #111">Duv</div>
<div class="t" style="left:306.37px;top:62.00px;font-size:5.200px;line-height:6.240px;color:#111;font-family:'Liberation Sans',sans-serif;font-weight:normal;transform:scaleX(0.8650);-webkit-text-stroke:0.1px #111">0.01905</div>
<div class="t" style="left:344.73px;top:54.00px;font-size:5.200px;line-height:6.240px;color:#222;font-family:'Liberation Sans',sans-serif;font-weight:normal;transform:scaleX(0.8650);-webkit-text-stroke:0.1px #111">x</div>
<div class="t" style="left:338.97px;top:62.00px;font-size:5.200px;line-height:6.240px;color:#111;font-family:'Liberation Sans',sans-serif;font-weight:normal;transform:scaleX(0.8650);-webkit-text-stroke:0.1px #111">0.3075</div>
<div class="t" style="left:376.23px;top:54.00px;font-size:5.200px;line-height:6.240px;color:#222;font-family:'Liberation Sans',sans-serif;font-weight:normal;transform:scaleX(0.8650);-webkit-text-stroke:0.1px #111">y</div>
<div class="t" style="left:370.47px;top:62.00px;font-size:5.200px;line-height:6.240px;color:#111;font-family:'Liberation Sans',sans-serif;font-weight:normal;transform:scaleX(0.8650);-webkit-text-stroke:0.1px #111">0.3962</div>
<div class="t" style="left:407.15px;top:54.00px;font-size:5.200px;line-height:6.240px;color:#222;font-family:'Liberation Sans',sans-serif;font-weight:normal;transform:scaleX(0.8650);-webkit-text-stroke:0.1px #111">u</div>
<div class="t" style="left:401.52px;top:62.00px;font-size:5.200px;line-height:6.240px;color:#111;font-family:'Liberation Sans',sans-serif;font-weight:normal;transform:scaleX(0.8650);-webkit-text-stroke:0.1px #111">0.1845</div>
<div class="t" style="left:438.18px;top:54.00px;font-size:5.200px;line-height:6.240px;color:#222;font-family:'Liberation Sans',sans-serif;font-weight:normal;transform:scaleX(0.8650);-webkit-text-stroke:0.1px #111">v</div>
<div class="t" style="left:432.42px;top:62.00px;font-size:5.200px;line-height:6.240px;color:#111;font-family:'Liberation Sans',sans-serif;font-weight:normal;transform:scaleX(0.8650);-webkit-text-stroke:0.1px #111">0.3209</div>
<div class="t" style="left:468.62px;top:54.00px;font-size:5.200px;line-height:6.240px;color:#222;font-family:'Liberation Sans',sans-serif;font-weight:normal;transform:scaleX(0.8650);-webkit-text-stroke:0.1px #111">u'</div>
<div class="t" style="left:463.42px;top:62.00px;font-size:5.200px;line-height:6.240px;color:#111;font-family:'Liberation Sans',sans-serif;font-weight:normal;transform:scaleX(0.8650);-webkit-text-stroke:0.1px #111">0.1845</div>
<div class="t" style="left:499.95px;top:54.00px;font-size:5.200px;line-height:6.240px;color:#222;font-family:'Liberation Sans',sans-serif;font-weight:normal;transform:scaleX(0.8650);-webkit-text-stroke:0.1px #111">v'</div>
<div class="t" style="left:494.62px;top:62.00px;font-size:5.200px;line-height:6.240px;color:#111;font-family:'Liberation Sans',sans-serif;font-weight:normal;transform:scaleX(0.8650);-webkit-text-stroke:0.1px #111">0.4814</div>
<div class="t" style="left:526.58px;top:54.00px;font-size:5.200px;line-height:6.240px;color:#222;font-family:'Liberation Sans',sans-serif;font-weight:normal;transform:scaleX(0.8650);-webkit-text-stroke:0.1px #111">SDCM</div>
<div class="t" style="left:527.57px;top:62.00px;font-size:5.200px;line-height:6.240px;color:#111;font-family:'Liberation Sans',sans-serif;font-weight:normal;transform:scaleX(0.8650);-webkit-text-stroke:0.1px #111">15.59</div>
<div class="t" style="left:561.53px;top:54.00px;font-size:5.200px;line-height:6.240px;color:#222;font-family:'Liberation Sans',sans-serif;font-weight:normal;transform:scaleX(0.8650);-webkit-text-stroke:0.1px #111">Ra</div>
<div class="t" style="left:560.02px;top:62.00px;font-size:5.200px;line-height:6.240px;color:#111;font-family:'Liberation Sans',sans-serif;font-weight:normal;transform:scaleX(0.8650);-webkit-text-stroke:0.1px #111">85.0</div>
<div class="t" style="left:592.50px;top:54.00px;font-size:5.200px;line-height:6.240px;color:#222;font-family:'Liberation Sans',sans-serif;font-weight:normal;transform:scaleX(0.8900);-webkit-text-stroke:0.1px #111">R</div>
<div class="t" style="left:593.00px;top:62.00px;font-size:5.200px;line-height:6.240px;color:#111;font-family:'Liberation Sans',sans-serif;font-weight:normal;transform:scaleX(0.8900);-webkit-text-stroke:0.1px #111">7</div>
<div class="t" style="left:150.80px;top:220.00px;font-size:5.500px;line-height:6.600px;color:#222;font-family:'Liberation Sans',sans-serif;font-weight:normal;transform:scaleX(0.7369);-webkit-text-stroke:0.1px #111">Spectrogram</div>
<div class="t" style="left:185.30px;top:220.00px;font-size:5.500px;line-height:6.600px;color:#222;font-family:'Liberation Sans',sans-serif;font-weight:normal;transform:scaleX(0.8398);-webkit-text-stroke:0.1px #111">CIE</div>
<div class="t" style="left:204.00px;top:220.00px;font-size:5.500px;line-height:6.600px;color:#222;font-family:'Liberation Sans',sans-serif;font-weight:normal;transform:scaleX(0.7225);-webkit-text-stroke:0.1px #111">Flicker</div>
<div class="t" style="left:152.30px;top:244.00px;font-size:6.000px;line-height:7.200px;color:#0a1e3a;font-family:'Liberation Mono',monospace;font-weight:normal;transform:scaleX(0.8980);-webkit-text-stroke:0.15px #0a1e3a">1.0</div>
<div class="t" style="left:152.30px;top:270.00px;font-size:6.000px;line-height:7.200px;color:#0a1e3a;font-family:'Liberation Mono',monospace;font-weight:normal;transform:scaleX(0.8980);-webkit-text-stroke:0.15px #0a1e3a">0.8</div>
<div class="t" style="left:152.30px;top:297.00px;font-size:6.000px;line-height:7.200px;color:#0a1e3a;font-family:'Liberation Mono',monospace;font-weight:normal;transform:scaleX(0.8980);-webkit-text-stroke:0.15px #0a1e3a">0.6</div>
<div class="t" style="left:152.30px;top:323.00px;font-size:6.000px;line-height:7.200px;color:#0a1e3a;font-family:'Liberation Mono',monospace;font-weight:normal;transform:scaleX(0.8980);-webkit-text-stroke:0.15px #0a1e3a">0.4</div>
<div class="t" style="left:152.30px;top:350.00px;font-size:6.000px;line-height:7.200px;color:#0a1e3a;font-family:'Liberation Mono',monospace;font-weight:normal;transform:scaleX(0.8980);-webkit-text-stroke:0.15px #0a1e3a">0.2</div>
<div class="t" style="left:158.40px;top:381.00px;font-size:5.500px;line-height:6.600px;color:#0a1e3a;font-family:'Liberation Mono',monospace;font-weight:normal;transform:scaleX(1.0099);-webkit-text-stroke:0.1px #0a1e3a">380</div>
<div class="t" style="left:199.00px;top:381.00px;font-size:5.500px;line-height:6.600px;color:#0a1e3a;font-family:'Liberation Mono',monospace;font-weight:normal;transform:scaleX(1.0099);-webkit-text-stroke:0.1px #0a1e3a">420</div>
<div class="t" style="left:239.60px;top:381.00px;font-size:5.500px;line-height:6.600px;color:#0a1e3a;font-family:'Liberation Mono',monospace;font-weight:normal;transform:scaleX(1.0099);-webkit-text-stroke:0.1px #0a1e3a">460</div>
<div class="t" style="left:280.20px;top:381.00px;font-size:5.500px;line-height:6.600px;color:#0a1e3a;font-family:'Liberation Mono',monospace;font-weight:normal;transform:scaleX(1.0099);-webkit-text-stroke:0.1px #0a1e3a">500</div>
<div class="t" style="left:320.80px;top:381.00px;font-size:5.500px;line-height:6.600px;color:#0a1e3a;font-family:'Liberation Mono',monospace;font-weight:normal;transform:scaleX(1.0099);-webkit-text-stroke:0.1px #0a1e3a">540</div>
<div class="t" style="left:361.40px;top:381.00px;font-size:5.500px;line-height:6.600px;color:#0a1e3a;font-family:'Liberation Mono',monospace;font-weight:normal;transform:scaleX(1.0099);-webkit-text-stroke:0.1px #0a1e3a">580</div>
<div class="t" style="left:402.00px;top:381.00px;font-size:5.500px;line-height:6.600px;color:#0a1e3a;font-family:'Liberation Mono',monospace;font-weight:normal;transform:scaleX(1.0099);-webkit-text-stroke:0.1px #0a1e3a">620</div>
<div class="t" style="left:442.60px;top:381.00px;font-size:5.500px;line-height:6.600px;color:#0a1e3a;font-family:'Liberation Mono',monospace;font-weight:normal;transform:scaleX(1.0099);-webkit-text-stroke:0.1px #0a1e3a">660</div>
<div class="t" style="left:483.20px;top:381.00px;font-size:5.500px;line-height:6.600px;color:#0a1e3a;font-family:'Liberation Mono',monospace;font-weight:normal;transform:scaleX(1.0099);-webkit-text-stroke:0.1px #0a1e3a">700</div>
<div class="t" style="left:523.80px;top:381.00px;font-size:5.500px;line-height:6.600px;color:#0a1e3a;font-family:'Liberation Mono',monospace;font-weight:normal;transform:scaleX(1.0099);-webkit-text-stroke:0.1px #0a1e3a">740</div>
<div class="t" style="left:564.40px;top:381.00px;font-size:5.500px;line-height:6.600px;color:#0a1e3a;font-family:'Liberation Mono',monospace;font-weight:normal;transform:scaleX(1.0099);-webkit-text-stroke:0.1px #0a1e3a">780</div>
<div class="t" style="left:204.00px;top:234.00px;font-size:6.500px;line-height:7.800px;color:#0a1e3a;font-family:'Liberation Mono',monospace;font-weight:normal;transform:scaleX(1.0035);-webkit-text-stroke:0.1px #0a1e3a">Wave: 543.1nm Value: 0.810uW/cm²/nm</div>
<div class="t" style="left:613.50px;top:42.00px;font-size:5.000px;line-height:6.000px;color:#222;font-family:'Liberation Sans',sans-serif;font-weight:normal;transform:scaleX(0.8398);-webkit-text-stroke:0.1px #111">CIE</div>
<div class="t" style="left:607.50px;top:206.00px;font-size:5.600px;line-height:6.720px;color:#111;font-family:'Liberation Serif',serif;font-weight:normal;transform:scaleX(0.8557);">CIE 1931</div>
<div class="t" style="left:629.50px;top:206.00px;font-size:5.600px;line-height:6.720px;color:#111;font-family:'Liberation Serif',serif;font-weight:normal;transform:scaleX(0.8557);">CIE 1960</div>
<div class="t" style="left:651.50px;top:206.00px;font-size:5.600px;line-height:6.720px;color:#111;font-family:'Liberation Serif',serif;font-weight:normal;transform:scaleX(0.8557);">CIE 1976</div>
<div class="t" style="left:612.50px;top:220.00px;font-size:5.000px;line-height:6.000px;color:#222;font-family:'Liberation Sans',sans-serif;font-weight:normal;transform:scaleX(0.7472);-webkit-text-stroke:0.1px #111">SDCM</div>
<div class="t" style="left:634.00px;top:220.00px;font-size:5.000px;line-height:6.000px;color:#222;font-family:'Liberation Sans',sans-serif;font-weight:normal;transform:scaleX(0.8550);-webkit-text-stroke:0.1px #111">CHROMA</div>
<div class="t" style="left:606.00px;top:234.00px;font-size:5.000px;line-height:6.000px;color:#222;font-family:'Liberation Sans',sans-serif;font-weight:normal;transform:scaleX(0.8832);-webkit-text-stroke:0.1px #111">Select:</div>
<div class="t" style="left:625.00px;top:234.00px;font-size:5.000px;line-height:6.000px;color:#222;font-family:'Liberation Sans',sans-serif;font-weight:normal;transform:scaleX(0.8750);-webkit-text-stroke:0.1px #111">Auto</div>
<div class="t" style="left:614.40px;top:251.00px;font-size:5.000px;line-height:6.000px;color:#c8285a;font-family:'Liberation Sans',sans-serif;font-weight:bold;transform:scaleX(1.0761);">SDCM: 15.6</div>
<div class="t" style="left:651.00px;top:380.00px;font-size:5.400px;line-height:6.480px;color:#0a0a0a;font-family:'Liberation Sans',sans-serif;font-weight:bold;transform:scaleX(1.0162);">x=0.319 y=0.347 6100K/YANKON</div>
<div class="t" style="left:1.00px;top:398.00px;font-size:5.400px;line-height:6.480px;color:#000;font-family:'Liberation Sans',sans-serif;font-weight:normal;transform:scaleX(0.8649);-webkit-text-stroke:0.1px #111">Ready</div>
<div class="t" style="left:371.50px;top:399.00px;font-size:5.400px;line-height:6.480px;color:#000;font-family:'Liberation Sans',sans-serif;font-weight:normal;transform:scaleX(0.8882);-webkit-text-stroke:0.1px #111">Listening</div>
<div class="t" style="left:660.70px;top:399.00px;font-size:5.000px;line-height:6.000px;color:#333;font-family:'Liberation Sans',sans-serif;font-weight:normal;transform:scaleX(0.9046);-webkit-text-stroke:0.1px #111">CAP</div>
<div class="t" style="left:672.70px;top:399.00px;font-size:5.000px;line-height:6.000px;color:#333;font-family:'Liberation Sans',sans-serif;font-weight:normal;transform:scaleX(0.8167);-webkit-text-stroke:0.1px #111">NUM</div>
<div class="t" style="left:687.00px;top:399.00px;font-size:5.000px;line-height:6.000px;color:#222;font-family:'Liberation Sans',sans-serif;font-weight:normal;transform:scaleX(1.1518);-webkit-text-stroke:0.1px #111">CX</div>
<div class="t" style="left:697.00px;top:398.00px;font-size:6.000px;line-height:7.200px;color:#111;font-family:'Liberation Sans',sans-serif;font-weight:bold;transform:scaleX(1.2005);">M</div>
<div class="t" style="left:705.00px;top:398.00px;font-size:5.500px;line-height:6.600px;color:#111;font-family:'Liberation Sans',sans-serif;font-weight:normal;transform:scaleX(1.0909);-webkit-text-stroke:0.1px #111">中</div>
</body></html>
